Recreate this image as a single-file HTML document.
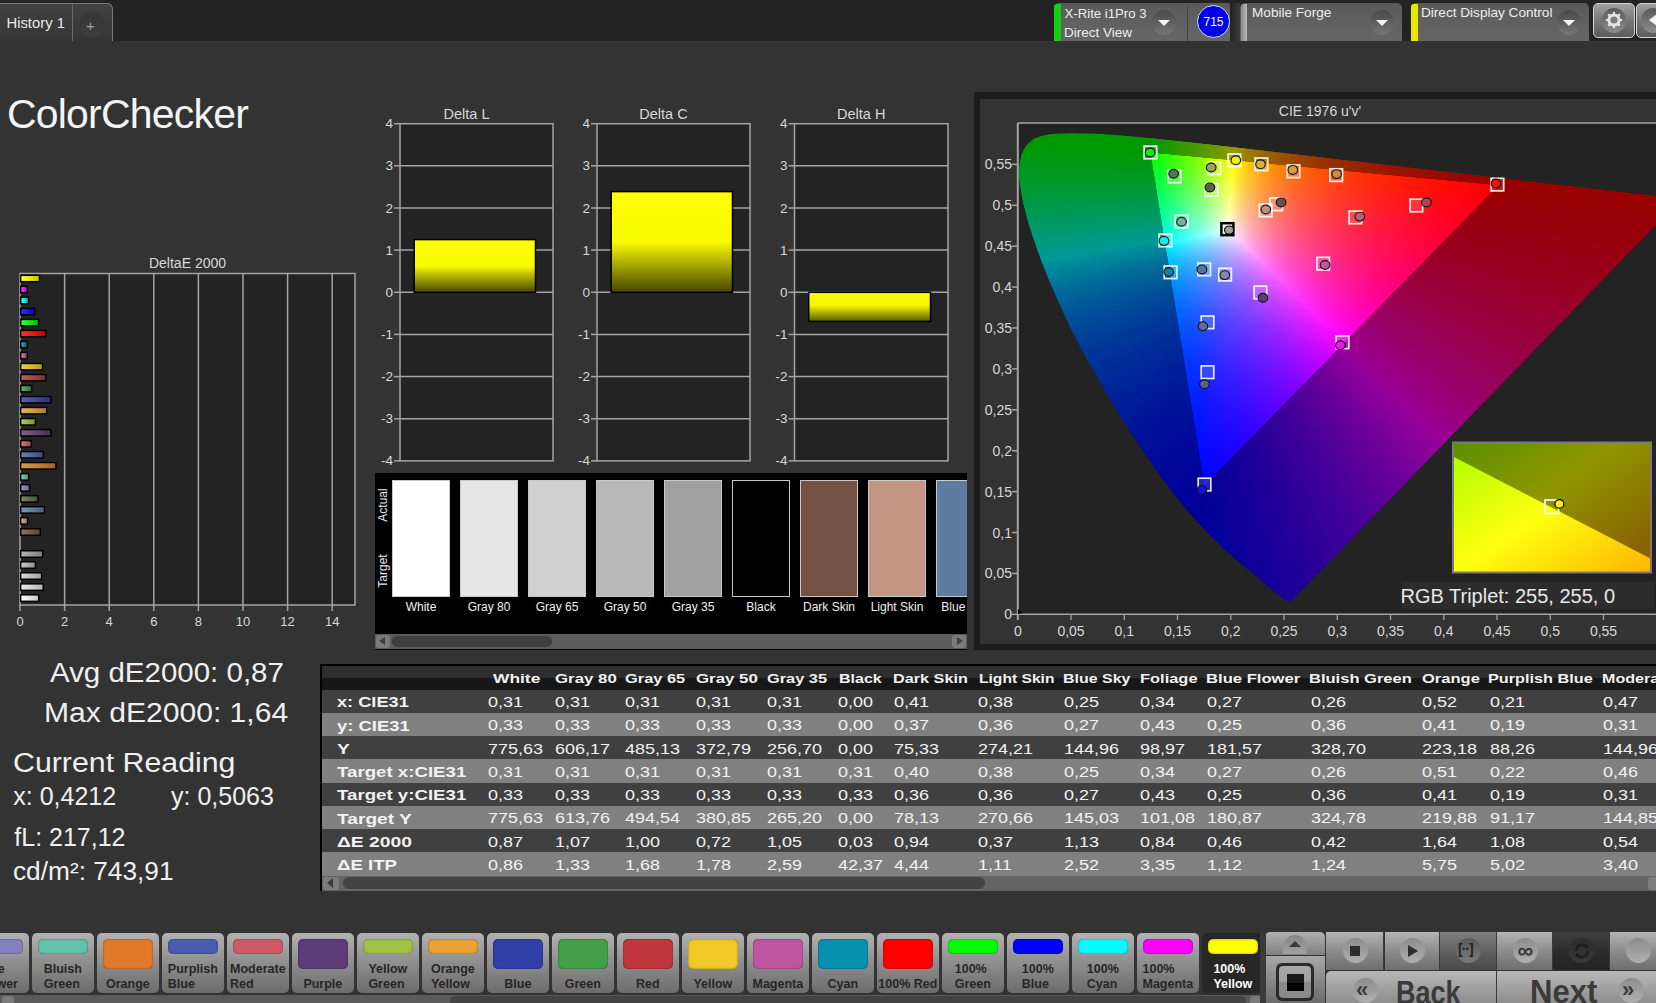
<!DOCTYPE html>
<html><head><meta charset="utf-8"><title>ColorChecker</title>
<style>
*{box-sizing:border-box;margin:0;padding:0}
html,body{width:1656px;height:1003px;overflow:hidden;background:#333333;font-family:"Liberation Sans",sans-serif;color:#e8e8e8}
.a{position:absolute}
.t{position:absolute;white-space:nowrap;line-height:1}
</style></head><body>

<div class="a" style="left:0;top:0;width:1656px;height:41px;background:#232323"></div>
<div class="a" style="left:-4px;top:3px;width:117px;height:38px;border:1px solid #7a7a7a;border-bottom:none;border-radius:0 6px 0 0;background:linear-gradient(#424242,#353535)"></div>
<div class="a" style="left:72px;top:4px;width:1px;height:37px;background:#6a6a6a"></div>
<div class="a" style="left:79.5px;top:12.5px;width:24px;height:25px;border-radius:50%;background:linear-gradient(#363636,#3e3e3e);box-shadow:0 0 1px #2a2a2a"></div>
<div class="t" style="left:86px;top:17.5px;font-size:15px;color:#a0a0a0">+</div>
<div class="t" style="left:6.5px;top:16px;font-size:14.8px;color:#e8e8e8">History 1</div>
<div class="a" style="left:1054px;top:3px;width:178px;height:38px;border-radius:5px 5px 0 0;background:linear-gradient(#5a5a5a,#666)"></div>
<div class="a" style="left:1054px;top:4px;width:7px;height:37px;background:#10d010;border-radius:3px 0 0 0"></div>
<div class="t" style="left:1064.5px;top:7px;font-size:13.2px;color:#eee">X-Rite i1Pro 3</div>
<div class="t" style="left:1064px;top:25.5px;font-size:13.5px;color:#eee">Direct View</div>
<div class="a" style="left:1152px;top:10px;width:24px;height:25px;border-radius:50%;background:linear-gradient(#484848,#767676)"></div><div class="a" style="left:1158px;top:20px;width:0;height:0;border-left:6px solid transparent;border-right:6px solid transparent;border-top:6px solid #f4f4f4"></div>
<div class="a" style="left:1187px;top:6px;width:1px;height:35px;background:#444"></div>
<div class="a" style="left:1197px;top:5px;width:33px;height:33px;border-radius:50%;background:#0000e8;border:1.5px solid #d8d8ff"></div>
<div class="t" style="left:1197px;top:16px;width:33px;text-align:center;font-size:12px;color:#fff">715</div>
<div class="a" style="left:1240px;top:3px;width:162px;height:38px;border-radius:5px 5px 0 0;background:linear-gradient(#5a5a5a,#666)"></div>
<div class="a" style="left:1241px;top:4px;width:6px;height:37px;background:linear-gradient(90deg,#888,#bbb);border-radius:3px 0 0 0"></div>
<div class="a" style="left:1230px;top:3px;width:10px;height:38px;background:linear-gradient(90deg,#232323,#3a3a3a)"></div>
<div class="t" style="left:1252px;top:6px;font-size:13.6px;color:#eee">Mobile Forge</div>
<div class="a" style="left:1370px;top:10px;width:24px;height:25px;border-radius:50%;background:linear-gradient(#484848,#767676)"></div><div class="a" style="left:1376px;top:20px;width:0;height:0;border-left:6px solid transparent;border-right:6px solid transparent;border-top:6px solid #f4f4f4"></div>
<div class="a" style="left:1411px;top:3px;width:178px;height:38px;border-radius:5px 5px 0 0;background:linear-gradient(#5a5a5a,#666)"></div>
<div class="a" style="left:1411px;top:4px;width:7px;height:37px;background:#e8e800;border-radius:3px 0 0 0"></div>
<div class="t" style="left:1421px;top:6px;font-size:13.6px;color:#eee">Direct Display Control</div>
<div class="a" style="left:1557px;top:10px;width:24px;height:25px;border-radius:50%;background:linear-gradient(#484848,#767676)"></div><div class="a" style="left:1563px;top:20px;width:0;height:0;border-left:6px solid transparent;border-right:6px solid transparent;border-top:6px solid #f4f4f4"></div>
<div class="a" style="left:1593px;top:3px;width:42px;height:35px;border-radius:5px;border:1.2px solid #d4d4d4;background:linear-gradient(#a0a0a0,#787878 50%,#5c5c5c)"></div>
<div class="a" style="left:1602px;top:8px;width:24px;height:25px;border-radius:50%;background:linear-gradient(#5a5a5a,#8c8c8c)"></div>
<svg class="a" style="left:1604px;top:10px" width="20" height="20" viewBox="0 0 20 20"><g fill="#e4e4e4"><circle cx="10" cy="10" r="6.6"/><rect x="8.9" y="1.8" width="2.2" height="4" rx="0.6" transform="rotate(0 10 10)"/><rect x="8.9" y="1.8" width="2.2" height="4" rx="0.6" transform="rotate(45 10 10)"/><rect x="8.9" y="1.8" width="2.2" height="4" rx="0.6" transform="rotate(90 10 10)"/><rect x="8.9" y="1.8" width="2.2" height="4" rx="0.6" transform="rotate(135 10 10)"/><rect x="8.9" y="1.8" width="2.2" height="4" rx="0.6" transform="rotate(180 10 10)"/><rect x="8.9" y="1.8" width="2.2" height="4" rx="0.6" transform="rotate(225 10 10)"/><rect x="8.9" y="1.8" width="2.2" height="4" rx="0.6" transform="rotate(270 10 10)"/><rect x="8.9" y="1.8" width="2.2" height="4" rx="0.6" transform="rotate(315 10 10)"/></g><circle cx="10" cy="10" r="3.6" fill="#7a7a7a"/></svg>
<div class="a" style="left:1636px;top:3px;width:30px;height:35px;border-radius:5px;border:1.2px solid #d4d4d4;background:linear-gradient(#a0a0a0,#787878 50%,#5c5c5c)"></div>
<div class="a" style="left:1641px;top:8px;width:24px;height:25px;border-radius:50%;background:linear-gradient(#5a5a5a,#8c8c8c)"></div>
<div class="a" style="left:1649px;top:13.5px;width:0;height:0;border-top:6px solid transparent;border-bottom:6px solid transparent;border-right:8px solid #f4f4f4"></div>
<div class="t" style="left:7px;top:93.5px;font-size:41px;letter-spacing:-0.8px;color:#f4f4f4">ColorChecker</div>
<div class="t" style="left:20px;top:256px;width:335px;text-align:center;font-size:14px;color:#d8d8d8">DeltaE 2000</div>
<svg class="a" style="left:0;top:260px" width="370" height="380" viewBox="0 260 370 380"><rect x="20" y="273.5" width="335" height="331.5" fill="#232323"/><line x1="64.6" y1="273.5" x2="64.6" y2="605" stroke="#a4a4a4" stroke-width="1.5"/><line x1="109.2" y1="273.5" x2="109.2" y2="605" stroke="#a4a4a4" stroke-width="1.5"/><line x1="153.8" y1="273.5" x2="153.8" y2="605" stroke="#a4a4a4" stroke-width="1.5"/><line x1="198.4" y1="273.5" x2="198.4" y2="605" stroke="#a4a4a4" stroke-width="1.5"/><line x1="243.0" y1="273.5" x2="243.0" y2="605" stroke="#a4a4a4" stroke-width="1.5"/><line x1="287.6" y1="273.5" x2="287.6" y2="605" stroke="#a4a4a4" stroke-width="1.5"/><line x1="332.2" y1="273.5" x2="332.2" y2="605" stroke="#a4a4a4" stroke-width="1.5"/><rect x="20" y="273.5" width="335" height="331.5" fill="none" stroke="#a4a4a4" stroke-width="1.5"/><line x1="20.0" y1="605" x2="20.0" y2="611" stroke="#a4a4a4" stroke-width="1.5"/><line x1="64.6" y1="605" x2="64.6" y2="611" stroke="#a4a4a4" stroke-width="1.5"/><line x1="109.2" y1="605" x2="109.2" y2="611" stroke="#a4a4a4" stroke-width="1.5"/><line x1="153.8" y1="605" x2="153.8" y2="611" stroke="#a4a4a4" stroke-width="1.5"/><line x1="198.4" y1="605" x2="198.4" y2="611" stroke="#a4a4a4" stroke-width="1.5"/><line x1="243.0" y1="605" x2="243.0" y2="611" stroke="#a4a4a4" stroke-width="1.5"/><line x1="287.6" y1="605" x2="287.6" y2="611" stroke="#a4a4a4" stroke-width="1.5"/><line x1="332.2" y1="605" x2="332.2" y2="611" stroke="#a4a4a4" stroke-width="1.5"/><defs><linearGradient id="bsh" x1="0" x2="1" y1="0" y2="0"><stop offset="0" stop-color="#fff" stop-opacity="0.18"/><stop offset="1" stop-color="#000" stop-opacity="0.22"/></linearGradient></defs><rect x="20.7" y="275.3" width="18.7" height="6.4" fill="#ffff00" stroke="#000" stroke-width="1.5"/><rect x="21.45" y="276.1" width="17.2" height="4.9" fill="url(#bsh)"/><rect x="20.7" y="286.3" width="6.6" height="6.4" fill="#ff00ff" stroke="#000" stroke-width="1.5"/><rect x="21.45" y="287.1" width="5.1" height="4.9" fill="url(#bsh)"/><rect x="20.7" y="297.3" width="7.7" height="6.4" fill="#00ffff" stroke="#000" stroke-width="1.5"/><rect x="21.45" y="298.1" width="6.2" height="4.9" fill="url(#bsh)"/><rect x="20.7" y="308.4" width="14.0" height="6.4" fill="#0000ff" stroke="#000" stroke-width="1.5"/><rect x="21.45" y="309.1" width="12.5" height="4.9" fill="url(#bsh)"/><rect x="20.7" y="319.4" width="17.8" height="6.4" fill="#00ff00" stroke="#000" stroke-width="1.5"/><rect x="21.45" y="320.1" width="16.3" height="4.9" fill="url(#bsh)"/><rect x="20.7" y="330.4" width="25.1" height="6.4" fill="#ff0000" stroke="#000" stroke-width="1.5"/><rect x="21.45" y="331.2" width="23.6" height="4.9" fill="url(#bsh)"/><rect x="20.7" y="341.4" width="6.6" height="6.4" fill="#0885a1" stroke="#000" stroke-width="1.5"/><rect x="21.45" y="342.2" width="5.1" height="4.9" fill="url(#bsh)"/><rect x="20.7" y="352.4" width="6.6" height="6.4" fill="#bb5695" stroke="#000" stroke-width="1.5"/><rect x="21.45" y="353.2" width="5.1" height="4.9" fill="url(#bsh)"/><rect x="20.7" y="363.5" width="21.8" height="6.4" fill="#e7c71f" stroke="#000" stroke-width="1.5"/><rect x="21.45" y="364.2" width="20.3" height="4.9" fill="url(#bsh)"/><rect x="20.7" y="374.5" width="25.1" height="6.4" fill="#af363c" stroke="#000" stroke-width="1.5"/><rect x="21.45" y="375.2" width="23.6" height="4.9" fill="url(#bsh)"/><rect x="20.7" y="385.5" width="10.9" height="6.4" fill="#469449" stroke="#000" stroke-width="1.5"/><rect x="21.45" y="386.2" width="9.4" height="4.9" fill="url(#bsh)"/><rect x="20.7" y="396.5" width="30.3" height="6.4" fill="#383d96" stroke="#000" stroke-width="1.5"/><rect x="21.45" y="397.3" width="28.8" height="4.9" fill="url(#bsh)"/><rect x="20.7" y="407.5" width="26.0" height="6.4" fill="#e0a32e" stroke="#000" stroke-width="1.5"/><rect x="21.45" y="408.3" width="24.5" height="4.9" fill="url(#bsh)"/><rect x="20.7" y="418.6" width="14.7" height="6.4" fill="#9dbc40" stroke="#000" stroke-width="1.5"/><rect x="21.45" y="419.3" width="13.2" height="4.9" fill="url(#bsh)"/><rect x="20.7" y="429.6" width="30.3" height="6.4" fill="#5e3c6c" stroke="#000" stroke-width="1.5"/><rect x="21.45" y="430.3" width="28.8" height="4.9" fill="url(#bsh)"/><rect x="20.7" y="440.6" width="10.6" height="6.4" fill="#c15a63" stroke="#000" stroke-width="1.5"/><rect x="21.45" y="441.3" width="9.1" height="4.9" fill="url(#bsh)"/><rect x="20.7" y="451.6" width="22.7" height="6.4" fill="#505ba6" stroke="#000" stroke-width="1.5"/><rect x="21.45" y="452.4" width="21.2" height="4.9" fill="url(#bsh)"/><rect x="20.7" y="462.6" width="35.2" height="6.4" fill="#d67e2c" stroke="#000" stroke-width="1.5"/><rect x="21.45" y="463.4" width="33.7" height="4.9" fill="url(#bsh)"/><rect x="20.7" y="473.7" width="8.0" height="6.4" fill="#67bdaa" stroke="#000" stroke-width="1.5"/><rect x="21.45" y="474.4" width="6.5" height="4.9" fill="url(#bsh)"/><rect x="20.7" y="484.7" width="8.9" height="6.4" fill="#8580b1" stroke="#000" stroke-width="1.5"/><rect x="21.45" y="485.4" width="7.4" height="4.9" fill="url(#bsh)"/><rect x="20.7" y="495.7" width="17.3" height="6.4" fill="#596b42" stroke="#000" stroke-width="1.5"/><rect x="21.45" y="496.4" width="15.8" height="4.9" fill="url(#bsh)"/><rect x="20.7" y="506.7" width="23.8" height="6.4" fill="#5e7ba0" stroke="#000" stroke-width="1.5"/><rect x="21.45" y="507.5" width="22.3" height="4.9" fill="url(#bsh)"/><rect x="20.7" y="517.7" width="6.9" height="6.4" fill="#c29682" stroke="#000" stroke-width="1.5"/><rect x="21.45" y="518.5" width="5.4" height="4.9" fill="url(#bsh)"/><rect x="20.7" y="528.8" width="19.6" height="6.4" fill="#735244" stroke="#000" stroke-width="1.5"/><rect x="21.45" y="529.5" width="18.1" height="4.9" fill="url(#bsh)"/><rect x="20.7" y="550.8" width="22.0" height="6.4" fill="#a0a0a0" stroke="#000" stroke-width="1.5"/><rect x="21.45" y="551.5" width="20.5" height="4.9" fill="url(#bsh)"/><rect x="20.7" y="561.8" width="14.7" height="6.4" fill="#b9b9b9" stroke="#000" stroke-width="1.5"/><rect x="21.45" y="562.6" width="13.2" height="4.9" fill="url(#bsh)"/><rect x="20.7" y="572.8" width="20.9" height="6.4" fill="#d0d0d0" stroke="#000" stroke-width="1.5"/><rect x="21.45" y="573.6" width="19.4" height="4.9" fill="url(#bsh)"/><rect x="20.7" y="583.9" width="22.5" height="6.4" fill="#e6e6e6" stroke="#000" stroke-width="1.5"/><rect x="21.45" y="584.6" width="21.0" height="4.9" fill="url(#bsh)"/><rect x="20.7" y="594.9" width="18.0" height="6.4" fill="#ffffff" stroke="#000" stroke-width="1.5"/><rect x="21.45" y="595.6" width="16.5" height="4.9" fill="url(#bsh)"/></svg>
<div class="t" style="left:5.0px;top:615px;width:30px;text-align:center;font-size:13px;color:#d8d8d8">0</div>
<div class="t" style="left:49.6px;top:615px;width:30px;text-align:center;font-size:13px;color:#d8d8d8">2</div>
<div class="t" style="left:94.2px;top:615px;width:30px;text-align:center;font-size:13px;color:#d8d8d8">4</div>
<div class="t" style="left:138.8px;top:615px;width:30px;text-align:center;font-size:13px;color:#d8d8d8">6</div>
<div class="t" style="left:183.4px;top:615px;width:30px;text-align:center;font-size:13px;color:#d8d8d8">8</div>
<div class="t" style="left:228.0px;top:615px;width:30px;text-align:center;font-size:13px;color:#d8d8d8">10</div>
<div class="t" style="left:272.6px;top:615px;width:30px;text-align:center;font-size:13px;color:#d8d8d8">12</div>
<div class="t" style="left:317.2px;top:615px;width:30px;text-align:center;font-size:13px;color:#d8d8d8">14</div>
<div class="t" style="left:390.0px;top:107px;width:153.0px;text-align:center;font-size:14.5px;color:#d8d8d8">Delta L</div>
<svg class="a" style="left:370px;top:110px" width="193" height="360" viewBox="370 110 193 360"><rect x="400.0" y="123.7" width="153.0" height="337.2" fill="#232323"/><line x1="400.0" y1="165.8" x2="553.0" y2="165.8" stroke="#a4a4a4" stroke-width="1.5"/><line x1="400.0" y1="208.0" x2="553.0" y2="208.0" stroke="#a4a4a4" stroke-width="1.5"/><line x1="400.0" y1="250.1" x2="553.0" y2="250.1" stroke="#a4a4a4" stroke-width="1.5"/><line x1="400.0" y1="292.3" x2="553.0" y2="292.3" stroke="#a4a4a4" stroke-width="1.5"/><line x1="400.0" y1="334.4" x2="553.0" y2="334.4" stroke="#a4a4a4" stroke-width="1.5"/><line x1="400.0" y1="376.6" x2="553.0" y2="376.6" stroke="#a4a4a4" stroke-width="1.5"/><line x1="400.0" y1="418.8" x2="553.0" y2="418.8" stroke="#a4a4a4" stroke-width="1.5"/><line x1="394.0" y1="123.7" x2="400.0" y2="123.7" stroke="#a4a4a4" stroke-width="1.5"/><line x1="394.0" y1="165.8" x2="400.0" y2="165.8" stroke="#a4a4a4" stroke-width="1.5"/><line x1="394.0" y1="208.0" x2="400.0" y2="208.0" stroke="#a4a4a4" stroke-width="1.5"/><line x1="394.0" y1="250.1" x2="400.0" y2="250.1" stroke="#a4a4a4" stroke-width="1.5"/><line x1="394.0" y1="292.3" x2="400.0" y2="292.3" stroke="#a4a4a4" stroke-width="1.5"/><line x1="394.0" y1="334.4" x2="400.0" y2="334.4" stroke="#a4a4a4" stroke-width="1.5"/><line x1="394.0" y1="376.6" x2="400.0" y2="376.6" stroke="#a4a4a4" stroke-width="1.5"/><line x1="394.0" y1="418.8" x2="400.0" y2="418.8" stroke="#a4a4a4" stroke-width="1.5"/><line x1="394.0" y1="460.9" x2="400.0" y2="460.9" stroke="#a4a4a4" stroke-width="1.5"/><defs><linearGradient id="g400" x1="0" x2="0" y1="0" y2="1"><stop offset="0" stop-color="#ffff00"/><stop offset="0.5" stop-color="#fafa00"/><stop offset="1" stop-color="#464600"/></linearGradient></defs><rect x="414.2" y="239.6" width="121.3" height="52.7" fill="url(#g400)" stroke="#000" stroke-width="1.5"/><rect x="400.0" y="123.7" width="153.0" height="337.2" fill="none" stroke="#a4a4a4" stroke-width="1.5"/></svg>
<div class="t" style="left:363.0px;top:117.2px;width:30px;text-align:right;font-size:13.5px;color:#d8d8d8">4</div>
<div class="t" style="left:363.0px;top:159.3px;width:30px;text-align:right;font-size:13.5px;color:#d8d8d8">3</div>
<div class="t" style="left:363.0px;top:201.5px;width:30px;text-align:right;font-size:13.5px;color:#d8d8d8">2</div>
<div class="t" style="left:363.0px;top:243.6px;width:30px;text-align:right;font-size:13.5px;color:#d8d8d8">1</div>
<div class="t" style="left:363.0px;top:285.8px;width:30px;text-align:right;font-size:13.5px;color:#d8d8d8">0</div>
<div class="t" style="left:363.0px;top:327.9px;width:30px;text-align:right;font-size:13.5px;color:#d8d8d8">-1</div>
<div class="t" style="left:363.0px;top:370.1px;width:30px;text-align:right;font-size:13.5px;color:#d8d8d8">-2</div>
<div class="t" style="left:363.0px;top:412.2px;width:30px;text-align:right;font-size:13.5px;color:#d8d8d8">-3</div>
<div class="t" style="left:363.0px;top:454.4px;width:30px;text-align:right;font-size:13.5px;color:#d8d8d8">-4</div>
<div class="t" style="left:587.0px;top:107px;width:153.0px;text-align:center;font-size:14.5px;color:#d8d8d8">Delta C</div>
<svg class="a" style="left:567px;top:110px" width="193" height="360" viewBox="567 110 193 360"><rect x="597.0" y="123.7" width="153.0" height="337.2" fill="#232323"/><line x1="597.0" y1="165.8" x2="750.0" y2="165.8" stroke="#a4a4a4" stroke-width="1.5"/><line x1="597.0" y1="208.0" x2="750.0" y2="208.0" stroke="#a4a4a4" stroke-width="1.5"/><line x1="597.0" y1="250.1" x2="750.0" y2="250.1" stroke="#a4a4a4" stroke-width="1.5"/><line x1="597.0" y1="292.3" x2="750.0" y2="292.3" stroke="#a4a4a4" stroke-width="1.5"/><line x1="597.0" y1="334.4" x2="750.0" y2="334.4" stroke="#a4a4a4" stroke-width="1.5"/><line x1="597.0" y1="376.6" x2="750.0" y2="376.6" stroke="#a4a4a4" stroke-width="1.5"/><line x1="597.0" y1="418.8" x2="750.0" y2="418.8" stroke="#a4a4a4" stroke-width="1.5"/><line x1="591.0" y1="123.7" x2="597.0" y2="123.7" stroke="#a4a4a4" stroke-width="1.5"/><line x1="591.0" y1="165.8" x2="597.0" y2="165.8" stroke="#a4a4a4" stroke-width="1.5"/><line x1="591.0" y1="208.0" x2="597.0" y2="208.0" stroke="#a4a4a4" stroke-width="1.5"/><line x1="591.0" y1="250.1" x2="597.0" y2="250.1" stroke="#a4a4a4" stroke-width="1.5"/><line x1="591.0" y1="292.3" x2="597.0" y2="292.3" stroke="#a4a4a4" stroke-width="1.5"/><line x1="591.0" y1="334.4" x2="597.0" y2="334.4" stroke="#a4a4a4" stroke-width="1.5"/><line x1="591.0" y1="376.6" x2="597.0" y2="376.6" stroke="#a4a4a4" stroke-width="1.5"/><line x1="591.0" y1="418.8" x2="597.0" y2="418.8" stroke="#a4a4a4" stroke-width="1.5"/><line x1="591.0" y1="460.9" x2="597.0" y2="460.9" stroke="#a4a4a4" stroke-width="1.5"/><defs><linearGradient id="g597" x1="0" x2="0" y1="0" y2="1"><stop offset="0" stop-color="#ffff00"/><stop offset="0.5" stop-color="#fafa00"/><stop offset="1" stop-color="#464600"/></linearGradient></defs><rect x="611.2" y="191.6" width="121.3" height="100.7" fill="url(#g597)" stroke="#000" stroke-width="1.5"/><rect x="597.0" y="123.7" width="153.0" height="337.2" fill="none" stroke="#a4a4a4" stroke-width="1.5"/></svg>
<div class="t" style="left:560.0px;top:117.2px;width:30px;text-align:right;font-size:13.5px;color:#d8d8d8">4</div>
<div class="t" style="left:560.0px;top:159.3px;width:30px;text-align:right;font-size:13.5px;color:#d8d8d8">3</div>
<div class="t" style="left:560.0px;top:201.5px;width:30px;text-align:right;font-size:13.5px;color:#d8d8d8">2</div>
<div class="t" style="left:560.0px;top:243.6px;width:30px;text-align:right;font-size:13.5px;color:#d8d8d8">1</div>
<div class="t" style="left:560.0px;top:285.8px;width:30px;text-align:right;font-size:13.5px;color:#d8d8d8">0</div>
<div class="t" style="left:560.0px;top:327.9px;width:30px;text-align:right;font-size:13.5px;color:#d8d8d8">-1</div>
<div class="t" style="left:560.0px;top:370.1px;width:30px;text-align:right;font-size:13.5px;color:#d8d8d8">-2</div>
<div class="t" style="left:560.0px;top:412.2px;width:30px;text-align:right;font-size:13.5px;color:#d8d8d8">-3</div>
<div class="t" style="left:560.0px;top:454.4px;width:30px;text-align:right;font-size:13.5px;color:#d8d8d8">-4</div>
<div class="t" style="left:784.5px;top:107px;width:153.5px;text-align:center;font-size:14.5px;color:#d8d8d8">Delta H</div>
<svg class="a" style="left:764px;top:110px" width="193" height="360" viewBox="764 110 193 360"><rect x="794.5" y="123.7" width="153.5" height="337.2" fill="#232323"/><line x1="794.5" y1="165.8" x2="948.0" y2="165.8" stroke="#a4a4a4" stroke-width="1.5"/><line x1="794.5" y1="208.0" x2="948.0" y2="208.0" stroke="#a4a4a4" stroke-width="1.5"/><line x1="794.5" y1="250.1" x2="948.0" y2="250.1" stroke="#a4a4a4" stroke-width="1.5"/><line x1="794.5" y1="292.3" x2="948.0" y2="292.3" stroke="#a4a4a4" stroke-width="1.5"/><line x1="794.5" y1="334.4" x2="948.0" y2="334.4" stroke="#a4a4a4" stroke-width="1.5"/><line x1="794.5" y1="376.6" x2="948.0" y2="376.6" stroke="#a4a4a4" stroke-width="1.5"/><line x1="794.5" y1="418.8" x2="948.0" y2="418.8" stroke="#a4a4a4" stroke-width="1.5"/><line x1="788.5" y1="123.7" x2="794.5" y2="123.7" stroke="#a4a4a4" stroke-width="1.5"/><line x1="788.5" y1="165.8" x2="794.5" y2="165.8" stroke="#a4a4a4" stroke-width="1.5"/><line x1="788.5" y1="208.0" x2="794.5" y2="208.0" stroke="#a4a4a4" stroke-width="1.5"/><line x1="788.5" y1="250.1" x2="794.5" y2="250.1" stroke="#a4a4a4" stroke-width="1.5"/><line x1="788.5" y1="292.3" x2="794.5" y2="292.3" stroke="#a4a4a4" stroke-width="1.5"/><line x1="788.5" y1="334.4" x2="794.5" y2="334.4" stroke="#a4a4a4" stroke-width="1.5"/><line x1="788.5" y1="376.6" x2="794.5" y2="376.6" stroke="#a4a4a4" stroke-width="1.5"/><line x1="788.5" y1="418.8" x2="794.5" y2="418.8" stroke="#a4a4a4" stroke-width="1.5"/><line x1="788.5" y1="460.9" x2="794.5" y2="460.9" stroke="#a4a4a4" stroke-width="1.5"/><defs><linearGradient id="g794" x1="0" x2="0" y1="0" y2="1"><stop offset="0" stop-color="#ffff00"/><stop offset="0.45" stop-color="#f6f600"/><stop offset="1" stop-color="#5a5a00"/></linearGradient></defs><rect x="808.7" y="292.3" width="121.8" height="29.1" fill="url(#g794)" stroke="#000" stroke-width="1.5"/><rect x="794.5" y="123.7" width="153.5" height="337.2" fill="none" stroke="#a4a4a4" stroke-width="1.5"/></svg>
<div class="t" style="left:757.5px;top:117.2px;width:30px;text-align:right;font-size:13.5px;color:#d8d8d8">4</div>
<div class="t" style="left:757.5px;top:159.3px;width:30px;text-align:right;font-size:13.5px;color:#d8d8d8">3</div>
<div class="t" style="left:757.5px;top:201.5px;width:30px;text-align:right;font-size:13.5px;color:#d8d8d8">2</div>
<div class="t" style="left:757.5px;top:243.6px;width:30px;text-align:right;font-size:13.5px;color:#d8d8d8">1</div>
<div class="t" style="left:757.5px;top:285.8px;width:30px;text-align:right;font-size:13.5px;color:#d8d8d8">0</div>
<div class="t" style="left:757.5px;top:327.9px;width:30px;text-align:right;font-size:13.5px;color:#d8d8d8">-1</div>
<div class="t" style="left:757.5px;top:370.1px;width:30px;text-align:right;font-size:13.5px;color:#d8d8d8">-2</div>
<div class="t" style="left:757.5px;top:412.2px;width:30px;text-align:right;font-size:13.5px;color:#d8d8d8">-3</div>
<div class="t" style="left:757.5px;top:454.4px;width:30px;text-align:right;font-size:13.5px;color:#d8d8d8">-4</div>
<div class="a" style="left:375px;top:473px;width:592px;height:177px;background:#000"></div>
<div class="a" style="left:375px;top:473px;width:592px;height:177px;overflow:hidden">
<div class="a" style="left:17px;top:7px;width:58px;height:117px;background:#ffffff;border:1px solid #c8c8c8"></div>
<div class="t" style="left:17px;top:128px;width:58px;text-align:center;font-size:12px;color:#f0f0f0">White</div>
<div class="a" style="left:85px;top:7px;width:58px;height:117px;background:#e6e6e6;border:1px solid #c8c8c8"></div>
<div class="t" style="left:85px;top:128px;width:58px;text-align:center;font-size:12px;color:#f0f0f0">Gray 80</div>
<div class="a" style="left:153px;top:7px;width:58px;height:117px;background:#d0d0d0;border:1px solid #c8c8c8"></div>
<div class="t" style="left:153px;top:128px;width:58px;text-align:center;font-size:12px;color:#f0f0f0">Gray 65</div>
<div class="a" style="left:221px;top:7px;width:58px;height:117px;background:#b9b9b9;border:1px solid #c8c8c8"></div>
<div class="t" style="left:221px;top:128px;width:58px;text-align:center;font-size:12px;color:#f0f0f0">Gray 50</div>
<div class="a" style="left:289px;top:7px;width:58px;height:117px;background:#a0a0a0;border:1px solid #c8c8c8"></div>
<div class="t" style="left:289px;top:128px;width:58px;text-align:center;font-size:12px;color:#f0f0f0">Gray 35</div>
<div class="a" style="left:357px;top:7px;width:58px;height:117px;background:#000000;border:1px solid #c8c8c8"></div>
<div class="t" style="left:357px;top:128px;width:58px;text-align:center;font-size:12px;color:#f0f0f0">Black</div>
<div class="a" style="left:425px;top:7px;width:58px;height:117px;background:#735244;border:1px solid #c8c8c8"></div>
<div class="t" style="left:425px;top:128px;width:58px;text-align:center;font-size:12px;color:#f0f0f0">Dark Skin</div>
<div class="a" style="left:493px;top:7px;width:58px;height:117px;background:#c29682;border:1px solid #c8c8c8"></div>
<div class="t" style="left:493px;top:128px;width:58px;text-align:center;font-size:12px;color:#f0f0f0">Light Skin</div>
<div class="a" style="left:561px;top:7px;width:58px;height:117px;background:#5e7ba0;border:1px solid #c8c8c8"></div>
<div class="t" style="left:561px;top:128px;width:58px;text-align:center;font-size:12px;color:#f0f0f0">Blue Sky</div>
</div>
<div class="t" style="left:366px;top:499px;font-size:12px;color:#e8e8e8;transform:rotate(-90deg);transform-origin:center;width:34px;text-align:center">Actual</div>
<div class="t" style="left:366px;top:565px;font-size:12px;color:#e8e8e8;transform:rotate(-90deg);transform-origin:center;width:34px;text-align:center">Target</div>
<div class="a" style="left:375px;top:634px;width:592px;height:15px;background:#5c5c5c"></div>
<div class="a" style="left:376px;top:635px;width:14px;height:13px;background:#7a7a7a;border-radius:3px"></div>
<div class="a" style="left:379px;top:637px;width:0;height:0;border-top:4.5px solid transparent;border-bottom:4.5px solid transparent;border-right:6px solid #404040"></div>
<div class="a" style="left:392px;top:636px;width:160px;height:11px;background:#3e3e3e;border-radius:6px"></div>
<div class="a" style="left:952px;top:635px;width:14px;height:13px;background:#7a7a7a;border-radius:3px"></div>
<div class="a" style="left:957px;top:637px;width:0;height:0;border-top:4.5px solid transparent;border-bottom:4.5px solid transparent;border-left:6px solid #404040"></div>
<div class="t" style="left:50.0px;top:660.0px;font-size:27.0px;color:#f0f0f0;transform:scaleX(1.092);transform-origin:0 0">Avg dE2000: 0,87</div>
<div class="t" style="left:44.1px;top:700.2px;font-size:27.0px;color:#f0f0f0;transform:scaleX(1.114);transform-origin:0 0">Max dE2000: 1,64</div>
<div class="t" style="left:13.2px;top:749.5px;font-size:27.0px;color:#f0f0f0;transform:scaleX(1.123);transform-origin:0 0">Current Reading</div>
<div class="t" style="left:13.3px;top:784.0px;font-size:25.0px;color:#f0f0f0;transform:scaleX(1.0);transform-origin:0 0">x: 0,4212</div>
<div class="t" style="left:171.0px;top:784.0px;font-size:25.0px;color:#f0f0f0;transform:scaleX(1.0);transform-origin:0 0">y: 0,5063</div>
<div class="t" style="left:14.3px;top:824.5px;font-size:25.0px;color:#f0f0f0;transform:scaleX(1.0);transform-origin:0 0">fL: 217,12</div>
<div class="t" style="left:13.3px;top:859.0px;font-size:25.0px;color:#f0f0f0;transform:scaleX(1.05);transform-origin:0 0">cd/m&#178;: 743,91</div>
<div class="a" style="left:973.5px;top:92px;width:700px;height:558px;background:#1c1c1c"></div>
<div class="a" style="left:980px;top:99px;width:700px;height:545px;background:#333333"></div>
<div class="t" style="left:1220px;top:104px;width:200px;text-align:center;font-size:14px;color:#d8d8d8">CIE 1976 u'v'</div>
<svg class="a" style="left:980px;top:99px" width="676" height="545" viewBox="980 99 676 545"><defs><clipPath id="hs"><path d="M1286.1,600.3 L1288.0,601.1 L1289.5,601.1 L1291.4,600.4 L1292.9,599.2 L1673.8,206.2 L1674.9,204.6 L1675.3,202.7 L1674.9,200.8 L1673.9,199.2 L1672.7,198.3 L1671.3,197.8 L1652.7,195.6 L1222.2,146.1 L1162.6,139.5 L1122.9,135.6 L1102.2,134.1 L1086.3,133.4 L1071.1,133.2 L1056.2,133.7 L1047.6,134.6 L1040.0,136.4 L1035.4,138.3 L1033.2,139.6 L1028.8,143.1 L1025.7,146.7 L1024.2,149.1 L1021.7,154.6 L1020.0,161.5 L1019.3,169.0 L1019.5,177.6 L1019.9,182.5 L1021.5,193.5 L1024.2,206.5 L1028.0,220.9 L1033.3,237.7 L1039.9,256.5 L1047.8,276.7 L1057.1,298.6 L1067.6,321.6 L1073.3,333.3 L1079.4,345.0 L1092.5,368.8 L1106.0,392.2 L1119.6,414.8 L1140.0,446.7 L1152.9,465.5 L1165.3,482.6 L1176.9,497.8 L1187.8,511.1 L1197.8,522.5 L1206.3,531.7 L1224.7,549.4 L1237.3,560.5 L1274.6,591.4 L1282.1,597.5 L1286.1,600.3 Z"/></clipPath><clipPath id="plot"><rect x="1018.5" y="123.5" width="640" height="490.5"/></clipPath><linearGradient id="eGB" gradientUnits="userSpaceOnUse" x1="1150.9" y1="153.0" x2="1204.6" y2="484.8"><stop offset="0.000" stop-color="#009900"/><stop offset="0.042" stop-color="#009913"/><stop offset="0.083" stop-color="#009927"/><stop offset="0.125" stop-color="#00993d"/><stop offset="0.167" stop-color="#009955"/><stop offset="0.208" stop-color="#009970"/><stop offset="0.250" stop-color="#00998e"/><stop offset="0.292" stop-color="#008699"/><stop offset="0.333" stop-color="#006e99"/><stop offset="0.375" stop-color="#005c99"/><stop offset="0.417" stop-color="#004d99"/><stop offset="0.458" stop-color="#004199"/><stop offset="0.500" stop-color="#003799"/><stop offset="0.542" stop-color="#002f99"/><stop offset="0.583" stop-color="#002799"/><stop offset="0.625" stop-color="#002199"/><stop offset="0.667" stop-color="#001c99"/><stop offset="0.708" stop-color="#001799"/><stop offset="0.750" stop-color="#001299"/><stop offset="0.792" stop-color="#000e99"/><stop offset="0.833" stop-color="#000b99"/><stop offset="0.875" stop-color="#000899"/><stop offset="0.917" stop-color="#000599"/><stop offset="0.958" stop-color="#000299"/><stop offset="1.000" stop-color="#000099"/></linearGradient><linearGradient id="eGR" gradientUnits="userSpaceOnUse" x1="1150.9" y1="153.0" x2="1497.8" y2="185.5"><stop offset="0.000" stop-color="#009900"/><stop offset="0.042" stop-color="#159900"/><stop offset="0.083" stop-color="#2b9900"/><stop offset="0.125" stop-color="#449900"/><stop offset="0.167" stop-color="#609900"/><stop offset="0.208" stop-color="#7e9900"/><stop offset="0.250" stop-color="#999300"/><stop offset="0.292" stop-color="#997700"/><stop offset="0.333" stop-color="#996200"/><stop offset="0.375" stop-color="#995200"/><stop offset="0.417" stop-color="#994500"/><stop offset="0.458" stop-color="#993a00"/><stop offset="0.500" stop-color="#993100"/><stop offset="0.542" stop-color="#992900"/><stop offset="0.583" stop-color="#992300"/><stop offset="0.625" stop-color="#991d00"/><stop offset="0.667" stop-color="#991800"/><stop offset="0.708" stop-color="#991400"/><stop offset="0.750" stop-color="#991000"/><stop offset="0.792" stop-color="#990d00"/><stop offset="0.833" stop-color="#990a00"/><stop offset="0.875" stop-color="#990700"/><stop offset="0.917" stop-color="#990400"/><stop offset="0.958" stop-color="#990200"/><stop offset="1.000" stop-color="#990000"/></linearGradient><linearGradient id="eBR" gradientUnits="userSpaceOnUse" x1="1204.6" y1="484.8" x2="1497.8" y2="185.5"><stop offset="0.000" stop-color="#000099"/><stop offset="0.042" stop-color="#070099"/><stop offset="0.083" stop-color="#100099"/><stop offset="0.125" stop-color="#190099"/><stop offset="0.167" stop-color="#220099"/><stop offset="0.208" stop-color="#2d0099"/><stop offset="0.250" stop-color="#390099"/><stop offset="0.292" stop-color="#470099"/><stop offset="0.333" stop-color="#560099"/><stop offset="0.375" stop-color="#670099"/><stop offset="0.417" stop-color="#7b0099"/><stop offset="0.458" stop-color="#920099"/><stop offset="0.500" stop-color="#990088"/><stop offset="0.542" stop-color="#990073"/><stop offset="0.583" stop-color="#990061"/><stop offset="0.625" stop-color="#990052"/><stop offset="0.667" stop-color="#990044"/><stop offset="0.708" stop-color="#990038"/><stop offset="0.750" stop-color="#99002d"/><stop offset="0.792" stop-color="#990024"/><stop offset="0.833" stop-color="#99001b"/><stop offset="0.875" stop-color="#990013"/><stop offset="0.917" stop-color="#99000c"/><stop offset="0.958" stop-color="#990006"/><stop offset="1.000" stop-color="#990000"/></linearGradient><linearGradient id="w0" gradientUnits="userSpaceOnUse" x1="1228.5" y1="230.3" x2="1152.3" y2="153.2"><stop offset="0.00" stop-color="#fefffe"/><stop offset="0.04" stop-color="#efffee"/><stop offset="0.10" stop-color="#d7ffd7"/><stop offset="0.18" stop-color="#bbffbb"/><stop offset="0.28" stop-color="#9cff9b"/><stop offset="0.40" stop-color="#7aff79"/><stop offset="0.55" stop-color="#56ff54"/><stop offset="0.70" stop-color="#37ff34"/><stop offset="0.85" stop-color="#1bff18"/><stop offset="1.00" stop-color="#03ff00"/></linearGradient><linearGradient id="w1" gradientUnits="userSpaceOnUse" x1="1228.5" y1="230.3" x2="1155.1" y2="153.4"><stop offset="0.00" stop-color="#fefffe"/><stop offset="0.04" stop-color="#efffef"/><stop offset="0.10" stop-color="#d9ffd7"/><stop offset="0.18" stop-color="#bdffbb"/><stop offset="0.28" stop-color="#9fff9b"/><stop offset="0.40" stop-color="#7eff79"/><stop offset="0.55" stop-color="#5bff54"/><stop offset="0.70" stop-color="#3cff34"/><stop offset="0.85" stop-color="#21ff19"/><stop offset="1.00" stop-color="#0aff00"/></linearGradient><linearGradient id="w2" gradientUnits="userSpaceOnUse" x1="1228.5" y1="230.3" x2="1157.9" y2="153.7"><stop offset="0.00" stop-color="#fefffe"/><stop offset="0.04" stop-color="#f0ffef"/><stop offset="0.10" stop-color="#daffd8"/><stop offset="0.18" stop-color="#c0ffbb"/><stop offset="0.28" stop-color="#a2ff9b"/><stop offset="0.40" stop-color="#82ff7a"/><stop offset="0.55" stop-color="#60ff55"/><stop offset="0.70" stop-color="#42ff35"/><stop offset="0.85" stop-color="#27ff19"/><stop offset="1.00" stop-color="#10ff00"/></linearGradient><linearGradient id="w3" gradientUnits="userSpaceOnUse" x1="1228.5" y1="230.3" x2="1160.6" y2="154.0"><stop offset="0.00" stop-color="#fefffe"/><stop offset="0.04" stop-color="#f0ffef"/><stop offset="0.10" stop-color="#dbffd8"/><stop offset="0.18" stop-color="#c2ffbc"/><stop offset="0.28" stop-color="#a5ff9c"/><stop offset="0.40" stop-color="#86ff7a"/><stop offset="0.55" stop-color="#64ff55"/><stop offset="0.70" stop-color="#47ff35"/><stop offset="0.85" stop-color="#2eff19"/><stop offset="1.00" stop-color="#17ff00"/></linearGradient><linearGradient id="w4" gradientUnits="userSpaceOnUse" x1="1228.5" y1="230.3" x2="1163.4" y2="154.2"><stop offset="0.00" stop-color="#fefffe"/><stop offset="0.04" stop-color="#f1ffef"/><stop offset="0.10" stop-color="#ddffd8"/><stop offset="0.18" stop-color="#c4ffbc"/><stop offset="0.28" stop-color="#a8ff9c"/><stop offset="0.40" stop-color="#8aff7b"/><stop offset="0.55" stop-color="#69ff56"/><stop offset="0.70" stop-color="#4dff35"/><stop offset="0.85" stop-color="#34ff19"/><stop offset="1.00" stop-color="#1eff00"/></linearGradient><linearGradient id="w5" gradientUnits="userSpaceOnUse" x1="1228.5" y1="230.3" x2="1166.2" y2="154.5"><stop offset="0.00" stop-color="#fefffe"/><stop offset="0.04" stop-color="#f1ffef"/><stop offset="0.10" stop-color="#deffd8"/><stop offset="0.18" stop-color="#c6ffbd"/><stop offset="0.28" stop-color="#abff9d"/><stop offset="0.40" stop-color="#8eff7b"/><stop offset="0.55" stop-color="#6eff56"/><stop offset="0.70" stop-color="#53ff36"/><stop offset="0.85" stop-color="#3aff19"/><stop offset="1.00" stop-color="#25ff00"/></linearGradient><linearGradient id="w6" gradientUnits="userSpaceOnUse" x1="1228.5" y1="230.3" x2="1169.0" y2="154.7"><stop offset="0.00" stop-color="#fefffe"/><stop offset="0.04" stop-color="#f2ffef"/><stop offset="0.10" stop-color="#dfffd9"/><stop offset="0.18" stop-color="#c8ffbd"/><stop offset="0.28" stop-color="#aeff9d"/><stop offset="0.40" stop-color="#92ff7c"/><stop offset="0.55" stop-color="#73ff57"/><stop offset="0.70" stop-color="#59ff36"/><stop offset="0.85" stop-color="#41ff19"/><stop offset="1.00" stop-color="#2cff00"/></linearGradient><linearGradient id="w7" gradientUnits="userSpaceOnUse" x1="1228.5" y1="230.3" x2="1171.7" y2="155.0"><stop offset="0.00" stop-color="#fefffe"/><stop offset="0.04" stop-color="#f2ffef"/><stop offset="0.10" stop-color="#e0ffd9"/><stop offset="0.18" stop-color="#caffbd"/><stop offset="0.28" stop-color="#b1ff9e"/><stop offset="0.40" stop-color="#96ff7c"/><stop offset="0.55" stop-color="#79ff57"/><stop offset="0.70" stop-color="#5eff36"/><stop offset="0.85" stop-color="#47ff1a"/><stop offset="1.00" stop-color="#33ff00"/></linearGradient><linearGradient id="w8" gradientUnits="userSpaceOnUse" x1="1228.5" y1="230.3" x2="1174.5" y2="155.3"><stop offset="0.00" stop-color="#fefffe"/><stop offset="0.04" stop-color="#f3ffef"/><stop offset="0.10" stop-color="#e2ffd9"/><stop offset="0.18" stop-color="#cdffbe"/><stop offset="0.28" stop-color="#b4ff9f"/><stop offset="0.40" stop-color="#9aff7d"/><stop offset="0.55" stop-color="#7eff58"/><stop offset="0.70" stop-color="#64ff37"/><stop offset="0.85" stop-color="#4eff1a"/><stop offset="1.00" stop-color="#3aff00"/></linearGradient><linearGradient id="w9" gradientUnits="userSpaceOnUse" x1="1228.5" y1="230.3" x2="1177.3" y2="155.5"><stop offset="0.00" stop-color="#fefffe"/><stop offset="0.04" stop-color="#f3fff0"/><stop offset="0.10" stop-color="#e3ffd9"/><stop offset="0.18" stop-color="#cfffbe"/><stop offset="0.28" stop-color="#b8ff9f"/><stop offset="0.40" stop-color="#9fff7d"/><stop offset="0.55" stop-color="#83ff58"/><stop offset="0.70" stop-color="#6bff37"/><stop offset="0.85" stop-color="#55ff1a"/><stop offset="1.00" stop-color="#42ff00"/></linearGradient><linearGradient id="w10" gradientUnits="userSpaceOnUse" x1="1228.5" y1="230.3" x2="1180.1" y2="155.8"><stop offset="0.00" stop-color="#fefffe"/><stop offset="0.04" stop-color="#f4fff0"/><stop offset="0.10" stop-color="#e4ffda"/><stop offset="0.18" stop-color="#d1ffbf"/><stop offset="0.28" stop-color="#bbffa0"/><stop offset="0.40" stop-color="#a3ff7e"/><stop offset="0.55" stop-color="#88ff59"/><stop offset="0.70" stop-color="#71ff38"/><stop offset="0.85" stop-color="#5cff1a"/><stop offset="1.00" stop-color="#49ff00"/></linearGradient><linearGradient id="w11" gradientUnits="userSpaceOnUse" x1="1228.5" y1="230.3" x2="1182.8" y2="156.0"><stop offset="0.00" stop-color="#fefffe"/><stop offset="0.04" stop-color="#f5fff0"/><stop offset="0.10" stop-color="#e6ffda"/><stop offset="0.18" stop-color="#d3ffbf"/><stop offset="0.28" stop-color="#beffa0"/><stop offset="0.40" stop-color="#a7ff7e"/><stop offset="0.55" stop-color="#8eff59"/><stop offset="0.70" stop-color="#77ff38"/><stop offset="0.85" stop-color="#63ff1a"/><stop offset="1.00" stop-color="#51ff00"/></linearGradient><linearGradient id="w12" gradientUnits="userSpaceOnUse" x1="1228.5" y1="230.3" x2="1185.6" y2="156.3"><stop offset="0.00" stop-color="#fefffe"/><stop offset="0.04" stop-color="#f5fff0"/><stop offset="0.10" stop-color="#e7ffda"/><stop offset="0.18" stop-color="#d5ffbf"/><stop offset="0.28" stop-color="#c1ffa1"/><stop offset="0.40" stop-color="#abff7f"/><stop offset="0.55" stop-color="#93ff5a"/><stop offset="0.70" stop-color="#7dff38"/><stop offset="0.85" stop-color="#6aff1b"/><stop offset="1.00" stop-color="#59ff00"/></linearGradient><linearGradient id="w13" gradientUnits="userSpaceOnUse" x1="1228.5" y1="230.3" x2="1187.7" y2="156.5"><stop offset="0.00" stop-color="#fefffe"/><stop offset="0.04" stop-color="#f5fff0"/><stop offset="0.10" stop-color="#e8ffdb"/><stop offset="0.18" stop-color="#d7ffc0"/><stop offset="0.28" stop-color="#c4ffa1"/><stop offset="0.40" stop-color="#afff7f"/><stop offset="0.55" stop-color="#97ff5a"/><stop offset="0.70" stop-color="#82ff39"/><stop offset="0.85" stop-color="#6fff1b"/><stop offset="1.00" stop-color="#5fff00"/></linearGradient><linearGradient id="w14" gradientUnits="userSpaceOnUse" x1="1228.5" y1="230.3" x2="1189.1" y2="156.6"><stop offset="0.00" stop-color="#fefffe"/><stop offset="0.04" stop-color="#f6fff0"/><stop offset="0.10" stop-color="#e9ffdb"/><stop offset="0.18" stop-color="#d8ffc0"/><stop offset="0.28" stop-color="#c5ffa1"/><stop offset="0.40" stop-color="#b1ff80"/><stop offset="0.55" stop-color="#9aff5a"/><stop offset="0.70" stop-color="#85ff39"/><stop offset="0.85" stop-color="#73ff1b"/><stop offset="1.00" stop-color="#63ff00"/></linearGradient><linearGradient id="w15" gradientUnits="userSpaceOnUse" x1="1228.5" y1="230.3" x2="1190.5" y2="156.8"><stop offset="0.00" stop-color="#fefffe"/><stop offset="0.04" stop-color="#f6fff0"/><stop offset="0.10" stop-color="#e9ffdb"/><stop offset="0.18" stop-color="#d9ffc0"/><stop offset="0.28" stop-color="#c7ffa2"/><stop offset="0.40" stop-color="#b3ff80"/><stop offset="0.55" stop-color="#9dff5a"/><stop offset="0.70" stop-color="#89ff39"/><stop offset="0.85" stop-color="#77ff1b"/><stop offset="1.00" stop-color="#67ff00"/></linearGradient><linearGradient id="w16" gradientUnits="userSpaceOnUse" x1="1228.5" y1="230.3" x2="1191.9" y2="156.9"><stop offset="0.00" stop-color="#fefffe"/><stop offset="0.04" stop-color="#f6fff0"/><stop offset="0.10" stop-color="#eaffdb"/><stop offset="0.18" stop-color="#dbffc0"/><stop offset="0.28" stop-color="#c9ffa2"/><stop offset="0.40" stop-color="#b5ff80"/><stop offset="0.55" stop-color="#9fff5b"/><stop offset="0.70" stop-color="#8cff39"/><stop offset="0.85" stop-color="#7aff1b"/><stop offset="1.00" stop-color="#6bff00"/></linearGradient><linearGradient id="w17" gradientUnits="userSpaceOnUse" x1="1228.5" y1="230.3" x2="1193.2" y2="157.0"><stop offset="0.00" stop-color="#fffffe"/><stop offset="0.04" stop-color="#f7fff0"/><stop offset="0.10" stop-color="#ebffdb"/><stop offset="0.18" stop-color="#dcffc1"/><stop offset="0.28" stop-color="#caffa2"/><stop offset="0.40" stop-color="#b7ff81"/><stop offset="0.55" stop-color="#a2ff5b"/><stop offset="0.70" stop-color="#8fff39"/><stop offset="0.85" stop-color="#7eff1b"/><stop offset="1.00" stop-color="#6fff00"/></linearGradient><linearGradient id="w18" gradientUnits="userSpaceOnUse" x1="1228.5" y1="230.3" x2="1194.6" y2="157.1"><stop offset="0.00" stop-color="#fffffe"/><stop offset="0.04" stop-color="#f7fff0"/><stop offset="0.10" stop-color="#ebffdb"/><stop offset="0.18" stop-color="#ddffc1"/><stop offset="0.28" stop-color="#ccffa2"/><stop offset="0.40" stop-color="#baff81"/><stop offset="0.55" stop-color="#a5ff5b"/><stop offset="0.70" stop-color="#93ff3a"/><stop offset="0.85" stop-color="#82ff1b"/><stop offset="1.00" stop-color="#73ff00"/></linearGradient><linearGradient id="w19" gradientUnits="userSpaceOnUse" x1="1228.5" y1="230.3" x2="1196.0" y2="157.3"><stop offset="0.00" stop-color="#fffffe"/><stop offset="0.04" stop-color="#f7fff0"/><stop offset="0.10" stop-color="#ecffdb"/><stop offset="0.18" stop-color="#deffc1"/><stop offset="0.28" stop-color="#ceffa3"/><stop offset="0.40" stop-color="#bcff81"/><stop offset="0.55" stop-color="#a8ff5c"/><stop offset="0.70" stop-color="#96ff3a"/><stop offset="0.85" stop-color="#86ff1b"/><stop offset="1.00" stop-color="#77ff00"/></linearGradient><linearGradient id="w20" gradientUnits="userSpaceOnUse" x1="1228.5" y1="230.3" x2="1197.4" y2="157.4"><stop offset="0.00" stop-color="#fffffe"/><stop offset="0.04" stop-color="#f7fff0"/><stop offset="0.10" stop-color="#edffdc"/><stop offset="0.18" stop-color="#dfffc1"/><stop offset="0.28" stop-color="#cfffa3"/><stop offset="0.40" stop-color="#beff81"/><stop offset="0.55" stop-color="#abff5c"/><stop offset="0.70" stop-color="#99ff3a"/><stop offset="0.85" stop-color="#8aff1c"/><stop offset="1.00" stop-color="#7bff00"/></linearGradient><linearGradient id="w21" gradientUnits="userSpaceOnUse" x1="1228.5" y1="230.3" x2="1198.8" y2="157.5"><stop offset="0.00" stop-color="#fffffe"/><stop offset="0.04" stop-color="#f8fff0"/><stop offset="0.10" stop-color="#edffdc"/><stop offset="0.18" stop-color="#e0ffc2"/><stop offset="0.28" stop-color="#d1ffa3"/><stop offset="0.40" stop-color="#c0ff82"/><stop offset="0.55" stop-color="#aeff5c"/><stop offset="0.70" stop-color="#9dff3a"/><stop offset="0.85" stop-color="#8dff1c"/><stop offset="1.00" stop-color="#80ff00"/></linearGradient><linearGradient id="w22" gradientUnits="userSpaceOnUse" x1="1228.5" y1="230.3" x2="1200.2" y2="157.7"><stop offset="0.00" stop-color="#fffffe"/><stop offset="0.04" stop-color="#f8fff1"/><stop offset="0.10" stop-color="#eeffdc"/><stop offset="0.18" stop-color="#e1ffc2"/><stop offset="0.28" stop-color="#d3ffa3"/><stop offset="0.40" stop-color="#c3ff82"/><stop offset="0.55" stop-color="#b0ff5c"/><stop offset="0.70" stop-color="#a0ff3a"/><stop offset="0.85" stop-color="#91ff1c"/><stop offset="1.00" stop-color="#84ff00"/></linearGradient><linearGradient id="w23" gradientUnits="userSpaceOnUse" x1="1228.5" y1="230.3" x2="1201.6" y2="157.8"><stop offset="0.00" stop-color="#fffffe"/><stop offset="0.04" stop-color="#f8fff1"/><stop offset="0.10" stop-color="#efffdc"/><stop offset="0.18" stop-color="#e3ffc2"/><stop offset="0.28" stop-color="#d4ffa4"/><stop offset="0.40" stop-color="#c5ff82"/><stop offset="0.55" stop-color="#b3ff5d"/><stop offset="0.70" stop-color="#a4ff3b"/><stop offset="0.85" stop-color="#95ff1c"/><stop offset="1.00" stop-color="#88ff00"/></linearGradient><linearGradient id="w24" gradientUnits="userSpaceOnUse" x1="1228.5" y1="230.3" x2="1203.0" y2="157.9"><stop offset="0.00" stop-color="#fffffe"/><stop offset="0.04" stop-color="#f9fff1"/><stop offset="0.10" stop-color="#efffdc"/><stop offset="0.18" stop-color="#e4ffc2"/><stop offset="0.28" stop-color="#d6ffa4"/><stop offset="0.40" stop-color="#c7ff83"/><stop offset="0.55" stop-color="#b6ff5d"/><stop offset="0.70" stop-color="#a7ff3b"/><stop offset="0.85" stop-color="#99ff1c"/><stop offset="1.00" stop-color="#8dff00"/></linearGradient><linearGradient id="w25" gradientUnits="userSpaceOnUse" x1="1228.5" y1="230.3" x2="1204.3" y2="158.1"><stop offset="0.00" stop-color="#fffffe"/><stop offset="0.04" stop-color="#f9fff1"/><stop offset="0.10" stop-color="#f0ffdc"/><stop offset="0.18" stop-color="#e5ffc2"/><stop offset="0.28" stop-color="#d8ffa4"/><stop offset="0.40" stop-color="#caff83"/><stop offset="0.55" stop-color="#b9ff5d"/><stop offset="0.70" stop-color="#abff3b"/><stop offset="0.85" stop-color="#9dff1c"/><stop offset="1.00" stop-color="#91ff00"/></linearGradient><linearGradient id="w26" gradientUnits="userSpaceOnUse" x1="1228.5" y1="230.3" x2="1205.7" y2="158.2"><stop offset="0.00" stop-color="#fffffe"/><stop offset="0.04" stop-color="#f9fff1"/><stop offset="0.10" stop-color="#f1ffdc"/><stop offset="0.18" stop-color="#e6ffc3"/><stop offset="0.28" stop-color="#daffa5"/><stop offset="0.40" stop-color="#ccff83"/><stop offset="0.55" stop-color="#bcff5d"/><stop offset="0.70" stop-color="#aeff3b"/><stop offset="0.85" stop-color="#a1ff1c"/><stop offset="1.00" stop-color="#96ff00"/></linearGradient><linearGradient id="w27" gradientUnits="userSpaceOnUse" x1="1228.5" y1="230.3" x2="1207.1" y2="158.3"><stop offset="0.00" stop-color="#fffffe"/><stop offset="0.04" stop-color="#f9fff1"/><stop offset="0.10" stop-color="#f1ffdd"/><stop offset="0.18" stop-color="#e7ffc3"/><stop offset="0.28" stop-color="#dbffa5"/><stop offset="0.40" stop-color="#ceff84"/><stop offset="0.55" stop-color="#bfff5e"/><stop offset="0.70" stop-color="#b2ff3c"/><stop offset="0.85" stop-color="#a5ff1c"/><stop offset="1.00" stop-color="#9aff00"/></linearGradient><linearGradient id="w28" gradientUnits="userSpaceOnUse" x1="1228.5" y1="230.3" x2="1208.5" y2="158.4"><stop offset="0.00" stop-color="#fffffe"/><stop offset="0.04" stop-color="#fafff1"/><stop offset="0.10" stop-color="#f2ffdd"/><stop offset="0.18" stop-color="#e8ffc3"/><stop offset="0.28" stop-color="#ddffa5"/><stop offset="0.40" stop-color="#d0ff84"/><stop offset="0.55" stop-color="#c2ff5e"/><stop offset="0.70" stop-color="#b5ff3c"/><stop offset="0.85" stop-color="#a9ff1d"/><stop offset="1.00" stop-color="#9fff00"/></linearGradient><linearGradient id="w29" gradientUnits="userSpaceOnUse" x1="1228.5" y1="230.3" x2="1209.9" y2="158.6"><stop offset="0.00" stop-color="#fffffe"/><stop offset="0.04" stop-color="#fafff1"/><stop offset="0.10" stop-color="#f3ffdd"/><stop offset="0.18" stop-color="#e9ffc3"/><stop offset="0.28" stop-color="#dfffa5"/><stop offset="0.40" stop-color="#d3ff84"/><stop offset="0.55" stop-color="#c5ff5e"/><stop offset="0.70" stop-color="#b9ff3c"/><stop offset="0.85" stop-color="#aeff1d"/><stop offset="1.00" stop-color="#a3ff00"/></linearGradient><linearGradient id="w30" gradientUnits="userSpaceOnUse" x1="1228.5" y1="230.3" x2="1211.3" y2="158.7"><stop offset="0.00" stop-color="#fffffe"/><stop offset="0.04" stop-color="#fafff1"/><stop offset="0.10" stop-color="#f3ffdd"/><stop offset="0.18" stop-color="#ebffc3"/><stop offset="0.28" stop-color="#e0ffa6"/><stop offset="0.40" stop-color="#d5ff84"/><stop offset="0.55" stop-color="#c8ff5f"/><stop offset="0.70" stop-color="#bcff3c"/><stop offset="0.85" stop-color="#b2ff1d"/><stop offset="1.00" stop-color="#a8ff00"/></linearGradient><linearGradient id="w31" gradientUnits="userSpaceOnUse" x1="1228.5" y1="230.3" x2="1212.7" y2="158.8"><stop offset="0.00" stop-color="#fffffe"/><stop offset="0.04" stop-color="#fafff1"/><stop offset="0.10" stop-color="#f4ffdd"/><stop offset="0.18" stop-color="#ecffc4"/><stop offset="0.28" stop-color="#e2ffa6"/><stop offset="0.40" stop-color="#d7ff85"/><stop offset="0.55" stop-color="#cbff5f"/><stop offset="0.70" stop-color="#c0ff3c"/><stop offset="0.85" stop-color="#b6ff1d"/><stop offset="1.00" stop-color="#adff00"/></linearGradient><linearGradient id="w32" gradientUnits="userSpaceOnUse" x1="1228.5" y1="230.3" x2="1214.1" y2="159.0"><stop offset="0.00" stop-color="#fffffe"/><stop offset="0.04" stop-color="#fbfff1"/><stop offset="0.10" stop-color="#f5ffdd"/><stop offset="0.18" stop-color="#edffc4"/><stop offset="0.28" stop-color="#e4ffa6"/><stop offset="0.40" stop-color="#daff85"/><stop offset="0.55" stop-color="#ceff5f"/><stop offset="0.70" stop-color="#c4ff3d"/><stop offset="0.85" stop-color="#baff1d"/><stop offset="1.00" stop-color="#b1ff00"/></linearGradient><linearGradient id="w33" gradientUnits="userSpaceOnUse" x1="1228.5" y1="230.3" x2="1215.4" y2="159.1"><stop offset="0.00" stop-color="#fffffe"/><stop offset="0.04" stop-color="#fbfff1"/><stop offset="0.10" stop-color="#f5ffdd"/><stop offset="0.18" stop-color="#eeffc4"/><stop offset="0.28" stop-color="#e6ffa6"/><stop offset="0.40" stop-color="#dcff85"/><stop offset="0.55" stop-color="#d1ff5f"/><stop offset="0.70" stop-color="#c8ff3d"/><stop offset="0.85" stop-color="#beff1d"/><stop offset="1.00" stop-color="#b6ff00"/></linearGradient><linearGradient id="w34" gradientUnits="userSpaceOnUse" x1="1228.5" y1="230.3" x2="1216.8" y2="159.2"><stop offset="0.00" stop-color="#fffffe"/><stop offset="0.04" stop-color="#fbfff1"/><stop offset="0.10" stop-color="#f6ffde"/><stop offset="0.18" stop-color="#efffc4"/><stop offset="0.28" stop-color="#e7ffa7"/><stop offset="0.40" stop-color="#dfff86"/><stop offset="0.55" stop-color="#d4ff60"/><stop offset="0.70" stop-color="#cbff3d"/><stop offset="0.85" stop-color="#c3ff1d"/><stop offset="1.00" stop-color="#bbff00"/></linearGradient><linearGradient id="w35" gradientUnits="userSpaceOnUse" x1="1228.5" y1="230.3" x2="1218.2" y2="159.4"><stop offset="0.00" stop-color="#fffffe"/><stop offset="0.04" stop-color="#fcfff1"/><stop offset="0.10" stop-color="#f7ffde"/><stop offset="0.18" stop-color="#f0ffc5"/><stop offset="0.28" stop-color="#e9ffa7"/><stop offset="0.40" stop-color="#e1ff86"/><stop offset="0.55" stop-color="#d8ff60"/><stop offset="0.70" stop-color="#cfff3d"/><stop offset="0.85" stop-color="#c7ff1d"/><stop offset="1.00" stop-color="#c0ff00"/></linearGradient><linearGradient id="w36" gradientUnits="userSpaceOnUse" x1="1228.5" y1="230.3" x2="1219.6" y2="159.5"><stop offset="0.00" stop-color="#fffffe"/><stop offset="0.04" stop-color="#fcfff1"/><stop offset="0.10" stop-color="#f7ffde"/><stop offset="0.18" stop-color="#f2ffc5"/><stop offset="0.28" stop-color="#ebffa7"/><stop offset="0.40" stop-color="#e3ff86"/><stop offset="0.55" stop-color="#dbff60"/><stop offset="0.70" stop-color="#d3ff3e"/><stop offset="0.85" stop-color="#ccff1e"/><stop offset="1.00" stop-color="#c5ff00"/></linearGradient><linearGradient id="w37" gradientUnits="userSpaceOnUse" x1="1228.5" y1="230.3" x2="1221.0" y2="159.6"><stop offset="0.00" stop-color="#fffffe"/><stop offset="0.04" stop-color="#fcfff2"/><stop offset="0.10" stop-color="#f8ffde"/><stop offset="0.18" stop-color="#f3ffc5"/><stop offset="0.28" stop-color="#edffa8"/><stop offset="0.40" stop-color="#e6ff87"/><stop offset="0.55" stop-color="#deff61"/><stop offset="0.70" stop-color="#d7ff3e"/><stop offset="0.85" stop-color="#d0ff1e"/><stop offset="1.00" stop-color="#caff00"/></linearGradient><linearGradient id="w38" gradientUnits="userSpaceOnUse" x1="1228.5" y1="230.3" x2="1222.4" y2="159.7"><stop offset="0.00" stop-color="#fffffe"/><stop offset="0.04" stop-color="#fcfff2"/><stop offset="0.10" stop-color="#f9ffde"/><stop offset="0.18" stop-color="#f4ffc5"/><stop offset="0.28" stop-color="#eeffa8"/><stop offset="0.40" stop-color="#e8ff87"/><stop offset="0.55" stop-color="#e1ff61"/><stop offset="0.70" stop-color="#dbff3e"/><stop offset="0.85" stop-color="#d4ff1e"/><stop offset="1.00" stop-color="#cfff00"/></linearGradient><linearGradient id="w39" gradientUnits="userSpaceOnUse" x1="1228.5" y1="230.3" x2="1223.8" y2="159.9"><stop offset="0.00" stop-color="#fffffe"/><stop offset="0.04" stop-color="#fdfff2"/><stop offset="0.10" stop-color="#f9ffde"/><stop offset="0.18" stop-color="#f5ffc5"/><stop offset="0.28" stop-color="#f0ffa8"/><stop offset="0.40" stop-color="#ebff87"/><stop offset="0.55" stop-color="#e4ff61"/><stop offset="0.70" stop-color="#deff3e"/><stop offset="0.85" stop-color="#d9ff1e"/><stop offset="1.00" stop-color="#d4ff00"/></linearGradient><linearGradient id="w40" gradientUnits="userSpaceOnUse" x1="1228.5" y1="230.3" x2="1225.2" y2="160.0"><stop offset="0.00" stop-color="#fffffe"/><stop offset="0.04" stop-color="#fdfff2"/><stop offset="0.10" stop-color="#faffde"/><stop offset="0.18" stop-color="#f6ffc6"/><stop offset="0.28" stop-color="#f2ffa8"/><stop offset="0.40" stop-color="#edff88"/><stop offset="0.55" stop-color="#e8ff62"/><stop offset="0.70" stop-color="#e2ff3f"/><stop offset="0.85" stop-color="#ddff1e"/><stop offset="1.00" stop-color="#d9ff00"/></linearGradient><linearGradient id="w41" gradientUnits="userSpaceOnUse" x1="1228.5" y1="230.3" x2="1226.5" y2="160.1"><stop offset="0.00" stop-color="#fffffe"/><stop offset="0.04" stop-color="#fdfff2"/><stop offset="0.10" stop-color="#fbffdf"/><stop offset="0.18" stop-color="#f8ffc6"/><stop offset="0.28" stop-color="#f4ffa9"/><stop offset="0.40" stop-color="#f0ff88"/><stop offset="0.55" stop-color="#ebff62"/><stop offset="0.70" stop-color="#e6ff3f"/><stop offset="0.85" stop-color="#e2ff1e"/><stop offset="1.00" stop-color="#deff00"/></linearGradient><linearGradient id="w42" gradientUnits="userSpaceOnUse" x1="1228.5" y1="230.3" x2="1227.9" y2="160.3"><stop offset="0.00" stop-color="#fffffe"/><stop offset="0.04" stop-color="#fefff2"/><stop offset="0.10" stop-color="#fbffdf"/><stop offset="0.18" stop-color="#f9ffc6"/><stop offset="0.28" stop-color="#f6ffa9"/><stop offset="0.40" stop-color="#f2ff88"/><stop offset="0.55" stop-color="#eeff62"/><stop offset="0.70" stop-color="#eaff3f"/><stop offset="0.85" stop-color="#e7ff1e"/><stop offset="1.00" stop-color="#e3ff00"/></linearGradient><linearGradient id="w43" gradientUnits="userSpaceOnUse" x1="1228.5" y1="230.3" x2="1229.3" y2="160.4"><stop offset="0.00" stop-color="#fffffe"/><stop offset="0.04" stop-color="#fefff2"/><stop offset="0.10" stop-color="#fcffdf"/><stop offset="0.18" stop-color="#faffc6"/><stop offset="0.28" stop-color="#f7ffa9"/><stop offset="0.40" stop-color="#f5ff89"/><stop offset="0.55" stop-color="#f1ff63"/><stop offset="0.70" stop-color="#eeff3f"/><stop offset="0.85" stop-color="#ebff1e"/><stop offset="1.00" stop-color="#e9ff00"/></linearGradient><linearGradient id="w44" gradientUnits="userSpaceOnUse" x1="1228.5" y1="230.3" x2="1230.7" y2="160.5"><stop offset="0.00" stop-color="#fffffe"/><stop offset="0.04" stop-color="#fefff2"/><stop offset="0.10" stop-color="#fdffdf"/><stop offset="0.18" stop-color="#fbffc7"/><stop offset="0.28" stop-color="#f9ffaa"/><stop offset="0.40" stop-color="#f7ff89"/><stop offset="0.55" stop-color="#f5ff63"/><stop offset="0.70" stop-color="#f2ff3f"/><stop offset="0.85" stop-color="#f0ff1f"/><stop offset="1.00" stop-color="#eeff00"/></linearGradient><linearGradient id="w45" gradientUnits="userSpaceOnUse" x1="1228.5" y1="230.3" x2="1232.1" y2="160.7"><stop offset="0.00" stop-color="#fffffe"/><stop offset="0.04" stop-color="#fefff2"/><stop offset="0.10" stop-color="#feffdf"/><stop offset="0.18" stop-color="#fcffc7"/><stop offset="0.28" stop-color="#fbffaa"/><stop offset="0.40" stop-color="#faff89"/><stop offset="0.55" stop-color="#f8ff63"/><stop offset="0.70" stop-color="#f6ff40"/><stop offset="0.85" stop-color="#f5ff1f"/><stop offset="1.00" stop-color="#f3ff00"/></linearGradient><linearGradient id="w46" gradientUnits="userSpaceOnUse" x1="1228.5" y1="230.3" x2="1233.5" y2="160.8"><stop offset="0.00" stop-color="#fffffe"/><stop offset="0.04" stop-color="#fffff2"/><stop offset="0.10" stop-color="#feffdf"/><stop offset="0.18" stop-color="#feffc7"/><stop offset="0.28" stop-color="#fdffaa"/><stop offset="0.40" stop-color="#fcff8a"/><stop offset="0.55" stop-color="#fbff63"/><stop offset="0.70" stop-color="#faff40"/><stop offset="0.85" stop-color="#faff1f"/><stop offset="1.00" stop-color="#f9ff00"/></linearGradient><linearGradient id="w47" gradientUnits="userSpaceOnUse" x1="1228.5" y1="230.3" x2="1234.9" y2="160.9"><stop offset="0.00" stop-color="#fffffe"/><stop offset="0.04" stop-color="#fffff2"/><stop offset="0.10" stop-color="#ffffdf"/><stop offset="0.18" stop-color="#ffffc7"/><stop offset="0.28" stop-color="#ffffab"/><stop offset="0.40" stop-color="#ffff8a"/><stop offset="0.55" stop-color="#ffff64"/><stop offset="0.70" stop-color="#ffff40"/><stop offset="0.85" stop-color="#ffff1f"/><stop offset="1.00" stop-color="#feff00"/></linearGradient><linearGradient id="w48" gradientUnits="userSpaceOnUse" x1="1228.5" y1="230.3" x2="1236.3" y2="161.0"><stop offset="0.00" stop-color="#fffffe"/><stop offset="0.04" stop-color="#fffff2"/><stop offset="0.10" stop-color="#fffedf"/><stop offset="0.18" stop-color="#fffec7"/><stop offset="0.28" stop-color="#fffdaa"/><stop offset="0.40" stop-color="#fffd89"/><stop offset="0.55" stop-color="#fffc63"/><stop offset="0.70" stop-color="#fffb40"/><stop offset="0.85" stop-color="#fffb1f"/><stop offset="1.00" stop-color="#fffa00"/></linearGradient><linearGradient id="w49" gradientUnits="userSpaceOnUse" x1="1228.5" y1="230.3" x2="1237.6" y2="161.2"><stop offset="0.00" stop-color="#fffffe"/><stop offset="0.04" stop-color="#fffff2"/><stop offset="0.10" stop-color="#fffedf"/><stop offset="0.18" stop-color="#fffdc6"/><stop offset="0.28" stop-color="#fffca9"/><stop offset="0.40" stop-color="#fffa88"/><stop offset="0.55" stop-color="#fff962"/><stop offset="0.70" stop-color="#fff73f"/><stop offset="0.85" stop-color="#fff61e"/><stop offset="1.00" stop-color="#fff500"/></linearGradient><linearGradient id="w50" gradientUnits="userSpaceOnUse" x1="1228.5" y1="230.3" x2="1239.0" y2="161.3"><stop offset="0.00" stop-color="#fffffe"/><stop offset="0.04" stop-color="#fffef2"/><stop offset="0.10" stop-color="#fffdde"/><stop offset="0.18" stop-color="#fffcc5"/><stop offset="0.28" stop-color="#fffaa8"/><stop offset="0.40" stop-color="#fff887"/><stop offset="0.55" stop-color="#fff561"/><stop offset="0.70" stop-color="#fff33e"/><stop offset="0.85" stop-color="#fff11e"/><stop offset="1.00" stop-color="#fff000"/></linearGradient><linearGradient id="w51" gradientUnits="userSpaceOnUse" x1="1228.5" y1="230.3" x2="1240.4" y2="161.4"><stop offset="0.00" stop-color="#fffffe"/><stop offset="0.04" stop-color="#fffef1"/><stop offset="0.10" stop-color="#fffcde"/><stop offset="0.18" stop-color="#fffac5"/><stop offset="0.28" stop-color="#fff8a7"/><stop offset="0.40" stop-color="#fff586"/><stop offset="0.55" stop-color="#fff260"/><stop offset="0.70" stop-color="#fff03d"/><stop offset="0.85" stop-color="#ffed1d"/><stop offset="1.00" stop-color="#ffeb00"/></linearGradient><linearGradient id="w52" gradientUnits="userSpaceOnUse" x1="1228.5" y1="230.3" x2="1241.8" y2="161.6"><stop offset="0.00" stop-color="#fffffe"/><stop offset="0.04" stop-color="#fffef1"/><stop offset="0.10" stop-color="#fffcdd"/><stop offset="0.18" stop-color="#fff9c4"/><stop offset="0.28" stop-color="#fff6a6"/><stop offset="0.40" stop-color="#fff385"/><stop offset="0.55" stop-color="#ffef5f"/><stop offset="0.70" stop-color="#ffec3d"/><stop offset="0.85" stop-color="#ffe91d"/><stop offset="1.00" stop-color="#ffe600"/></linearGradient><linearGradient id="w53" gradientUnits="userSpaceOnUse" x1="1228.5" y1="230.3" x2="1243.2" y2="161.7"><stop offset="0.00" stop-color="#fffffe"/><stop offset="0.04" stop-color="#fffdf1"/><stop offset="0.10" stop-color="#fffbdd"/><stop offset="0.18" stop-color="#fff8c3"/><stop offset="0.28" stop-color="#fff5a5"/><stop offset="0.40" stop-color="#fff184"/><stop offset="0.55" stop-color="#ffec5e"/><stop offset="0.70" stop-color="#ffe83c"/><stop offset="0.85" stop-color="#ffe41d"/><stop offset="1.00" stop-color="#ffe100"/></linearGradient><linearGradient id="w54" gradientUnits="userSpaceOnUse" x1="1228.5" y1="230.3" x2="1244.6" y2="161.8"><stop offset="0.00" stop-color="#fffffe"/><stop offset="0.04" stop-color="#fffdf1"/><stop offset="0.10" stop-color="#fffadc"/><stop offset="0.18" stop-color="#fff7c3"/><stop offset="0.28" stop-color="#fff3a4"/><stop offset="0.40" stop-color="#ffee83"/><stop offset="0.55" stop-color="#ffe95d"/><stop offset="0.70" stop-color="#ffe53b"/><stop offset="0.85" stop-color="#ffe01c"/><stop offset="1.00" stop-color="#ffdd00"/></linearGradient><linearGradient id="w55" gradientUnits="userSpaceOnUse" x1="1228.5" y1="230.3" x2="1246.0" y2="162.0"><stop offset="0.00" stop-color="#fffffe"/><stop offset="0.04" stop-color="#fffdf1"/><stop offset="0.10" stop-color="#fffadc"/><stop offset="0.18" stop-color="#fff6c2"/><stop offset="0.28" stop-color="#fff1a4"/><stop offset="0.40" stop-color="#ffec82"/><stop offset="0.55" stop-color="#ffe65c"/><stop offset="0.70" stop-color="#ffe13b"/><stop offset="0.85" stop-color="#ffdc1c"/><stop offset="1.00" stop-color="#ffd800"/></linearGradient><linearGradient id="w56" gradientUnits="userSpaceOnUse" x1="1228.5" y1="230.3" x2="1247.4" y2="162.1"><stop offset="0.00" stop-color="#fffffe"/><stop offset="0.04" stop-color="#fffdf0"/><stop offset="0.10" stop-color="#fff9db"/><stop offset="0.18" stop-color="#fff5c1"/><stop offset="0.28" stop-color="#ffefa3"/><stop offset="0.40" stop-color="#ffea81"/><stop offset="0.55" stop-color="#ffe35c"/><stop offset="0.70" stop-color="#ffde3a"/><stop offset="0.85" stop-color="#ffd91c"/><stop offset="1.00" stop-color="#ffd400"/></linearGradient><linearGradient id="w57" gradientUnits="userSpaceOnUse" x1="1228.5" y1="230.3" x2="1248.7" y2="162.2"><stop offset="0.00" stop-color="#fffffe"/><stop offset="0.04" stop-color="#fffcf0"/><stop offset="0.10" stop-color="#fff8db"/><stop offset="0.18" stop-color="#fff3c0"/><stop offset="0.28" stop-color="#ffeea2"/><stop offset="0.40" stop-color="#ffe880"/><stop offset="0.55" stop-color="#ffe15b"/><stop offset="0.70" stop-color="#ffda39"/><stop offset="0.85" stop-color="#ffd51b"/><stop offset="1.00" stop-color="#ffd000"/></linearGradient><linearGradient id="w58" gradientUnits="userSpaceOnUse" x1="1228.5" y1="230.3" x2="1250.8" y2="162.4"><stop offset="0.00" stop-color="#fffffe"/><stop offset="0.04" stop-color="#fffcf0"/><stop offset="0.10" stop-color="#fff7da"/><stop offset="0.18" stop-color="#fff2bf"/><stop offset="0.28" stop-color="#ffeba1"/><stop offset="0.40" stop-color="#ffe47f"/><stop offset="0.55" stop-color="#ffdc5a"/><stop offset="0.70" stop-color="#ffd538"/><stop offset="0.85" stop-color="#ffcf1b"/><stop offset="1.00" stop-color="#ffca00"/></linearGradient><linearGradient id="w59" gradientUnits="userSpaceOnUse" x1="1228.5" y1="230.3" x2="1253.6" y2="162.7"><stop offset="0.00" stop-color="#fffffe"/><stop offset="0.04" stop-color="#fffbf0"/><stop offset="0.10" stop-color="#fff6d9"/><stop offset="0.18" stop-color="#fff0be"/><stop offset="0.28" stop-color="#ffe89f"/><stop offset="0.40" stop-color="#ffe07d"/><stop offset="0.55" stop-color="#ffd758"/><stop offset="0.70" stop-color="#ffcf37"/><stop offset="0.85" stop-color="#ffc81a"/><stop offset="1.00" stop-color="#ffc200"/></linearGradient><linearGradient id="w60" gradientUnits="userSpaceOnUse" x1="1228.5" y1="230.3" x2="1256.4" y2="162.9"><stop offset="0.00" stop-color="#fffffe"/><stop offset="0.04" stop-color="#fffbef"/><stop offset="0.10" stop-color="#fff5d9"/><stop offset="0.18" stop-color="#ffedbd"/><stop offset="0.28" stop-color="#ffe59d"/><stop offset="0.40" stop-color="#ffdc7c"/><stop offset="0.55" stop-color="#ffd256"/><stop offset="0.70" stop-color="#ffc936"/><stop offset="0.85" stop-color="#ffc219"/><stop offset="1.00" stop-color="#ffbb00"/></linearGradient><linearGradient id="w61" gradientUnits="userSpaceOnUse" x1="1228.5" y1="230.3" x2="1259.2" y2="163.2"><stop offset="0.00" stop-color="#fffffe"/><stop offset="0.04" stop-color="#fffaef"/><stop offset="0.10" stop-color="#fff3d8"/><stop offset="0.18" stop-color="#ffebbc"/><stop offset="0.28" stop-color="#ffe29c"/><stop offset="0.40" stop-color="#ffd87a"/><stop offset="0.55" stop-color="#ffcd55"/><stop offset="0.70" stop-color="#ffc335"/><stop offset="0.85" stop-color="#ffbb19"/><stop offset="1.00" stop-color="#ffb400"/></linearGradient><linearGradient id="w62" gradientUnits="userSpaceOnUse" x1="1228.5" y1="230.3" x2="1261.9" y2="163.4"><stop offset="0.00" stop-color="#fffffe"/><stop offset="0.04" stop-color="#fffaee"/><stop offset="0.10" stop-color="#fff2d7"/><stop offset="0.18" stop-color="#ffe9ba"/><stop offset="0.28" stop-color="#ffdf9a"/><stop offset="0.40" stop-color="#ffd478"/><stop offset="0.55" stop-color="#ffc854"/><stop offset="0.70" stop-color="#ffbe34"/><stop offset="0.85" stop-color="#ffb518"/><stop offset="1.00" stop-color="#ffad00"/></linearGradient><linearGradient id="w63" gradientUnits="userSpaceOnUse" x1="1228.5" y1="230.3" x2="1264.7" y2="163.7"><stop offset="0.00" stop-color="#fffffe"/><stop offset="0.04" stop-color="#fff9ee"/><stop offset="0.10" stop-color="#fff1d6"/><stop offset="0.18" stop-color="#ffe7b9"/><stop offset="0.28" stop-color="#ffdc99"/><stop offset="0.40" stop-color="#ffd077"/><stop offset="0.55" stop-color="#ffc352"/><stop offset="0.70" stop-color="#ffb933"/><stop offset="0.85" stop-color="#ffaf18"/><stop offset="1.00" stop-color="#ffa700"/></linearGradient><linearGradient id="w64" gradientUnits="userSpaceOnUse" x1="1228.5" y1="230.3" x2="1267.5" y2="164.0"><stop offset="0.00" stop-color="#fffffe"/><stop offset="0.04" stop-color="#fff9ee"/><stop offset="0.10" stop-color="#fff0d5"/><stop offset="0.18" stop-color="#ffe5b8"/><stop offset="0.28" stop-color="#ffd997"/><stop offset="0.40" stop-color="#ffcc75"/><stop offset="0.55" stop-color="#ffbf51"/><stop offset="0.70" stop-color="#ffb432"/><stop offset="0.85" stop-color="#ffaa17"/><stop offset="1.00" stop-color="#ffa100"/></linearGradient><linearGradient id="w65" gradientUnits="userSpaceOnUse" x1="1228.5" y1="230.3" x2="1270.2" y2="164.2"><stop offset="0.00" stop-color="#fffffe"/><stop offset="0.04" stop-color="#fff8ed"/><stop offset="0.10" stop-color="#ffeed4"/><stop offset="0.18" stop-color="#ffe3b7"/><stop offset="0.28" stop-color="#ffd696"/><stop offset="0.40" stop-color="#ffc974"/><stop offset="0.55" stop-color="#ffbb50"/><stop offset="0.70" stop-color="#ffaf31"/><stop offset="0.85" stop-color="#ffa417"/><stop offset="1.00" stop-color="#ff9c00"/></linearGradient><linearGradient id="w66" gradientUnits="userSpaceOnUse" x1="1228.5" y1="230.3" x2="1273.7" y2="164.5"><stop offset="0.00" stop-color="#fffffe"/><stop offset="0.04" stop-color="#fff7ed"/><stop offset="0.10" stop-color="#ffedd3"/><stop offset="0.18" stop-color="#ffe0b5"/><stop offset="0.28" stop-color="#ffd394"/><stop offset="0.40" stop-color="#ffc472"/><stop offset="0.55" stop-color="#ffb54e"/><stop offset="0.70" stop-color="#ffa930"/><stop offset="0.85" stop-color="#ff9e16"/><stop offset="1.00" stop-color="#ff9500"/></linearGradient><linearGradient id="w67" gradientUnits="userSpaceOnUse" x1="1228.5" y1="230.3" x2="1277.9" y2="164.9"><stop offset="0.00" stop-color="#fffffe"/><stop offset="0.04" stop-color="#fff7ec"/><stop offset="0.10" stop-color="#ffebd2"/><stop offset="0.18" stop-color="#ffddb3"/><stop offset="0.28" stop-color="#ffce92"/><stop offset="0.40" stop-color="#ffbf70"/><stop offset="0.55" stop-color="#ffaf4c"/><stop offset="0.70" stop-color="#ffa22f"/><stop offset="0.85" stop-color="#ff9715"/><stop offset="1.00" stop-color="#ff8d00"/></linearGradient><linearGradient id="w68" gradientUnits="userSpaceOnUse" x1="1228.5" y1="230.3" x2="1282.0" y2="165.3"><stop offset="0.00" stop-color="#fffffe"/><stop offset="0.04" stop-color="#fff6ec"/><stop offset="0.10" stop-color="#ffe9d1"/><stop offset="0.18" stop-color="#ffdab2"/><stop offset="0.28" stop-color="#ffca90"/><stop offset="0.40" stop-color="#ffba6e"/><stop offset="0.55" stop-color="#ffaa4a"/><stop offset="0.70" stop-color="#ff9c2d"/><stop offset="0.85" stop-color="#ff9015"/><stop offset="1.00" stop-color="#ff8600"/></linearGradient><linearGradient id="w69" gradientUnits="userSpaceOnUse" x1="1228.5" y1="230.3" x2="1286.2" y2="165.7"><stop offset="0.00" stop-color="#fffffe"/><stop offset="0.04" stop-color="#fff5eb"/><stop offset="0.10" stop-color="#ffe7d0"/><stop offset="0.18" stop-color="#ffd8b0"/><stop offset="0.28" stop-color="#ffc78e"/><stop offset="0.40" stop-color="#ffb56c"/><stop offset="0.55" stop-color="#ffa449"/><stop offset="0.70" stop-color="#ff962c"/><stop offset="0.85" stop-color="#ff8a14"/><stop offset="1.00" stop-color="#ff8000"/></linearGradient><linearGradient id="w70" gradientUnits="userSpaceOnUse" x1="1228.5" y1="230.3" x2="1290.7" y2="166.1"><stop offset="0.00" stop-color="#fffefe"/><stop offset="0.04" stop-color="#fff4ea"/><stop offset="0.10" stop-color="#ffe6cf"/><stop offset="0.18" stop-color="#ffd4ae"/><stop offset="0.28" stop-color="#ffc28c"/><stop offset="0.40" stop-color="#ffb16a"/><stop offset="0.55" stop-color="#ff9e47"/><stop offset="0.70" stop-color="#ff8f2b"/><stop offset="0.85" stop-color="#ff8314"/><stop offset="1.00" stop-color="#ff7900"/></linearGradient><linearGradient id="w71" gradientUnits="userSpaceOnUse" x1="1228.5" y1="230.3" x2="1295.9" y2="166.6"><stop offset="0.00" stop-color="#fffefe"/><stop offset="0.04" stop-color="#fff3ea"/><stop offset="0.10" stop-color="#ffe3cd"/><stop offset="0.18" stop-color="#ffd1ac"/><stop offset="0.28" stop-color="#ffbe8a"/><stop offset="0.40" stop-color="#ffab68"/><stop offset="0.55" stop-color="#ff9845"/><stop offset="0.70" stop-color="#ff892a"/><stop offset="0.85" stop-color="#ff7c13"/><stop offset="1.00" stop-color="#ff7200"/></linearGradient><linearGradient id="w72" gradientUnits="userSpaceOnUse" x1="1228.5" y1="230.3" x2="1301.5" y2="167.1"><stop offset="0.00" stop-color="#fffefe"/><stop offset="0.04" stop-color="#fff2e9"/><stop offset="0.10" stop-color="#ffe1cc"/><stop offset="0.18" stop-color="#ffcdaa"/><stop offset="0.28" stop-color="#ffb987"/><stop offset="0.40" stop-color="#ffa565"/><stop offset="0.55" stop-color="#ff9243"/><stop offset="0.70" stop-color="#ff8228"/><stop offset="0.85" stop-color="#ff7512"/><stop offset="1.00" stop-color="#ff6a00"/></linearGradient><linearGradient id="w73" gradientUnits="userSpaceOnUse" x1="1228.5" y1="230.3" x2="1307.4" y2="167.7"><stop offset="0.00" stop-color="#fffefe"/><stop offset="0.04" stop-color="#fff1e8"/><stop offset="0.10" stop-color="#ffdfca"/><stop offset="0.18" stop-color="#ffcaa8"/><stop offset="0.28" stop-color="#ffb485"/><stop offset="0.40" stop-color="#ffa063"/><stop offset="0.55" stop-color="#ff8b41"/><stop offset="0.70" stop-color="#ff7b27"/><stop offset="0.85" stop-color="#ff6e12"/><stop offset="1.00" stop-color="#ff6300"/></linearGradient><linearGradient id="w74" gradientUnits="userSpaceOnUse" x1="1228.5" y1="230.3" x2="1314.0" y2="168.3"><stop offset="0.00" stop-color="#fffefe"/><stop offset="0.04" stop-color="#fff0e7"/><stop offset="0.10" stop-color="#ffdcc8"/><stop offset="0.18" stop-color="#ffc6a5"/><stop offset="0.28" stop-color="#ffaf82"/><stop offset="0.40" stop-color="#ff9a60"/><stop offset="0.55" stop-color="#ff8540"/><stop offset="0.70" stop-color="#ff7426"/><stop offset="0.85" stop-color="#ff6711"/><stop offset="1.00" stop-color="#ff5c00"/></linearGradient><linearGradient id="w75" gradientUnits="userSpaceOnUse" x1="1228.5" y1="230.3" x2="1321.2" y2="169.0"><stop offset="0.00" stop-color="#fffefe"/><stop offset="0.04" stop-color="#ffefe6"/><stop offset="0.10" stop-color="#ffd9c6"/><stop offset="0.18" stop-color="#ffc1a3"/><stop offset="0.28" stop-color="#ffaa7f"/><stop offset="0.40" stop-color="#ff935e"/><stop offset="0.55" stop-color="#ff7e3d"/><stop offset="0.70" stop-color="#ff6d24"/><stop offset="0.85" stop-color="#ff6010"/><stop offset="1.00" stop-color="#ff5500"/></linearGradient><linearGradient id="w76" gradientUnits="userSpaceOnUse" x1="1228.5" y1="230.3" x2="1329.2" y2="169.7"><stop offset="0.00" stop-color="#fffefe"/><stop offset="0.04" stop-color="#ffede5"/><stop offset="0.10" stop-color="#ffd6c4"/><stop offset="0.18" stop-color="#ffbda0"/><stop offset="0.28" stop-color="#ffa47c"/><stop offset="0.40" stop-color="#ff8d5b"/><stop offset="0.55" stop-color="#ff773b"/><stop offset="0.70" stop-color="#ff6623"/><stop offset="0.85" stop-color="#ff5810"/><stop offset="1.00" stop-color="#ff4d00"/></linearGradient><linearGradient id="w77" gradientUnits="userSpaceOnUse" x1="1228.5" y1="230.3" x2="1337.9" y2="170.6"><stop offset="0.00" stop-color="#fffefe"/><stop offset="0.04" stop-color="#ffece4"/><stop offset="0.10" stop-color="#ffd3c2"/><stop offset="0.18" stop-color="#ffb89d"/><stop offset="0.28" stop-color="#ff9e79"/><stop offset="0.40" stop-color="#ff8658"/><stop offset="0.55" stop-color="#ff6f39"/><stop offset="0.70" stop-color="#ff5e22"/><stop offset="0.85" stop-color="#ff510f"/><stop offset="1.00" stop-color="#ff4600"/></linearGradient><linearGradient id="w78" gradientUnits="userSpaceOnUse" x1="1228.5" y1="230.3" x2="1347.3" y2="171.4"><stop offset="0.00" stop-color="#fffefe"/><stop offset="0.04" stop-color="#ffeae3"/><stop offset="0.10" stop-color="#ffcfc0"/><stop offset="0.18" stop-color="#ffb39a"/><stop offset="0.28" stop-color="#ff9876"/><stop offset="0.40" stop-color="#ff7f56"/><stop offset="0.55" stop-color="#ff6837"/><stop offset="0.70" stop-color="#ff5720"/><stop offset="0.85" stop-color="#ff490e"/><stop offset="1.00" stop-color="#ff3f00"/></linearGradient><linearGradient id="w79" gradientUnits="userSpaceOnUse" x1="1228.5" y1="230.3" x2="1357.7" y2="172.4"><stop offset="0.00" stop-color="#fffefd"/><stop offset="0.04" stop-color="#ffe8e2"/><stop offset="0.10" stop-color="#ffccbd"/><stop offset="0.18" stop-color="#ffae97"/><stop offset="0.28" stop-color="#ff9173"/><stop offset="0.40" stop-color="#ff7853"/><stop offset="0.55" stop-color="#ff6135"/><stop offset="0.70" stop-color="#ff4f1f"/><stop offset="0.85" stop-color="#ff420e"/><stop offset="1.00" stop-color="#ff3700"/></linearGradient><linearGradient id="w80" gradientUnits="userSpaceOnUse" x1="1228.5" y1="230.3" x2="1369.1" y2="173.5"><stop offset="0.00" stop-color="#fffefd"/><stop offset="0.04" stop-color="#ffe6e0"/><stop offset="0.10" stop-color="#ffc8bb"/><stop offset="0.18" stop-color="#ffa894"/><stop offset="0.28" stop-color="#ff8b70"/><stop offset="0.40" stop-color="#ff7150"/><stop offset="0.55" stop-color="#ff5933"/><stop offset="0.70" stop-color="#ff481d"/><stop offset="0.85" stop-color="#ff3b0d"/><stop offset="1.00" stop-color="#ff3000"/></linearGradient><linearGradient id="w81" gradientUnits="userSpaceOnUse" x1="1228.5" y1="230.3" x2="1381.6" y2="174.7"><stop offset="0.00" stop-color="#fffefd"/><stop offset="0.04" stop-color="#ffe4df"/><stop offset="0.10" stop-color="#ffc3b8"/><stop offset="0.18" stop-color="#ffa290"/><stop offset="0.28" stop-color="#ff846c"/><stop offset="0.40" stop-color="#ff694d"/><stop offset="0.55" stop-color="#ff5230"/><stop offset="0.70" stop-color="#ff411c"/><stop offset="0.85" stop-color="#ff330c"/><stop offset="1.00" stop-color="#ff2900"/></linearGradient><linearGradient id="w82" gradientUnits="userSpaceOnUse" x1="1228.5" y1="230.3" x2="1395.5" y2="176.0"><stop offset="0.00" stop-color="#fffdfd"/><stop offset="0.04" stop-color="#ffe2dd"/><stop offset="0.10" stop-color="#ffbfb5"/><stop offset="0.18" stop-color="#ff9c8d"/><stop offset="0.28" stop-color="#ff7d69"/><stop offset="0.40" stop-color="#ff624a"/><stop offset="0.55" stop-color="#ff4a2e"/><stop offset="0.70" stop-color="#ff391a"/><stop offset="0.85" stop-color="#ff2c0c"/><stop offset="1.00" stop-color="#ff2200"/></linearGradient><linearGradient id="w83" gradientUnits="userSpaceOnUse" x1="1228.5" y1="230.3" x2="1411.1" y2="177.4"><stop offset="0.00" stop-color="#fffdfd"/><stop offset="0.04" stop-color="#ffdfdb"/><stop offset="0.10" stop-color="#ffbab1"/><stop offset="0.18" stop-color="#ff9589"/><stop offset="0.28" stop-color="#ff7565"/><stop offset="0.40" stop-color="#ff5a46"/><stop offset="0.55" stop-color="#ff422c"/><stop offset="0.70" stop-color="#ff3219"/><stop offset="0.85" stop-color="#ff250b"/><stop offset="1.00" stop-color="#ff1b00"/></linearGradient><linearGradient id="w84" gradientUnits="userSpaceOnUse" x1="1228.5" y1="230.3" x2="1428.4" y2="179.0"><stop offset="0.00" stop-color="#fffdfd"/><stop offset="0.04" stop-color="#ffdcd9"/><stop offset="0.10" stop-color="#ffb4ae"/><stop offset="0.18" stop-color="#ff8e85"/><stop offset="0.28" stop-color="#ff6e61"/><stop offset="0.40" stop-color="#ff5243"/><stop offset="0.55" stop-color="#ff3b2a"/><stop offset="0.70" stop-color="#ff2a18"/><stop offset="0.85" stop-color="#ff1e0a"/><stop offset="1.00" stop-color="#ff1400"/></linearGradient><linearGradient id="w85" gradientUnits="userSpaceOnUse" x1="1228.5" y1="230.3" x2="1447.2" y2="180.8"><stop offset="0.00" stop-color="#fffdfd"/><stop offset="0.04" stop-color="#ffd9d7"/><stop offset="0.10" stop-color="#ffafaa"/><stop offset="0.18" stop-color="#ff8781"/><stop offset="0.28" stop-color="#ff665d"/><stop offset="0.40" stop-color="#ff4a40"/><stop offset="0.55" stop-color="#ff3327"/><stop offset="0.70" stop-color="#ff2316"/><stop offset="0.85" stop-color="#ff170a"/><stop offset="1.00" stop-color="#ff0e00"/></linearGradient><linearGradient id="w86" gradientUnits="userSpaceOnUse" x1="1228.5" y1="230.3" x2="1467.6" y2="182.7"><stop offset="0.00" stop-color="#fffdfd"/><stop offset="0.04" stop-color="#ffd6d5"/><stop offset="0.10" stop-color="#ffa9a6"/><stop offset="0.18" stop-color="#ff807c"/><stop offset="0.28" stop-color="#ff5e59"/><stop offset="0.40" stop-color="#ff433d"/><stop offset="0.55" stop-color="#ff2c25"/><stop offset="0.70" stop-color="#ff1c15"/><stop offset="0.85" stop-color="#ff1109"/><stop offset="1.00" stop-color="#ff0800"/></linearGradient><linearGradient id="w87" gradientUnits="userSpaceOnUse" x1="1228.5" y1="230.3" x2="1488.1" y2="184.6"><stop offset="0.00" stop-color="#fffdfc"/><stop offset="0.04" stop-color="#ffd3d2"/><stop offset="0.10" stop-color="#ffa4a3"/><stop offset="0.18" stop-color="#ff7a78"/><stop offset="0.28" stop-color="#ff5755"/><stop offset="0.40" stop-color="#ff3c3a"/><stop offset="0.55" stop-color="#ff2523"/><stop offset="0.70" stop-color="#ff1614"/><stop offset="0.85" stop-color="#ff0b09"/><stop offset="1.00" stop-color="#ff0200"/></linearGradient><linearGradient id="w88" gradientUnits="userSpaceOnUse" x1="1228.5" y1="230.3" x2="1493.1" y2="190.3"><stop offset="0.00" stop-color="#fffcfc"/><stop offset="0.04" stop-color="#ffd2d3"/><stop offset="0.10" stop-color="#ffa2a3"/><stop offset="0.18" stop-color="#ff7879"/><stop offset="0.28" stop-color="#ff5557"/><stop offset="0.40" stop-color="#ff393c"/><stop offset="0.55" stop-color="#ff2326"/><stop offset="0.70" stop-color="#ff1417"/><stop offset="0.85" stop-color="#ff080c"/><stop offset="1.00" stop-color="#ff0004"/></linearGradient><linearGradient id="w89" gradientUnits="userSpaceOnUse" x1="1228.5" y1="230.3" x2="1484.3" y2="199.3"><stop offset="0.00" stop-color="#fffdfd"/><stop offset="0.04" stop-color="#ffd3d5"/><stop offset="0.10" stop-color="#ffa4a8"/><stop offset="0.18" stop-color="#ff797f"/><stop offset="0.28" stop-color="#ff575e"/><stop offset="0.40" stop-color="#ff3b43"/><stop offset="0.55" stop-color="#ff242d"/><stop offset="0.70" stop-color="#ff141e"/><stop offset="0.85" stop-color="#ff0913"/><stop offset="1.00" stop-color="#ff000b"/></linearGradient><linearGradient id="w90" gradientUnits="userSpaceOnUse" x1="1228.5" y1="230.3" x2="1476.1" y2="207.7"><stop offset="0.00" stop-color="#fffdfd"/><stop offset="0.04" stop-color="#ffd4d7"/><stop offset="0.10" stop-color="#ffa6ac"/><stop offset="0.18" stop-color="#ff7b85"/><stop offset="0.28" stop-color="#ff5864"/><stop offset="0.40" stop-color="#ff3c4a"/><stop offset="0.55" stop-color="#ff2534"/><stop offset="0.70" stop-color="#ff1525"/><stop offset="0.85" stop-color="#ff091a"/><stop offset="1.00" stop-color="#ff0012"/></linearGradient><linearGradient id="w91" gradientUnits="userSpaceOnUse" x1="1228.5" y1="230.3" x2="1468.2" y2="215.8"><stop offset="0.00" stop-color="#fffdfd"/><stop offset="0.04" stop-color="#ffd5d9"/><stop offset="0.10" stop-color="#ffa7b0"/><stop offset="0.18" stop-color="#ff7d8a"/><stop offset="0.28" stop-color="#ff5a6a"/><stop offset="0.40" stop-color="#ff3e51"/><stop offset="0.55" stop-color="#ff263b"/><stop offset="0.70" stop-color="#ff152d"/><stop offset="0.85" stop-color="#ff0922"/><stop offset="1.00" stop-color="#ff0019"/></linearGradient><linearGradient id="w92" gradientUnits="userSpaceOnUse" x1="1228.5" y1="230.3" x2="1460.9" y2="223.2"><stop offset="0.00" stop-color="#fffdfd"/><stop offset="0.04" stop-color="#ffd6db"/><stop offset="0.10" stop-color="#ffa9b4"/><stop offset="0.18" stop-color="#ff7f8f"/><stop offset="0.28" stop-color="#ff5c71"/><stop offset="0.40" stop-color="#ff3f57"/><stop offset="0.55" stop-color="#ff2742"/><stop offset="0.70" stop-color="#ff1634"/><stop offset="0.85" stop-color="#ff0929"/><stop offset="1.00" stop-color="#ff0021"/></linearGradient><linearGradient id="w93" gradientUnits="userSpaceOnUse" x1="1228.5" y1="230.3" x2="1453.8" y2="230.4"><stop offset="0.00" stop-color="#fffdfd"/><stop offset="0.04" stop-color="#ffd7dd"/><stop offset="0.10" stop-color="#ffabb8"/><stop offset="0.18" stop-color="#ff8195"/><stop offset="0.28" stop-color="#ff5d77"/><stop offset="0.40" stop-color="#ff405e"/><stop offset="0.55" stop-color="#ff2849"/><stop offset="0.70" stop-color="#ff163b"/><stop offset="0.85" stop-color="#ff0a30"/><stop offset="1.00" stop-color="#ff0028"/></linearGradient><linearGradient id="w94" gradientUnits="userSpaceOnUse" x1="1228.5" y1="230.3" x2="1447.4" y2="237.0"><stop offset="0.00" stop-color="#fffdfd"/><stop offset="0.04" stop-color="#ffd8df"/><stop offset="0.10" stop-color="#ffacbb"/><stop offset="0.18" stop-color="#ff839a"/><stop offset="0.28" stop-color="#ff5f7c"/><stop offset="0.40" stop-color="#ff4164"/><stop offset="0.55" stop-color="#ff2850"/><stop offset="0.70" stop-color="#ff1742"/><stop offset="0.85" stop-color="#ff0a37"/><stop offset="1.00" stop-color="#ff002f"/></linearGradient><linearGradient id="w95" gradientUnits="userSpaceOnUse" x1="1228.5" y1="230.3" x2="1441.5" y2="243.0"><stop offset="0.00" stop-color="#fffdfd"/><stop offset="0.04" stop-color="#ffd9e1"/><stop offset="0.10" stop-color="#ffadbf"/><stop offset="0.18" stop-color="#ff849e"/><stop offset="0.28" stop-color="#ff6082"/><stop offset="0.40" stop-color="#ff436a"/><stop offset="0.55" stop-color="#ff2956"/><stop offset="0.70" stop-color="#ff1748"/><stop offset="0.85" stop-color="#ff0a3e"/><stop offset="1.00" stop-color="#ff0036"/></linearGradient><linearGradient id="w96" gradientUnits="userSpaceOnUse" x1="1228.5" y1="230.3" x2="1435.7" y2="249.0"><stop offset="0.00" stop-color="#fffdfd"/><stop offset="0.04" stop-color="#ffdae3"/><stop offset="0.10" stop-color="#ffafc2"/><stop offset="0.18" stop-color="#ff86a3"/><stop offset="0.28" stop-color="#ff6287"/><stop offset="0.40" stop-color="#ff4471"/><stop offset="0.55" stop-color="#ff2a5d"/><stop offset="0.70" stop-color="#ff184f"/><stop offset="0.85" stop-color="#ff0a45"/><stop offset="1.00" stop-color="#ff003d"/></linearGradient><linearGradient id="w97" gradientUnits="userSpaceOnUse" x1="1228.5" y1="230.3" x2="1429.8" y2="255.0"><stop offset="0.00" stop-color="#fffdfe"/><stop offset="0.04" stop-color="#ffdae4"/><stop offset="0.10" stop-color="#ffb0c5"/><stop offset="0.18" stop-color="#ff87a7"/><stop offset="0.28" stop-color="#ff638d"/><stop offset="0.40" stop-color="#ff4577"/><stop offset="0.55" stop-color="#ff2b64"/><stop offset="0.70" stop-color="#ff1956"/><stop offset="0.85" stop-color="#ff0b4c"/><stop offset="1.00" stop-color="#ff0045"/></linearGradient><linearGradient id="w98" gradientUnits="userSpaceOnUse" x1="1228.5" y1="230.3" x2="1424.5" y2="260.4"><stop offset="0.00" stop-color="#fffdfe"/><stop offset="0.04" stop-color="#ffdbe6"/><stop offset="0.10" stop-color="#ffb1c8"/><stop offset="0.18" stop-color="#ff89ac"/><stop offset="0.28" stop-color="#ff6593"/><stop offset="0.40" stop-color="#ff467d"/><stop offset="0.55" stop-color="#ff2c6a"/><stop offset="0.70" stop-color="#ff195d"/><stop offset="0.85" stop-color="#ff0b53"/><stop offset="1.00" stop-color="#ff004c"/></linearGradient><linearGradient id="w99" gradientUnits="userSpaceOnUse" x1="1228.5" y1="230.3" x2="1419.8" y2="265.1"><stop offset="0.00" stop-color="#fffdfe"/><stop offset="0.04" stop-color="#ffdce7"/><stop offset="0.10" stop-color="#ffb3cb"/><stop offset="0.18" stop-color="#ff8ab0"/><stop offset="0.28" stop-color="#ff6697"/><stop offset="0.40" stop-color="#ff4783"/><stop offset="0.55" stop-color="#ff2d70"/><stop offset="0.70" stop-color="#ff1a64"/><stop offset="0.85" stop-color="#ff0b5a"/><stop offset="1.00" stop-color="#ff0052"/></linearGradient><linearGradient id="w100" gradientUnits="userSpaceOnUse" x1="1228.5" y1="230.3" x2="1415.1" y2="269.9"><stop offset="0.00" stop-color="#fffdfe"/><stop offset="0.04" stop-color="#ffdce9"/><stop offset="0.10" stop-color="#ffb4ce"/><stop offset="0.18" stop-color="#ff8cb4"/><stop offset="0.28" stop-color="#ff679c"/><stop offset="0.40" stop-color="#ff4988"/><stop offset="0.55" stop-color="#ff2e77"/><stop offset="0.70" stop-color="#ff1a6a"/><stop offset="0.85" stop-color="#ff0b61"/><stop offset="1.00" stop-color="#ff0059"/></linearGradient><linearGradient id="w101" gradientUnits="userSpaceOnUse" x1="1228.5" y1="230.3" x2="1410.4" y2="274.7"><stop offset="0.00" stop-color="#fffdfe"/><stop offset="0.04" stop-color="#ffddea"/><stop offset="0.10" stop-color="#ffb5d1"/><stop offset="0.18" stop-color="#ff8db8"/><stop offset="0.28" stop-color="#ff69a2"/><stop offset="0.40" stop-color="#ff4a8e"/><stop offset="0.55" stop-color="#ff2e7d"/><stop offset="0.70" stop-color="#ff1b71"/><stop offset="0.85" stop-color="#ff0c68"/><stop offset="1.00" stop-color="#ff0060"/></linearGradient><linearGradient id="w102" gradientUnits="userSpaceOnUse" x1="1228.5" y1="230.3" x2="1405.7" y2="279.5"><stop offset="0.00" stop-color="#fffdfe"/><stop offset="0.04" stop-color="#ffdeeb"/><stop offset="0.10" stop-color="#ffb6d4"/><stop offset="0.18" stop-color="#ff8ebc"/><stop offset="0.28" stop-color="#ff6aa7"/><stop offset="0.40" stop-color="#ff4b94"/><stop offset="0.55" stop-color="#ff2f84"/><stop offset="0.70" stop-color="#ff1b78"/><stop offset="0.85" stop-color="#ff0c6f"/><stop offset="1.00" stop-color="#ff0068"/></linearGradient><linearGradient id="w103" gradientUnits="userSpaceOnUse" x1="1228.5" y1="230.3" x2="1401.6" y2="283.7"><stop offset="0.00" stop-color="#fffdfe"/><stop offset="0.04" stop-color="#ffdeed"/><stop offset="0.10" stop-color="#ffb7d6"/><stop offset="0.18" stop-color="#ff90c0"/><stop offset="0.28" stop-color="#ff6cac"/><stop offset="0.40" stop-color="#ff4c9a"/><stop offset="0.55" stop-color="#ff308a"/><stop offset="0.70" stop-color="#ff1c7e"/><stop offset="0.85" stop-color="#ff0c76"/><stop offset="1.00" stop-color="#ff006f"/></linearGradient><linearGradient id="w104" gradientUnits="userSpaceOnUse" x1="1228.5" y1="230.3" x2="1398.1" y2="287.3"><stop offset="0.00" stop-color="#fffdfe"/><stop offset="0.04" stop-color="#ffdfee"/><stop offset="0.10" stop-color="#ffb8d9"/><stop offset="0.18" stop-color="#ff91c3"/><stop offset="0.28" stop-color="#ff6db0"/><stop offset="0.40" stop-color="#ff4d9f"/><stop offset="0.55" stop-color="#ff318f"/><stop offset="0.70" stop-color="#ff1c84"/><stop offset="0.85" stop-color="#ff0c7c"/><stop offset="1.00" stop-color="#ff0075"/></linearGradient><linearGradient id="w105" gradientUnits="userSpaceOnUse" x1="1228.5" y1="230.3" x2="1394.6" y2="290.9"><stop offset="0.00" stop-color="#fffdfe"/><stop offset="0.04" stop-color="#ffdfef"/><stop offset="0.10" stop-color="#ffb9db"/><stop offset="0.18" stop-color="#ff92c7"/><stop offset="0.28" stop-color="#ff6eb4"/><stop offset="0.40" stop-color="#ff4ea4"/><stop offset="0.55" stop-color="#ff3195"/><stop offset="0.70" stop-color="#ff1d8a"/><stop offset="0.85" stop-color="#ff0d82"/><stop offset="1.00" stop-color="#ff007b"/></linearGradient><linearGradient id="w106" gradientUnits="userSpaceOnUse" x1="1228.5" y1="230.3" x2="1391.1" y2="294.5"><stop offset="0.00" stop-color="#fffdfe"/><stop offset="0.04" stop-color="#ffe0f0"/><stop offset="0.10" stop-color="#ffbadd"/><stop offset="0.18" stop-color="#ff93ca"/><stop offset="0.28" stop-color="#ff6fb8"/><stop offset="0.40" stop-color="#ff4fa9"/><stop offset="0.55" stop-color="#ff329a"/><stop offset="0.70" stop-color="#ff1d90"/><stop offset="0.85" stop-color="#ff0d88"/><stop offset="1.00" stop-color="#ff0082"/></linearGradient><linearGradient id="w107" gradientUnits="userSpaceOnUse" x1="1228.5" y1="230.3" x2="1387.6" y2="298.1"><stop offset="0.00" stop-color="#fffdfe"/><stop offset="0.04" stop-color="#ffe0f1"/><stop offset="0.10" stop-color="#ffbbdf"/><stop offset="0.18" stop-color="#ff94ce"/><stop offset="0.28" stop-color="#ff70bd"/><stop offset="0.40" stop-color="#ff50ae"/><stop offset="0.55" stop-color="#ff33a0"/><stop offset="0.70" stop-color="#ff1e96"/><stop offset="0.85" stop-color="#ff0d8f"/><stop offset="1.00" stop-color="#ff0089"/></linearGradient><linearGradient id="w108" gradientUnits="userSpaceOnUse" x1="1228.5" y1="230.3" x2="1384.1" y2="301.7"><stop offset="0.00" stop-color="#fffdfe"/><stop offset="0.04" stop-color="#ffe1f2"/><stop offset="0.10" stop-color="#ffbce2"/><stop offset="0.18" stop-color="#ff96d1"/><stop offset="0.28" stop-color="#ff71c1"/><stop offset="0.40" stop-color="#ff51b3"/><stop offset="0.55" stop-color="#ff34a6"/><stop offset="0.70" stop-color="#ff1e9d"/><stop offset="0.85" stop-color="#ff0d96"/><stop offset="1.00" stop-color="#ff0090"/></linearGradient><linearGradient id="w109" gradientUnits="userSpaceOnUse" x1="1228.5" y1="230.3" x2="1380.5" y2="305.2"><stop offset="0.00" stop-color="#fffdfe"/><stop offset="0.04" stop-color="#ffe1f3"/><stop offset="0.10" stop-color="#ffbde4"/><stop offset="0.18" stop-color="#ff97d5"/><stop offset="0.28" stop-color="#ff73c6"/><stop offset="0.40" stop-color="#ff52b9"/><stop offset="0.55" stop-color="#ff35ad"/><stop offset="0.70" stop-color="#ff1fa4"/><stop offset="0.85" stop-color="#ff0e9d"/><stop offset="1.00" stop-color="#ff0097"/></linearGradient><linearGradient id="w110" gradientUnits="userSpaceOnUse" x1="1228.5" y1="230.3" x2="1377.0" y2="308.8"><stop offset="0.00" stop-color="#fffdfe"/><stop offset="0.04" stop-color="#ffe2f4"/><stop offset="0.10" stop-color="#ffbee7"/><stop offset="0.18" stop-color="#ff98d8"/><stop offset="0.28" stop-color="#ff74cb"/><stop offset="0.40" stop-color="#ff53be"/><stop offset="0.55" stop-color="#ff35b3"/><stop offset="0.70" stop-color="#ff1fab"/><stop offset="0.85" stop-color="#ff0ea4"/><stop offset="1.00" stop-color="#ff009f"/></linearGradient><linearGradient id="w111" gradientUnits="userSpaceOnUse" x1="1228.5" y1="230.3" x2="1374.1" y2="311.8"><stop offset="0.00" stop-color="#fffeff"/><stop offset="0.04" stop-color="#ffe2f5"/><stop offset="0.10" stop-color="#ffbfe9"/><stop offset="0.18" stop-color="#ff99db"/><stop offset="0.28" stop-color="#ff75cf"/><stop offset="0.40" stop-color="#ff54c3"/><stop offset="0.55" stop-color="#ff36b9"/><stop offset="0.70" stop-color="#ff20b1"/><stop offset="0.85" stop-color="#ff0eab"/><stop offset="1.00" stop-color="#ff00a6"/></linearGradient><linearGradient id="w112" gradientUnits="userSpaceOnUse" x1="1228.5" y1="230.3" x2="1371.7" y2="314.2"><stop offset="0.00" stop-color="#fffeff"/><stop offset="0.04" stop-color="#ffe3f6"/><stop offset="0.10" stop-color="#ffbfea"/><stop offset="0.18" stop-color="#ff9ade"/><stop offset="0.28" stop-color="#ff76d2"/><stop offset="0.40" stop-color="#ff55c7"/><stop offset="0.55" stop-color="#ff37bd"/><stop offset="0.70" stop-color="#ff20b6"/><stop offset="0.85" stop-color="#ff0eb0"/><stop offset="1.00" stop-color="#ff00ab"/></linearGradient><linearGradient id="w113" gradientUnits="userSpaceOnUse" x1="1228.5" y1="230.3" x2="1369.4" y2="316.6"><stop offset="0.00" stop-color="#fffeff"/><stop offset="0.04" stop-color="#ffe3f6"/><stop offset="0.10" stop-color="#ffc0ec"/><stop offset="0.18" stop-color="#ff9be0"/><stop offset="0.28" stop-color="#ff77d5"/><stop offset="0.40" stop-color="#ff56cb"/><stop offset="0.55" stop-color="#ff37c2"/><stop offset="0.70" stop-color="#ff20bb"/><stop offset="0.85" stop-color="#ff0eb5"/><stop offset="1.00" stop-color="#ff00b1"/></linearGradient><linearGradient id="w114" gradientUnits="userSpaceOnUse" x1="1228.5" y1="230.3" x2="1367.1" y2="319.0"><stop offset="0.00" stop-color="#fffeff"/><stop offset="0.04" stop-color="#ffe3f7"/><stop offset="0.10" stop-color="#ffc1ed"/><stop offset="0.18" stop-color="#ff9ce3"/><stop offset="0.28" stop-color="#ff78d9"/><stop offset="0.40" stop-color="#ff57cf"/><stop offset="0.55" stop-color="#ff38c7"/><stop offset="0.70" stop-color="#ff21c0"/><stop offset="0.85" stop-color="#ff0fbb"/><stop offset="1.00" stop-color="#ff00b7"/></linearGradient><linearGradient id="w115" gradientUnits="userSpaceOnUse" x1="1228.5" y1="230.3" x2="1364.7" y2="321.4"><stop offset="0.00" stop-color="#fffeff"/><stop offset="0.04" stop-color="#ffe4f8"/><stop offset="0.10" stop-color="#ffc1ef"/><stop offset="0.18" stop-color="#ff9de5"/><stop offset="0.28" stop-color="#ff79dc"/><stop offset="0.40" stop-color="#ff58d3"/><stop offset="0.55" stop-color="#ff39cb"/><stop offset="0.70" stop-color="#ff21c5"/><stop offset="0.85" stop-color="#ff0fc0"/><stop offset="1.00" stop-color="#ff00bd"/></linearGradient><linearGradient id="w116" gradientUnits="userSpaceOnUse" x1="1228.5" y1="230.3" x2="1362.4" y2="323.8"><stop offset="0.00" stop-color="#fffeff"/><stop offset="0.04" stop-color="#ffe4f9"/><stop offset="0.10" stop-color="#ffc2f1"/><stop offset="0.18" stop-color="#ff9de8"/><stop offset="0.28" stop-color="#ff7ae0"/><stop offset="0.40" stop-color="#ff58d8"/><stop offset="0.55" stop-color="#ff39d0"/><stop offset="0.70" stop-color="#ff22cb"/><stop offset="0.85" stop-color="#ff0fc6"/><stop offset="1.00" stop-color="#ff00c3"/></linearGradient><linearGradient id="w117" gradientUnits="userSpaceOnUse" x1="1228.5" y1="230.3" x2="1360.0" y2="326.2"><stop offset="0.00" stop-color="#fffeff"/><stop offset="0.04" stop-color="#ffe5f9"/><stop offset="0.10" stop-color="#ffc3f2"/><stop offset="0.18" stop-color="#ff9eeb"/><stop offset="0.28" stop-color="#ff7be3"/><stop offset="0.40" stop-color="#ff59dc"/><stop offset="0.55" stop-color="#ff3ad5"/><stop offset="0.70" stop-color="#ff22d0"/><stop offset="0.85" stop-color="#ff0fcc"/><stop offset="1.00" stop-color="#ff00c9"/></linearGradient><linearGradient id="w118" gradientUnits="userSpaceOnUse" x1="1228.5" y1="230.3" x2="1357.7" y2="328.6"><stop offset="0.00" stop-color="#fffeff"/><stop offset="0.04" stop-color="#ffe5fa"/><stop offset="0.10" stop-color="#ffc4f4"/><stop offset="0.18" stop-color="#ff9fed"/><stop offset="0.28" stop-color="#ff7be7"/><stop offset="0.40" stop-color="#ff5ae0"/><stop offset="0.55" stop-color="#ff3bdb"/><stop offset="0.70" stop-color="#ff23d6"/><stop offset="0.85" stop-color="#ff0fd3"/><stop offset="1.00" stop-color="#ff00d0"/></linearGradient><linearGradient id="w119" gradientUnits="userSpaceOnUse" x1="1228.5" y1="230.3" x2="1355.3" y2="331.0"><stop offset="0.00" stop-color="#fffeff"/><stop offset="0.04" stop-color="#ffe5fb"/><stop offset="0.10" stop-color="#ffc4f6"/><stop offset="0.18" stop-color="#ffa0f0"/><stop offset="0.28" stop-color="#ff7cea"/><stop offset="0.40" stop-color="#ff5be5"/><stop offset="0.55" stop-color="#ff3be0"/><stop offset="0.70" stop-color="#ff23dc"/><stop offset="0.85" stop-color="#ff10d9"/><stop offset="1.00" stop-color="#ff00d6"/></linearGradient><linearGradient id="w120" gradientUnits="userSpaceOnUse" x1="1228.5" y1="230.3" x2="1353.0" y2="333.4"><stop offset="0.00" stop-color="#fffeff"/><stop offset="0.04" stop-color="#ffe6fc"/><stop offset="0.10" stop-color="#ffc5f7"/><stop offset="0.18" stop-color="#ffa1f3"/><stop offset="0.28" stop-color="#ff7dee"/><stop offset="0.40" stop-color="#ff5cea"/><stop offset="0.55" stop-color="#ff3ce5"/><stop offset="0.70" stop-color="#ff23e2"/><stop offset="0.85" stop-color="#ff10e0"/><stop offset="1.00" stop-color="#ff00dd"/></linearGradient><linearGradient id="w121" gradientUnits="userSpaceOnUse" x1="1228.5" y1="230.3" x2="1350.6" y2="335.8"><stop offset="0.00" stop-color="#fffeff"/><stop offset="0.04" stop-color="#ffe6fc"/><stop offset="0.10" stop-color="#ffc6f9"/><stop offset="0.18" stop-color="#ffa2f5"/><stop offset="0.28" stop-color="#ff7ef2"/><stop offset="0.40" stop-color="#ff5dee"/><stop offset="0.55" stop-color="#ff3deb"/><stop offset="0.70" stop-color="#ff24e8"/><stop offset="0.85" stop-color="#ff10e6"/><stop offset="1.00" stop-color="#ff00e5"/></linearGradient><linearGradient id="w122" gradientUnits="userSpaceOnUse" x1="1228.5" y1="230.3" x2="1348.3" y2="338.2"><stop offset="0.00" stop-color="#fffeff"/><stop offset="0.04" stop-color="#ffe6fd"/><stop offset="0.10" stop-color="#ffc6fb"/><stop offset="0.18" stop-color="#ffa3f8"/><stop offset="0.28" stop-color="#ff80f6"/><stop offset="0.40" stop-color="#ff5ef3"/><stop offset="0.55" stop-color="#ff3ef1"/><stop offset="0.70" stop-color="#ff24ef"/><stop offset="0.85" stop-color="#ff10ed"/><stop offset="1.00" stop-color="#ff00ec"/></linearGradient><linearGradient id="w123" gradientUnits="userSpaceOnUse" x1="1228.5" y1="230.3" x2="1345.9" y2="340.6"><stop offset="0.00" stop-color="#fffeff"/><stop offset="0.04" stop-color="#ffe7fe"/><stop offset="0.10" stop-color="#ffc7fd"/><stop offset="0.18" stop-color="#ffa4fb"/><stop offset="0.28" stop-color="#ff81f9"/><stop offset="0.40" stop-color="#ff5ff8"/><stop offset="0.55" stop-color="#ff3ef7"/><stop offset="0.70" stop-color="#ff25f5"/><stop offset="0.85" stop-color="#ff11f5"/><stop offset="1.00" stop-color="#ff00f4"/></linearGradient><linearGradient id="w124" gradientUnits="userSpaceOnUse" x1="1228.5" y1="230.3" x2="1344.2" y2="342.4"><stop offset="0.00" stop-color="#fffeff"/><stop offset="0.04" stop-color="#ffe7ff"/><stop offset="0.10" stop-color="#ffc8fe"/><stop offset="0.18" stop-color="#ffa5fd"/><stop offset="0.28" stop-color="#ff81fc"/><stop offset="0.40" stop-color="#ff60fc"/><stop offset="0.55" stop-color="#ff3ffb"/><stop offset="0.70" stop-color="#ff25fb"/><stop offset="0.85" stop-color="#ff11fa"/><stop offset="1.00" stop-color="#ff00fa"/></linearGradient><linearGradient id="w125" gradientUnits="userSpaceOnUse" x1="1228.5" y1="230.3" x2="1342.7" y2="343.9"><stop offset="0.00" stop-color="#fffeff"/><stop offset="0.04" stop-color="#ffe7ff"/><stop offset="0.10" stop-color="#ffc8ff"/><stop offset="0.18" stop-color="#ffa5ff"/><stop offset="0.28" stop-color="#ff82ff"/><stop offset="0.40" stop-color="#ff60ff"/><stop offset="0.55" stop-color="#ff3fff"/><stop offset="0.70" stop-color="#ff26ff"/><stop offset="0.85" stop-color="#ff11ff"/><stop offset="1.00" stop-color="#ff00ff"/></linearGradient><linearGradient id="w126" gradientUnits="userSpaceOnUse" x1="1228.5" y1="230.3" x2="1341.0" y2="345.7"><stop offset="0.00" stop-color="#fffeff"/><stop offset="0.04" stop-color="#fee7ff"/><stop offset="0.10" stop-color="#fec8ff"/><stop offset="0.18" stop-color="#fda5ff"/><stop offset="0.28" stop-color="#fc81ff"/><stop offset="0.40" stop-color="#fb60ff"/><stop offset="0.55" stop-color="#fb3fff"/><stop offset="0.70" stop-color="#fa25ff"/><stop offset="0.85" stop-color="#fa11ff"/><stop offset="1.00" stop-color="#f900ff"/></linearGradient><linearGradient id="w127" gradientUnits="userSpaceOnUse" x1="1228.5" y1="230.3" x2="1338.9" y2="347.7"><stop offset="0.00" stop-color="#fffeff"/><stop offset="0.04" stop-color="#fee7ff"/><stop offset="0.10" stop-color="#fcc7ff"/><stop offset="0.18" stop-color="#faa4ff"/><stop offset="0.28" stop-color="#f981ff"/><stop offset="0.40" stop-color="#f75fff"/><stop offset="0.55" stop-color="#f53eff"/><stop offset="0.70" stop-color="#f425ff"/><stop offset="0.85" stop-color="#f311ff"/><stop offset="1.00" stop-color="#f200ff"/></linearGradient><linearGradient id="w128" gradientUnits="userSpaceOnUse" x1="1228.5" y1="230.3" x2="1336.6" y2="350.1"><stop offset="0.00" stop-color="#fffeff"/><stop offset="0.04" stop-color="#fde6ff"/><stop offset="0.10" stop-color="#fac6ff"/><stop offset="0.18" stop-color="#f8a3ff"/><stop offset="0.28" stop-color="#f580ff"/><stop offset="0.40" stop-color="#f25eff"/><stop offset="0.55" stop-color="#ef3eff"/><stop offset="0.70" stop-color="#ed24ff"/><stop offset="0.85" stop-color="#ec10ff"/><stop offset="1.00" stop-color="#eb00ff"/></linearGradient><linearGradient id="w129" gradientUnits="userSpaceOnUse" x1="1228.5" y1="230.3" x2="1334.2" y2="352.5"><stop offset="0.00" stop-color="#fffeff"/><stop offset="0.04" stop-color="#fce6ff"/><stop offset="0.10" stop-color="#f9c6ff"/><stop offset="0.18" stop-color="#f5a2ff"/><stop offset="0.28" stop-color="#f17fff"/><stop offset="0.40" stop-color="#ed5dff"/><stop offset="0.55" stop-color="#ea3dff"/><stop offset="0.70" stop-color="#e724ff"/><stop offset="0.85" stop-color="#e510ff"/><stop offset="1.00" stop-color="#e300ff"/></linearGradient><linearGradient id="w130" gradientUnits="userSpaceOnUse" x1="1228.5" y1="230.3" x2="1331.9" y2="354.9"><stop offset="0.00" stop-color="#fffeff"/><stop offset="0.04" stop-color="#fbe6ff"/><stop offset="0.10" stop-color="#f7c5ff"/><stop offset="0.18" stop-color="#f2a1ff"/><stop offset="0.28" stop-color="#ed7eff"/><stop offset="0.40" stop-color="#e95cff"/><stop offset="0.55" stop-color="#e43cff"/><stop offset="0.70" stop-color="#e124ff"/><stop offset="0.85" stop-color="#de10ff"/><stop offset="1.00" stop-color="#dc00ff"/></linearGradient><linearGradient id="w131" gradientUnits="userSpaceOnUse" x1="1228.5" y1="230.3" x2="1329.5" y2="357.3"><stop offset="0.00" stop-color="#fffeff"/><stop offset="0.04" stop-color="#fbe5ff"/><stop offset="0.10" stop-color="#f5c4ff"/><stop offset="0.18" stop-color="#efa1ff"/><stop offset="0.28" stop-color="#e97dff"/><stop offset="0.40" stop-color="#e45cff"/><stop offset="0.55" stop-color="#df3cff"/><stop offset="0.70" stop-color="#db23ff"/><stop offset="0.85" stop-color="#d710ff"/><stop offset="1.00" stop-color="#d500ff"/></linearGradient><linearGradient id="w132" gradientUnits="userSpaceOnUse" x1="1228.5" y1="230.3" x2="1327.2" y2="359.7"><stop offset="0.00" stop-color="#fffeff"/><stop offset="0.04" stop-color="#fae5ff"/><stop offset="0.10" stop-color="#f4c4ff"/><stop offset="0.18" stop-color="#eda0ff"/><stop offset="0.28" stop-color="#e67cff"/><stop offset="0.40" stop-color="#df5bff"/><stop offset="0.55" stop-color="#d93bff"/><stop offset="0.70" stop-color="#d523ff"/><stop offset="0.85" stop-color="#d110ff"/><stop offset="1.00" stop-color="#ce00ff"/></linearGradient><linearGradient id="w133" gradientUnits="userSpaceOnUse" x1="1228.5" y1="230.3" x2="1324.8" y2="362.1"><stop offset="0.00" stop-color="#fffeff"/><stop offset="0.04" stop-color="#f9e5ff"/><stop offset="0.10" stop-color="#f2c3ff"/><stop offset="0.18" stop-color="#ea9fff"/><stop offset="0.28" stop-color="#e27bff"/><stop offset="0.40" stop-color="#db5aff"/><stop offset="0.55" stop-color="#d43aff"/><stop offset="0.70" stop-color="#cf22ff"/><stop offset="0.85" stop-color="#cb0fff"/><stop offset="1.00" stop-color="#c700ff"/></linearGradient><linearGradient id="w134" gradientUnits="userSpaceOnUse" x1="1228.5" y1="230.3" x2="1322.5" y2="364.5"><stop offset="0.00" stop-color="#fffeff"/><stop offset="0.04" stop-color="#f8e4ff"/><stop offset="0.10" stop-color="#f0c3ff"/><stop offset="0.18" stop-color="#e79eff"/><stop offset="0.28" stop-color="#df7aff"/><stop offset="0.40" stop-color="#d659ff"/><stop offset="0.55" stop-color="#cf3aff"/><stop offset="0.70" stop-color="#c922ff"/><stop offset="0.85" stop-color="#c40fff"/><stop offset="1.00" stop-color="#c100ff"/></linearGradient><linearGradient id="w135" gradientUnits="userSpaceOnUse" x1="1228.5" y1="230.3" x2="1320.1" y2="366.9"><stop offset="0.00" stop-color="#fffeff"/><stop offset="0.04" stop-color="#f8e4ff"/><stop offset="0.10" stop-color="#efc2ff"/><stop offset="0.18" stop-color="#e59dff"/><stop offset="0.28" stop-color="#db79ff"/><stop offset="0.40" stop-color="#d258ff"/><stop offset="0.55" stop-color="#ca39ff"/><stop offset="0.70" stop-color="#c322ff"/><stop offset="0.85" stop-color="#be0fff"/><stop offset="1.00" stop-color="#ba00ff"/></linearGradient><linearGradient id="w136" gradientUnits="userSpaceOnUse" x1="1228.5" y1="230.3" x2="1317.8" y2="369.3"><stop offset="0.00" stop-color="#fffeff"/><stop offset="0.04" stop-color="#f7e4ff"/><stop offset="0.10" stop-color="#edc1ff"/><stop offset="0.18" stop-color="#e29dff"/><stop offset="0.28" stop-color="#d879ff"/><stop offset="0.40" stop-color="#ce58ff"/><stop offset="0.55" stop-color="#c539ff"/><stop offset="0.70" stop-color="#be21ff"/><stop offset="0.85" stop-color="#b90fff"/><stop offset="1.00" stop-color="#b400ff"/></linearGradient><linearGradient id="w137" gradientUnits="userSpaceOnUse" x1="1228.5" y1="230.3" x2="1315.5" y2="371.7"><stop offset="0.00" stop-color="#fefeff"/><stop offset="0.04" stop-color="#f6e3ff"/><stop offset="0.10" stop-color="#ebc1ff"/><stop offset="0.18" stop-color="#e09cff"/><stop offset="0.28" stop-color="#d478ff"/><stop offset="0.40" stop-color="#ca57ff"/><stop offset="0.55" stop-color="#c038ff"/><stop offset="0.70" stop-color="#b921ff"/><stop offset="0.85" stop-color="#b30fff"/><stop offset="1.00" stop-color="#ae00ff"/></linearGradient><linearGradient id="w138" gradientUnits="userSpaceOnUse" x1="1228.5" y1="230.3" x2="1313.1" y2="374.1"><stop offset="0.00" stop-color="#fefeff"/><stop offset="0.04" stop-color="#f5e3ff"/><stop offset="0.10" stop-color="#eac0ff"/><stop offset="0.18" stop-color="#dd9bff"/><stop offset="0.28" stop-color="#d177ff"/><stop offset="0.40" stop-color="#c656ff"/><stop offset="0.55" stop-color="#bb37ff"/><stop offset="0.70" stop-color="#b320ff"/><stop offset="0.85" stop-color="#ad0eff"/><stop offset="1.00" stop-color="#a800ff"/></linearGradient><linearGradient id="w139" gradientUnits="userSpaceOnUse" x1="1228.5" y1="230.3" x2="1310.8" y2="376.5"><stop offset="0.00" stop-color="#fefdff"/><stop offset="0.04" stop-color="#f5e3ff"/><stop offset="0.10" stop-color="#e8c0ff"/><stop offset="0.18" stop-color="#da9aff"/><stop offset="0.28" stop-color="#cd76ff"/><stop offset="0.40" stop-color="#c255ff"/><stop offset="0.55" stop-color="#b737ff"/><stop offset="0.70" stop-color="#ae20ff"/><stop offset="0.85" stop-color="#a80eff"/><stop offset="1.00" stop-color="#a300ff"/></linearGradient><linearGradient id="w140" gradientUnits="userSpaceOnUse" x1="1228.5" y1="230.3" x2="1308.4" y2="378.9"><stop offset="0.00" stop-color="#fefdff"/><stop offset="0.04" stop-color="#f4e3ff"/><stop offset="0.10" stop-color="#e6bfff"/><stop offset="0.18" stop-color="#d899ff"/><stop offset="0.28" stop-color="#ca75ff"/><stop offset="0.40" stop-color="#be55ff"/><stop offset="0.55" stop-color="#b236ff"/><stop offset="0.70" stop-color="#a920ff"/><stop offset="0.85" stop-color="#a20eff"/><stop offset="1.00" stop-color="#9d00ff"/></linearGradient><linearGradient id="w141" gradientUnits="userSpaceOnUse" x1="1228.5" y1="230.3" x2="1305.8" y2="381.6"><stop offset="0.00" stop-color="#fefdff"/><stop offset="0.04" stop-color="#f3e2ff"/><stop offset="0.10" stop-color="#e5beff"/><stop offset="0.18" stop-color="#d599ff"/><stop offset="0.28" stop-color="#c674ff"/><stop offset="0.40" stop-color="#b954ff"/><stop offset="0.55" stop-color="#ad36ff"/><stop offset="0.70" stop-color="#a41fff"/><stop offset="0.85" stop-color="#9d0eff"/><stop offset="1.00" stop-color="#9700ff"/></linearGradient><linearGradient id="w142" gradientUnits="userSpaceOnUse" x1="1228.5" y1="230.3" x2="1302.6" y2="384.9"><stop offset="0.00" stop-color="#fefdff"/><stop offset="0.04" stop-color="#f2e2ff"/><stop offset="0.10" stop-color="#e2beff"/><stop offset="0.18" stop-color="#d298ff"/><stop offset="0.28" stop-color="#c273ff"/><stop offset="0.40" stop-color="#b453ff"/><stop offset="0.55" stop-color="#a735ff"/><stop offset="0.70" stop-color="#9d1fff"/><stop offset="0.85" stop-color="#960eff"/><stop offset="1.00" stop-color="#9000ff"/></linearGradient><linearGradient id="w143" gradientUnits="userSpaceOnUse" x1="1228.5" y1="230.3" x2="1299.0" y2="388.5"><stop offset="0.00" stop-color="#fefdff"/><stop offset="0.04" stop-color="#f1e1ff"/><stop offset="0.10" stop-color="#e0bdff"/><stop offset="0.18" stop-color="#ce96ff"/><stop offset="0.28" stop-color="#bd72ff"/><stop offset="0.40" stop-color="#ae52ff"/><stop offset="0.55" stop-color="#a134ff"/><stop offset="0.70" stop-color="#961eff"/><stop offset="0.85" stop-color="#8e0dff"/><stop offset="1.00" stop-color="#8800ff"/></linearGradient><linearGradient id="w144" gradientUnits="userSpaceOnUse" x1="1228.5" y1="230.3" x2="1295.5" y2="392.0"><stop offset="0.00" stop-color="#fefdff"/><stop offset="0.04" stop-color="#f0e1ff"/><stop offset="0.10" stop-color="#debcff"/><stop offset="0.18" stop-color="#cb95ff"/><stop offset="0.28" stop-color="#b971ff"/><stop offset="0.40" stop-color="#a951ff"/><stop offset="0.55" stop-color="#9a34ff"/><stop offset="0.70" stop-color="#901eff"/><stop offset="0.85" stop-color="#870dff"/><stop offset="1.00" stop-color="#8100ff"/></linearGradient><linearGradient id="w145" gradientUnits="userSpaceOnUse" x1="1228.5" y1="230.3" x2="1292.0" y2="395.6"><stop offset="0.00" stop-color="#fefdff"/><stop offset="0.04" stop-color="#efe0ff"/><stop offset="0.10" stop-color="#dbbbff"/><stop offset="0.18" stop-color="#c794ff"/><stop offset="0.28" stop-color="#b470ff"/><stop offset="0.40" stop-color="#a450ff"/><stop offset="0.55" stop-color="#9433ff"/><stop offset="0.70" stop-color="#891dff"/><stop offset="0.85" stop-color="#800dff"/><stop offset="1.00" stop-color="#7a00ff"/></linearGradient><linearGradient id="w146" gradientUnits="userSpaceOnUse" x1="1228.5" y1="230.3" x2="1288.5" y2="399.2"><stop offset="0.00" stop-color="#fefdff"/><stop offset="0.04" stop-color="#eee0ff"/><stop offset="0.10" stop-color="#d9baff"/><stop offset="0.18" stop-color="#c493ff"/><stop offset="0.28" stop-color="#b06fff"/><stop offset="0.40" stop-color="#9e4fff"/><stop offset="0.55" stop-color="#8e32ff"/><stop offset="0.70" stop-color="#831dff"/><stop offset="0.85" stop-color="#7a0dff"/><stop offset="1.00" stop-color="#7300ff"/></linearGradient><linearGradient id="w147" gradientUnits="userSpaceOnUse" x1="1228.5" y1="230.3" x2="1285.0" y2="402.8"><stop offset="0.00" stop-color="#fefdff"/><stop offset="0.04" stop-color="#eddfff"/><stop offset="0.10" stop-color="#d7b9ff"/><stop offset="0.18" stop-color="#c092ff"/><stop offset="0.28" stop-color="#ab6eff"/><stop offset="0.40" stop-color="#994eff"/><stop offset="0.55" stop-color="#8932ff"/><stop offset="0.70" stop-color="#7d1dff"/><stop offset="0.85" stop-color="#730dff"/><stop offset="1.00" stop-color="#6c00ff"/></linearGradient><linearGradient id="w148" gradientUnits="userSpaceOnUse" x1="1228.5" y1="230.3" x2="1281.4" y2="406.4"><stop offset="0.00" stop-color="#fefdff"/><stop offset="0.04" stop-color="#ecdfff"/><stop offset="0.10" stop-color="#d5b8ff"/><stop offset="0.18" stop-color="#bd91ff"/><stop offset="0.28" stop-color="#a76dff"/><stop offset="0.40" stop-color="#944dff"/><stop offset="0.55" stop-color="#8331ff"/><stop offset="0.70" stop-color="#771cff"/><stop offset="0.85" stop-color="#6d0cff"/><stop offset="1.00" stop-color="#6600ff"/></linearGradient><linearGradient id="w149" gradientUnits="userSpaceOnUse" x1="1228.5" y1="230.3" x2="1277.9" y2="410.0"><stop offset="0.00" stop-color="#fefdff"/><stop offset="0.04" stop-color="#ebdfff"/><stop offset="0.10" stop-color="#d2b8ff"/><stop offset="0.18" stop-color="#ba90ff"/><stop offset="0.28" stop-color="#a36cff"/><stop offset="0.40" stop-color="#8f4cff"/><stop offset="0.55" stop-color="#7e30ff"/><stop offset="0.70" stop-color="#711cff"/><stop offset="0.85" stop-color="#670cff"/><stop offset="1.00" stop-color="#6000ff"/></linearGradient><linearGradient id="w150" gradientUnits="userSpaceOnUse" x1="1228.5" y1="230.3" x2="1273.8" y2="414.2"><stop offset="0.00" stop-color="#fefdff"/><stop offset="0.04" stop-color="#e9deff"/><stop offset="0.10" stop-color="#d0b7ff"/><stop offset="0.18" stop-color="#b68fff"/><stop offset="0.28" stop-color="#9e6bff"/><stop offset="0.40" stop-color="#8a4bff"/><stop offset="0.55" stop-color="#7830ff"/><stop offset="0.70" stop-color="#6a1bff"/><stop offset="0.85" stop-color="#600cff"/><stop offset="1.00" stop-color="#5900ff"/></linearGradient><linearGradient id="w151" gradientUnits="userSpaceOnUse" x1="1228.5" y1="230.3" x2="1269.1" y2="419.0"><stop offset="0.00" stop-color="#fefdff"/><stop offset="0.04" stop-color="#e8ddff"/><stop offset="0.10" stop-color="#cdb6ff"/><stop offset="0.18" stop-color="#b28eff"/><stop offset="0.28" stop-color="#996aff"/><stop offset="0.40" stop-color="#844aff"/><stop offset="0.55" stop-color="#712fff"/><stop offset="0.70" stop-color="#631bff"/><stop offset="0.85" stop-color="#590cff"/><stop offset="1.00" stop-color="#5100ff"/></linearGradient><linearGradient id="w152" gradientUnits="userSpaceOnUse" x1="1228.5" y1="230.3" x2="1264.4" y2="423.8"><stop offset="0.00" stop-color="#fefdff"/><stop offset="0.04" stop-color="#e7ddff"/><stop offset="0.10" stop-color="#cab4ff"/><stop offset="0.18" stop-color="#ad8cff"/><stop offset="0.28" stop-color="#9468ff"/><stop offset="0.40" stop-color="#7e49ff"/><stop offset="0.55" stop-color="#6a2eff"/><stop offset="0.70" stop-color="#5c1aff"/><stop offset="0.85" stop-color="#520cff"/><stop offset="1.00" stop-color="#4900ff"/></linearGradient><linearGradient id="w153" gradientUnits="userSpaceOnUse" x1="1228.5" y1="230.3" x2="1259.8" y2="428.6"><stop offset="0.00" stop-color="#fefdff"/><stop offset="0.04" stop-color="#e5dcff"/><stop offset="0.10" stop-color="#c7b3ff"/><stop offset="0.18" stop-color="#a98bff"/><stop offset="0.28" stop-color="#8f67ff"/><stop offset="0.40" stop-color="#7848ff"/><stop offset="0.55" stop-color="#642dff"/><stop offset="0.70" stop-color="#561aff"/><stop offset="0.85" stop-color="#4b0bff"/><stop offset="1.00" stop-color="#4200ff"/></linearGradient><linearGradient id="w154" gradientUnits="userSpaceOnUse" x1="1228.5" y1="230.3" x2="1255.1" y2="433.3"><stop offset="0.00" stop-color="#fdfdff"/><stop offset="0.04" stop-color="#e4dcff"/><stop offset="0.10" stop-color="#c4b2ff"/><stop offset="0.18" stop-color="#a58aff"/><stop offset="0.28" stop-color="#8a66ff"/><stop offset="0.40" stop-color="#7247ff"/><stop offset="0.55" stop-color="#5e2dff"/><stop offset="0.70" stop-color="#4f19ff"/><stop offset="0.85" stop-color="#440bff"/><stop offset="1.00" stop-color="#3c00ff"/></linearGradient><linearGradient id="w155" gradientUnits="userSpaceOnUse" x1="1228.5" y1="230.3" x2="1250.1" y2="438.4"><stop offset="0.00" stop-color="#fdfdff"/><stop offset="0.04" stop-color="#e2dbff"/><stop offset="0.10" stop-color="#c1b1ff"/><stop offset="0.18" stop-color="#a189ff"/><stop offset="0.28" stop-color="#8465ff"/><stop offset="0.40" stop-color="#6c46ff"/><stop offset="0.55" stop-color="#572cff"/><stop offset="0.70" stop-color="#4819ff"/><stop offset="0.85" stop-color="#3d0bff"/><stop offset="1.00" stop-color="#3500ff"/></linearGradient><linearGradient id="w156" gradientUnits="userSpaceOnUse" x1="1228.5" y1="230.3" x2="1244.5" y2="444.1"><stop offset="0.00" stop-color="#fdfdff"/><stop offset="0.04" stop-color="#e1daff"/><stop offset="0.10" stop-color="#beb0ff"/><stop offset="0.18" stop-color="#9c87ff"/><stop offset="0.28" stop-color="#7f63ff"/><stop offset="0.40" stop-color="#6645ff"/><stop offset="0.55" stop-color="#502bff"/><stop offset="0.70" stop-color="#4118ff"/><stop offset="0.85" stop-color="#360bff"/><stop offset="1.00" stop-color="#2d00ff"/></linearGradient><linearGradient id="w157" gradientUnits="userSpaceOnUse" x1="1228.5" y1="230.3" x2="1238.6" y2="450.1"><stop offset="0.00" stop-color="#fdfdff"/><stop offset="0.04" stop-color="#dfdaff"/><stop offset="0.10" stop-color="#bbafff"/><stop offset="0.18" stop-color="#9886ff"/><stop offset="0.28" stop-color="#7962ff"/><stop offset="0.40" stop-color="#6044ff"/><stop offset="0.55" stop-color="#4a2aff"/><stop offset="0.70" stop-color="#3a18ff"/><stop offset="0.85" stop-color="#2f0aff"/><stop offset="1.00" stop-color="#2600ff"/></linearGradient><linearGradient id="w158" gradientUnits="userSpaceOnUse" x1="1228.5" y1="230.3" x2="1232.8" y2="456.1"><stop offset="0.00" stop-color="#fdfdff"/><stop offset="0.04" stop-color="#ddd9ff"/><stop offset="0.10" stop-color="#b7aeff"/><stop offset="0.18" stop-color="#9384ff"/><stop offset="0.28" stop-color="#7361ff"/><stop offset="0.40" stop-color="#5943ff"/><stop offset="0.55" stop-color="#4329ff"/><stop offset="0.70" stop-color="#3318ff"/><stop offset="0.85" stop-color="#270aff"/><stop offset="1.00" stop-color="#1e00ff"/></linearGradient><linearGradient id="w159" gradientUnits="userSpaceOnUse" x1="1228.5" y1="230.3" x2="1226.6" y2="462.4"><stop offset="0.00" stop-color="#fdfdff"/><stop offset="0.04" stop-color="#dcd8ff"/><stop offset="0.10" stop-color="#b4acff"/><stop offset="0.18" stop-color="#8e83ff"/><stop offset="0.28" stop-color="#6e5fff"/><stop offset="0.40" stop-color="#5342ff"/><stop offset="0.55" stop-color="#3c29ff"/><stop offset="0.70" stop-color="#2c17ff"/><stop offset="0.85" stop-color="#200aff"/><stop offset="1.00" stop-color="#1700ff"/></linearGradient><linearGradient id="w160" gradientUnits="userSpaceOnUse" x1="1228.5" y1="230.3" x2="1219.9" y2="469.3"><stop offset="0.00" stop-color="#fdfdff"/><stop offset="0.04" stop-color="#dad7ff"/><stop offset="0.10" stop-color="#b0abff"/><stop offset="0.18" stop-color="#8981ff"/><stop offset="0.28" stop-color="#685eff"/><stop offset="0.40" stop-color="#4c41ff"/><stop offset="0.55" stop-color="#3528ff"/><stop offset="0.70" stop-color="#2517ff"/><stop offset="0.85" stop-color="#190aff"/><stop offset="1.00" stop-color="#1000ff"/></linearGradient><linearGradient id="w161" gradientUnits="userSpaceOnUse" x1="1228.5" y1="230.3" x2="1212.9" y2="476.4"><stop offset="0.00" stop-color="#fdfdff"/><stop offset="0.04" stop-color="#d8d6ff"/><stop offset="0.10" stop-color="#acaaff"/><stop offset="0.18" stop-color="#8480ff"/><stop offset="0.28" stop-color="#615cff"/><stop offset="0.40" stop-color="#463fff"/><stop offset="0.55" stop-color="#2e27ff"/><stop offset="0.70" stop-color="#1e16ff"/><stop offset="0.85" stop-color="#110aff"/><stop offset="1.00" stop-color="#0800ff"/></linearGradient><linearGradient id="w162" gradientUnits="userSpaceOnUse" x1="1228.5" y1="230.3" x2="1207.0" y2="482.4"><stop offset="0.00" stop-color="#fdfdff"/><stop offset="0.04" stop-color="#d6d6ff"/><stop offset="0.10" stop-color="#a9a8ff"/><stop offset="0.18" stop-color="#807eff"/><stop offset="0.28" stop-color="#5c5bff"/><stop offset="0.40" stop-color="#403eff"/><stop offset="0.55" stop-color="#2826ff"/><stop offset="0.70" stop-color="#1816ff"/><stop offset="0.85" stop-color="#0c09ff"/><stop offset="1.00" stop-color="#0200ff"/></linearGradient><linearGradient id="w163" gradientUnits="userSpaceOnUse" x1="1228.5" y1="230.3" x2="1203.0" y2="474.9"><stop offset="0.00" stop-color="#fdfdff"/><stop offset="0.04" stop-color="#d6d7ff"/><stop offset="0.10" stop-color="#aaabff"/><stop offset="0.18" stop-color="#8081ff"/><stop offset="0.28" stop-color="#5c5eff"/><stop offset="0.40" stop-color="#3f42ff"/><stop offset="0.55" stop-color="#2729ff"/><stop offset="0.70" stop-color="#1619ff"/><stop offset="0.85" stop-color="#0a0cff"/><stop offset="1.00" stop-color="#0003ff"/></linearGradient><linearGradient id="w164" gradientUnits="userSpaceOnUse" x1="1228.5" y1="230.3" x2="1199.9" y2="455.6"><stop offset="0.00" stop-color="#fdfdff"/><stop offset="0.04" stop-color="#d9daff"/><stop offset="0.10" stop-color="#adb0ff"/><stop offset="0.18" stop-color="#8488ff"/><stop offset="0.28" stop-color="#6066ff"/><stop offset="0.40" stop-color="#4249ff"/><stop offset="0.55" stop-color="#2931ff"/><stop offset="0.70" stop-color="#171fff"/><stop offset="0.85" stop-color="#0a13ff"/><stop offset="1.00" stop-color="#0009ff"/></linearGradient><linearGradient id="w165" gradientUnits="userSpaceOnUse" x1="1228.5" y1="230.3" x2="1197.0" y2="437.7"><stop offset="0.00" stop-color="#fdfdff"/><stop offset="0.04" stop-color="#daddff"/><stop offset="0.10" stop-color="#b0b5ff"/><stop offset="0.18" stop-color="#888fff"/><stop offset="0.28" stop-color="#646dff"/><stop offset="0.40" stop-color="#4551ff"/><stop offset="0.55" stop-color="#2b38ff"/><stop offset="0.70" stop-color="#1926ff"/><stop offset="0.85" stop-color="#0b19ff"/><stop offset="1.00" stop-color="#000fff"/></linearGradient><linearGradient id="w166" gradientUnits="userSpaceOnUse" x1="1228.5" y1="230.3" x2="1194.3" y2="421.1"><stop offset="0.00" stop-color="#fdfdff"/><stop offset="0.04" stop-color="#dcdfff"/><stop offset="0.10" stop-color="#b4baff"/><stop offset="0.18" stop-color="#8b95ff"/><stop offset="0.28" stop-color="#6774ff"/><stop offset="0.40" stop-color="#4958ff"/><stop offset="0.55" stop-color="#2d3fff"/><stop offset="0.70" stop-color="#1a2eff"/><stop offset="0.85" stop-color="#0b20ff"/><stop offset="1.00" stop-color="#0016ff"/></linearGradient><linearGradient id="w167" gradientUnits="userSpaceOnUse" x1="1228.5" y1="230.3" x2="1191.9" y2="405.9"><stop offset="0.00" stop-color="#fdfdff"/><stop offset="0.04" stop-color="#dee2ff"/><stop offset="0.10" stop-color="#b7bfff"/><stop offset="0.18" stop-color="#8f9cff"/><stop offset="0.28" stop-color="#6b7cff"/><stop offset="0.40" stop-color="#4c60ff"/><stop offset="0.55" stop-color="#3047ff"/><stop offset="0.70" stop-color="#1b35ff"/><stop offset="0.85" stop-color="#0c27ff"/><stop offset="1.00" stop-color="#001dff"/></linearGradient><linearGradient id="w168" gradientUnits="userSpaceOnUse" x1="1228.5" y1="230.3" x2="1189.6" y2="391.9"><stop offset="0.00" stop-color="#fdfeff"/><stop offset="0.04" stop-color="#e0e4ff"/><stop offset="0.10" stop-color="#bac3ff"/><stop offset="0.18" stop-color="#93a2ff"/><stop offset="0.28" stop-color="#6e83ff"/><stop offset="0.40" stop-color="#4f67ff"/><stop offset="0.55" stop-color="#324fff"/><stop offset="0.70" stop-color="#1d3cff"/><stop offset="0.85" stop-color="#0d2fff"/><stop offset="1.00" stop-color="#0024ff"/></linearGradient><linearGradient id="w169" gradientUnits="userSpaceOnUse" x1="1228.5" y1="230.3" x2="1187.6" y2="379.3"><stop offset="0.00" stop-color="#fdfeff"/><stop offset="0.04" stop-color="#e1e6ff"/><stop offset="0.10" stop-color="#bcc8ff"/><stop offset="0.18" stop-color="#96a8ff"/><stop offset="0.28" stop-color="#728aff"/><stop offset="0.40" stop-color="#526fff"/><stop offset="0.55" stop-color="#3456ff"/><stop offset="0.70" stop-color="#1e44ff"/><stop offset="0.85" stop-color="#0d36ff"/><stop offset="1.00" stop-color="#002bff"/></linearGradient><linearGradient id="w170" gradientUnits="userSpaceOnUse" x1="1228.5" y1="230.3" x2="1185.7" y2="368.0"><stop offset="0.00" stop-color="#fdfeff"/><stop offset="0.04" stop-color="#e2e8ff"/><stop offset="0.10" stop-color="#bfcbff"/><stop offset="0.18" stop-color="#99adff"/><stop offset="0.28" stop-color="#7590ff"/><stop offset="0.40" stop-color="#5476ff"/><stop offset="0.55" stop-color="#365dff"/><stop offset="0.70" stop-color="#204bff"/><stop offset="0.85" stop-color="#0e3dff"/><stop offset="1.00" stop-color="#0032ff"/></linearGradient><linearGradient id="w171" gradientUnits="userSpaceOnUse" x1="1228.5" y1="230.3" x2="1184.1" y2="357.8"><stop offset="0.00" stop-color="#fdfeff"/><stop offset="0.04" stop-color="#e4eaff"/><stop offset="0.10" stop-color="#c1cfff"/><stop offset="0.18" stop-color="#9cb2ff"/><stop offset="0.28" stop-color="#7896ff"/><stop offset="0.40" stop-color="#577dff"/><stop offset="0.55" stop-color="#3865ff"/><stop offset="0.70" stop-color="#2153ff"/><stop offset="0.85" stop-color="#0f44ff"/><stop offset="1.00" stop-color="#0039ff"/></linearGradient><linearGradient id="w172" gradientUnits="userSpaceOnUse" x1="1228.5" y1="230.3" x2="1182.5" y2="348.1"><stop offset="0.00" stop-color="#fefeff"/><stop offset="0.04" stop-color="#e5ebff"/><stop offset="0.10" stop-color="#c3d2ff"/><stop offset="0.18" stop-color="#9fb7ff"/><stop offset="0.28" stop-color="#7b9cff"/><stop offset="0.40" stop-color="#5a84ff"/><stop offset="0.55" stop-color="#3b6cff"/><stop offset="0.70" stop-color="#225aff"/><stop offset="0.85" stop-color="#0f4cff"/><stop offset="1.00" stop-color="#0040ff"/></linearGradient><linearGradient id="w173" gradientUnits="userSpaceOnUse" x1="1228.5" y1="230.3" x2="1181.1" y2="339.5"><stop offset="0.00" stop-color="#fefeff"/><stop offset="0.04" stop-color="#e6edff"/><stop offset="0.10" stop-color="#c5d6ff"/><stop offset="0.18" stop-color="#a2bcff"/><stop offset="0.28" stop-color="#7ea2ff"/><stop offset="0.40" stop-color="#5d8aff"/><stop offset="0.55" stop-color="#3d73ff"/><stop offset="0.70" stop-color="#2461ff"/><stop offset="0.85" stop-color="#1053ff"/><stop offset="1.00" stop-color="#0047ff"/></linearGradient><linearGradient id="w174" gradientUnits="userSpaceOnUse" x1="1228.5" y1="230.3" x2="1179.8" y2="331.5"><stop offset="0.00" stop-color="#fefeff"/><stop offset="0.04" stop-color="#e7eeff"/><stop offset="0.10" stop-color="#c7d9ff"/><stop offset="0.18" stop-color="#a4c0ff"/><stop offset="0.28" stop-color="#81a8ff"/><stop offset="0.40" stop-color="#5f91ff"/><stop offset="0.55" stop-color="#3f7aff"/><stop offset="0.70" stop-color="#2568ff"/><stop offset="0.85" stop-color="#115aff"/><stop offset="1.00" stop-color="#004fff"/></linearGradient><linearGradient id="w175" gradientUnits="userSpaceOnUse" x1="1228.5" y1="230.3" x2="1178.6" y2="324.2"><stop offset="0.00" stop-color="#fefeff"/><stop offset="0.04" stop-color="#e8f0ff"/><stop offset="0.10" stop-color="#c9dbff"/><stop offset="0.18" stop-color="#a7c5ff"/><stop offset="0.28" stop-color="#84adff"/><stop offset="0.40" stop-color="#6297ff"/><stop offset="0.55" stop-color="#4181ff"/><stop offset="0.70" stop-color="#2670ff"/><stop offset="0.85" stop-color="#1162ff"/><stop offset="1.00" stop-color="#0056ff"/></linearGradient><linearGradient id="w176" gradientUnits="userSpaceOnUse" x1="1228.5" y1="230.3" x2="1177.6" y2="317.6"><stop offset="0.00" stop-color="#fefeff"/><stop offset="0.04" stop-color="#e9f1ff"/><stop offset="0.10" stop-color="#cbdeff"/><stop offset="0.18" stop-color="#a9c8ff"/><stop offset="0.28" stop-color="#86b2ff"/><stop offset="0.40" stop-color="#649dff"/><stop offset="0.55" stop-color="#4387ff"/><stop offset="0.70" stop-color="#2876ff"/><stop offset="0.85" stop-color="#1269ff"/><stop offset="1.00" stop-color="#005dff"/></linearGradient><linearGradient id="w177" gradientUnits="userSpaceOnUse" x1="1228.5" y1="230.3" x2="1176.6" y2="311.6"><stop offset="0.00" stop-color="#fefeff"/><stop offset="0.04" stop-color="#e9f2ff"/><stop offset="0.10" stop-color="#cce0ff"/><stop offset="0.18" stop-color="#abccff"/><stop offset="0.28" stop-color="#88b7ff"/><stop offset="0.40" stop-color="#66a2ff"/><stop offset="0.55" stop-color="#448eff"/><stop offset="0.70" stop-color="#297dff"/><stop offset="0.85" stop-color="#136fff"/><stop offset="1.00" stop-color="#0064ff"/></linearGradient><linearGradient id="w178" gradientUnits="userSpaceOnUse" x1="1228.5" y1="230.3" x2="1175.7" y2="306.3"><stop offset="0.00" stop-color="#fefeff"/><stop offset="0.04" stop-color="#eaf3ff"/><stop offset="0.10" stop-color="#cee2ff"/><stop offset="0.18" stop-color="#adcfff"/><stop offset="0.28" stop-color="#8bbbff"/><stop offset="0.40" stop-color="#69a8ff"/><stop offset="0.55" stop-color="#4694ff"/><stop offset="0.70" stop-color="#2a83ff"/><stop offset="0.85" stop-color="#1376ff"/><stop offset="1.00" stop-color="#006bff"/></linearGradient><linearGradient id="w179" gradientUnits="userSpaceOnUse" x1="1228.5" y1="230.3" x2="1174.9" y2="301.0"><stop offset="0.00" stop-color="#fefeff"/><stop offset="0.04" stop-color="#ebf4ff"/><stop offset="0.10" stop-color="#cfe4ff"/><stop offset="0.18" stop-color="#afd3ff"/><stop offset="0.28" stop-color="#8dc0ff"/><stop offset="0.40" stop-color="#6badff"/><stop offset="0.55" stop-color="#489aff"/><stop offset="0.70" stop-color="#2b8aff"/><stop offset="0.85" stop-color="#147dff"/><stop offset="1.00" stop-color="#0072ff"/></linearGradient><linearGradient id="w180" gradientUnits="userSpaceOnUse" x1="1228.5" y1="230.3" x2="1174.1" y2="296.4"><stop offset="0.00" stop-color="#fefeff"/><stop offset="0.04" stop-color="#ebf5ff"/><stop offset="0.10" stop-color="#d0e6ff"/><stop offset="0.18" stop-color="#b1d6ff"/><stop offset="0.28" stop-color="#8fc4ff"/><stop offset="0.40" stop-color="#6db2ff"/><stop offset="0.55" stop-color="#4a9fff"/><stop offset="0.70" stop-color="#2d90ff"/><stop offset="0.85" stop-color="#1483ff"/><stop offset="1.00" stop-color="#0079ff"/></linearGradient><linearGradient id="w181" gradientUnits="userSpaceOnUse" x1="1228.5" y1="230.3" x2="1173.5" y2="292.4"><stop offset="0.00" stop-color="#feffff"/><stop offset="0.04" stop-color="#ecf5ff"/><stop offset="0.10" stop-color="#d1e8ff"/><stop offset="0.18" stop-color="#b2d8ff"/><stop offset="0.28" stop-color="#91c7ff"/><stop offset="0.40" stop-color="#6eb6ff"/><stop offset="0.55" stop-color="#4ba4ff"/><stop offset="0.70" stop-color="#2e96ff"/><stop offset="0.85" stop-color="#1589ff"/><stop offset="1.00" stop-color="#007fff"/></linearGradient><linearGradient id="w182" gradientUnits="userSpaceOnUse" x1="1228.5" y1="230.3" x2="1172.8" y2="288.4"><stop offset="0.00" stop-color="#feffff"/><stop offset="0.04" stop-color="#ecf6ff"/><stop offset="0.10" stop-color="#d2eaff"/><stop offset="0.18" stop-color="#b4dbff"/><stop offset="0.28" stop-color="#92cbff"/><stop offset="0.40" stop-color="#70bbff"/><stop offset="0.55" stop-color="#4daaff"/><stop offset="0.70" stop-color="#2f9bff"/><stop offset="0.85" stop-color="#168fff"/><stop offset="1.00" stop-color="#0085ff"/></linearGradient><linearGradient id="w183" gradientUnits="userSpaceOnUse" x1="1228.5" y1="230.3" x2="1172.2" y2="284.4"><stop offset="0.00" stop-color="#feffff"/><stop offset="0.04" stop-color="#edf7ff"/><stop offset="0.10" stop-color="#d3ebff"/><stop offset="0.18" stop-color="#b5deff"/><stop offset="0.28" stop-color="#94cfff"/><stop offset="0.40" stop-color="#72bfff"/><stop offset="0.55" stop-color="#4eafff"/><stop offset="0.70" stop-color="#30a2ff"/><stop offset="0.85" stop-color="#1696ff"/><stop offset="1.00" stop-color="#008cff"/></linearGradient><linearGradient id="w184" gradientUnits="userSpaceOnUse" x1="1228.5" y1="230.3" x2="1171.6" y2="280.5"><stop offset="0.00" stop-color="#feffff"/><stop offset="0.04" stop-color="#edf8ff"/><stop offset="0.10" stop-color="#d5edff"/><stop offset="0.18" stop-color="#b7e1ff"/><stop offset="0.28" stop-color="#96d3ff"/><stop offset="0.40" stop-color="#74c4ff"/><stop offset="0.55" stop-color="#50b5ff"/><stop offset="0.70" stop-color="#31a8ff"/><stop offset="0.85" stop-color="#179dff"/><stop offset="1.00" stop-color="#0093ff"/></linearGradient><linearGradient id="w185" gradientUnits="userSpaceOnUse" x1="1228.5" y1="230.3" x2="1171.0" y2="276.8"><stop offset="0.00" stop-color="#feffff"/><stop offset="0.04" stop-color="#eef8ff"/><stop offset="0.10" stop-color="#d6efff"/><stop offset="0.18" stop-color="#b8e3ff"/><stop offset="0.28" stop-color="#98d6ff"/><stop offset="0.40" stop-color="#76c9ff"/><stop offset="0.55" stop-color="#51baff"/><stop offset="0.70" stop-color="#32aeff"/><stop offset="0.85" stop-color="#17a3ff"/><stop offset="1.00" stop-color="#009aff"/></linearGradient><linearGradient id="w186" gradientUnits="userSpaceOnUse" x1="1228.5" y1="230.3" x2="1170.5" y2="273.8"><stop offset="0.00" stop-color="#feffff"/><stop offset="0.04" stop-color="#eef9ff"/><stop offset="0.10" stop-color="#d6f0ff"/><stop offset="0.18" stop-color="#bae5ff"/><stop offset="0.28" stop-color="#99d9ff"/><stop offset="0.40" stop-color="#78cdff"/><stop offset="0.55" stop-color="#53bfff"/><stop offset="0.70" stop-color="#33b3ff"/><stop offset="0.85" stop-color="#18a9ff"/><stop offset="1.00" stop-color="#00a0ff"/></linearGradient><linearGradient id="w187" gradientUnits="userSpaceOnUse" x1="1228.5" y1="230.3" x2="1170.0" y2="271.2"><stop offset="0.00" stop-color="#feffff"/><stop offset="0.04" stop-color="#eef9ff"/><stop offset="0.10" stop-color="#d7f1ff"/><stop offset="0.18" stop-color="#bbe7ff"/><stop offset="0.28" stop-color="#9bdcff"/><stop offset="0.40" stop-color="#79d0ff"/><stop offset="0.55" stop-color="#54c3ff"/><stop offset="0.70" stop-color="#34b8ff"/><stop offset="0.85" stop-color="#18aeff"/><stop offset="1.00" stop-color="#00a6ff"/></linearGradient><linearGradient id="w188" gradientUnits="userSpaceOnUse" x1="1228.5" y1="230.3" x2="1169.6" y2="268.5"><stop offset="0.00" stop-color="#feffff"/><stop offset="0.04" stop-color="#effaff"/><stop offset="0.10" stop-color="#d8f2ff"/><stop offset="0.18" stop-color="#bce9ff"/><stop offset="0.28" stop-color="#9cdfff"/><stop offset="0.40" stop-color="#7ad4ff"/><stop offset="0.55" stop-color="#55c8ff"/><stop offset="0.70" stop-color="#35bdff"/><stop offset="0.85" stop-color="#19b4ff"/><stop offset="1.00" stop-color="#00acff"/></linearGradient><linearGradient id="w189" gradientUnits="userSpaceOnUse" x1="1228.5" y1="230.3" x2="1169.2" y2="265.9"><stop offset="0.00" stop-color="#feffff"/><stop offset="0.04" stop-color="#effaff"/><stop offset="0.10" stop-color="#d9f3ff"/><stop offset="0.18" stop-color="#bdebff"/><stop offset="0.28" stop-color="#9ee2ff"/><stop offset="0.40" stop-color="#7cd7ff"/><stop offset="0.55" stop-color="#57ccff"/><stop offset="0.70" stop-color="#36c2ff"/><stop offset="0.85" stop-color="#19baff"/><stop offset="1.00" stop-color="#00b2ff"/></linearGradient><linearGradient id="w190" gradientUnits="userSpaceOnUse" x1="1228.5" y1="230.3" x2="1168.8" y2="263.2"><stop offset="0.00" stop-color="#feffff"/><stop offset="0.04" stop-color="#effbff"/><stop offset="0.10" stop-color="#d9f5ff"/><stop offset="0.18" stop-color="#beedff"/><stop offset="0.28" stop-color="#9fe4ff"/><stop offset="0.40" stop-color="#7ddbff"/><stop offset="0.55" stop-color="#58d1ff"/><stop offset="0.70" stop-color="#37c8ff"/><stop offset="0.85" stop-color="#1ac0ff"/><stop offset="1.00" stop-color="#00b8ff"/></linearGradient><linearGradient id="w191" gradientUnits="userSpaceOnUse" x1="1228.5" y1="230.3" x2="1168.3" y2="260.5"><stop offset="0.00" stop-color="#feffff"/><stop offset="0.04" stop-color="#f0fbff"/><stop offset="0.10" stop-color="#daf6ff"/><stop offset="0.18" stop-color="#bfefff"/><stop offset="0.28" stop-color="#a0e7ff"/><stop offset="0.40" stop-color="#7fdfff"/><stop offset="0.55" stop-color="#59d6ff"/><stop offset="0.70" stop-color="#38cdff"/><stop offset="0.85" stop-color="#1bc6ff"/><stop offset="1.00" stop-color="#00bfff"/></linearGradient><linearGradient id="w192" gradientUnits="userSpaceOnUse" x1="1228.5" y1="230.3" x2="1167.9" y2="257.9"><stop offset="0.00" stop-color="#feffff"/><stop offset="0.04" stop-color="#f0fcff"/><stop offset="0.10" stop-color="#dbf7ff"/><stop offset="0.18" stop-color="#c1f1ff"/><stop offset="0.28" stop-color="#a2eaff"/><stop offset="0.40" stop-color="#81e3ff"/><stop offset="0.55" stop-color="#5bdbff"/><stop offset="0.70" stop-color="#39d3ff"/><stop offset="0.85" stop-color="#1bcdff"/><stop offset="1.00" stop-color="#00c6ff"/></linearGradient><linearGradient id="w193" gradientUnits="userSpaceOnUse" x1="1228.5" y1="230.3" x2="1167.5" y2="255.2"><stop offset="0.00" stop-color="#feffff"/><stop offset="0.04" stop-color="#f1fcff"/><stop offset="0.10" stop-color="#dcf8ff"/><stop offset="0.18" stop-color="#c2f3ff"/><stop offset="0.28" stop-color="#a3edff"/><stop offset="0.40" stop-color="#82e7ff"/><stop offset="0.55" stop-color="#5ce0ff"/><stop offset="0.70" stop-color="#3bd9ff"/><stop offset="0.85" stop-color="#1cd3ff"/><stop offset="1.00" stop-color="#00ceff"/></linearGradient><linearGradient id="w194" gradientUnits="userSpaceOnUse" x1="1228.5" y1="230.3" x2="1167.1" y2="253.2"><stop offset="0.00" stop-color="#feffff"/><stop offset="0.04" stop-color="#f1fdff"/><stop offset="0.10" stop-color="#dcf9ff"/><stop offset="0.18" stop-color="#c3f5ff"/><stop offset="0.28" stop-color="#a5f0ff"/><stop offset="0.40" stop-color="#83eaff"/><stop offset="0.55" stop-color="#5ee4ff"/><stop offset="0.70" stop-color="#3bdeff"/><stop offset="0.85" stop-color="#1cd9ff"/><stop offset="1.00" stop-color="#00d4ff"/></linearGradient><linearGradient id="w195" gradientUnits="userSpaceOnUse" x1="1228.5" y1="230.3" x2="1166.9" y2="251.9"><stop offset="0.00" stop-color="#feffff"/><stop offset="0.04" stop-color="#f1fdff"/><stop offset="0.10" stop-color="#ddfaff"/><stop offset="0.18" stop-color="#c3f6ff"/><stop offset="0.28" stop-color="#a5f1ff"/><stop offset="0.40" stop-color="#84ecff"/><stop offset="0.55" stop-color="#5ee6ff"/><stop offset="0.70" stop-color="#3ce1ff"/><stop offset="0.85" stop-color="#1ddcff"/><stop offset="1.00" stop-color="#00d8ff"/></linearGradient><linearGradient id="w196" gradientUnits="userSpaceOnUse" x1="1228.5" y1="230.3" x2="1166.7" y2="250.6"><stop offset="0.00" stop-color="#feffff"/><stop offset="0.04" stop-color="#f1fdff"/><stop offset="0.10" stop-color="#ddfaff"/><stop offset="0.18" stop-color="#c4f7ff"/><stop offset="0.28" stop-color="#a6f3ff"/><stop offset="0.40" stop-color="#85eeff"/><stop offset="0.55" stop-color="#5fe9ff"/><stop offset="0.70" stop-color="#3de4ff"/><stop offset="0.85" stop-color="#1de0ff"/><stop offset="1.00" stop-color="#00dcff"/></linearGradient><linearGradient id="w197" gradientUnits="userSpaceOnUse" x1="1228.5" y1="230.3" x2="1166.5" y2="249.3"><stop offset="0.00" stop-color="#feffff"/><stop offset="0.04" stop-color="#f1fdff"/><stop offset="0.10" stop-color="#defbff"/><stop offset="0.18" stop-color="#c5f8ff"/><stop offset="0.28" stop-color="#a7f4ff"/><stop offset="0.40" stop-color="#86f1ff"/><stop offset="0.55" stop-color="#60ecff"/><stop offset="0.70" stop-color="#3de8ff"/><stop offset="0.85" stop-color="#1de4ff"/><stop offset="1.00" stop-color="#00e0ff"/></linearGradient><linearGradient id="w198" gradientUnits="userSpaceOnUse" x1="1228.5" y1="230.3" x2="1166.3" y2="247.9"><stop offset="0.00" stop-color="#feffff"/><stop offset="0.04" stop-color="#f2feff"/><stop offset="0.10" stop-color="#defcff"/><stop offset="0.18" stop-color="#c5f9ff"/><stop offset="0.28" stop-color="#a8f6ff"/><stop offset="0.40" stop-color="#87f3ff"/><stop offset="0.55" stop-color="#61efff"/><stop offset="0.70" stop-color="#3eebff"/><stop offset="0.85" stop-color="#1ee8ff"/><stop offset="1.00" stop-color="#00e5ff"/></linearGradient><linearGradient id="w199" gradientUnits="userSpaceOnUse" x1="1228.5" y1="230.3" x2="1166.1" y2="246.6"><stop offset="0.00" stop-color="#feffff"/><stop offset="0.04" stop-color="#f2feff"/><stop offset="0.10" stop-color="#defcff"/><stop offset="0.18" stop-color="#c6faff"/><stop offset="0.28" stop-color="#a9f8ff"/><stop offset="0.40" stop-color="#88f5ff"/><stop offset="0.55" stop-color="#62f2ff"/><stop offset="0.70" stop-color="#3fefff"/><stop offset="0.85" stop-color="#1eecff"/><stop offset="1.00" stop-color="#00e9ff"/></linearGradient><linearGradient id="w200" gradientUnits="userSpaceOnUse" x1="1228.5" y1="230.3" x2="1165.9" y2="245.3"><stop offset="0.00" stop-color="#feffff"/><stop offset="0.04" stop-color="#f2feff"/><stop offset="0.10" stop-color="#dffdff"/><stop offset="0.18" stop-color="#c6fbff"/><stop offset="0.28" stop-color="#a9f9ff"/><stop offset="0.40" stop-color="#89f7ff"/><stop offset="0.55" stop-color="#63f5ff"/><stop offset="0.70" stop-color="#3ff2ff"/><stop offset="0.85" stop-color="#1ef0ff"/><stop offset="1.00" stop-color="#00eeff"/></linearGradient><linearGradient id="w201" gradientUnits="userSpaceOnUse" x1="1228.5" y1="230.3" x2="1165.6" y2="244.0"><stop offset="0.00" stop-color="#feffff"/><stop offset="0.04" stop-color="#f2feff"/><stop offset="0.10" stop-color="#dffeff"/><stop offset="0.18" stop-color="#c7fcff"/><stop offset="0.28" stop-color="#aafbff"/><stop offset="0.40" stop-color="#8af9ff"/><stop offset="0.55" stop-color="#63f8ff"/><stop offset="0.70" stop-color="#40f6ff"/><stop offset="0.85" stop-color="#1ff4ff"/><stop offset="1.00" stop-color="#00f3ff"/></linearGradient><linearGradient id="w202" gradientUnits="userSpaceOnUse" x1="1228.5" y1="230.3" x2="1165.4" y2="242.6"><stop offset="0.00" stop-color="#feffff"/><stop offset="0.04" stop-color="#f2ffff"/><stop offset="0.10" stop-color="#e0feff"/><stop offset="0.18" stop-color="#c8fdff"/><stop offset="0.28" stop-color="#abfdff"/><stop offset="0.40" stop-color="#8bfcff"/><stop offset="0.55" stop-color="#64fbff"/><stop offset="0.70" stop-color="#41faff"/><stop offset="0.85" stop-color="#1ff9ff"/><stop offset="1.00" stop-color="#00f8ff"/></linearGradient><linearGradient id="w203" gradientUnits="userSpaceOnUse" x1="1228.5" y1="230.3" x2="1165.2" y2="241.0"><stop offset="0.00" stop-color="#feffff"/><stop offset="0.04" stop-color="#f2ffff"/><stop offset="0.10" stop-color="#e0ffff"/><stop offset="0.18" stop-color="#c8ffff"/><stop offset="0.28" stop-color="#acffff"/><stop offset="0.40" stop-color="#8cffff"/><stop offset="0.55" stop-color="#65ffff"/><stop offset="0.70" stop-color="#42ffff"/><stop offset="0.85" stop-color="#20feff"/><stop offset="1.00" stop-color="#00feff"/></linearGradient><linearGradient id="w204" gradientUnits="userSpaceOnUse" x1="1228.5" y1="230.3" x2="1164.9" y2="239.3"><stop offset="0.00" stop-color="#feffff"/><stop offset="0.04" stop-color="#f2ffff"/><stop offset="0.10" stop-color="#e0fffe"/><stop offset="0.18" stop-color="#c8fffe"/><stop offset="0.28" stop-color="#acfffd"/><stop offset="0.40" stop-color="#8bfffc"/><stop offset="0.55" stop-color="#65fffb"/><stop offset="0.70" stop-color="#41fffb"/><stop offset="0.85" stop-color="#20fffa"/><stop offset="1.00" stop-color="#00fff9"/></linearGradient><linearGradient id="w205" gradientUnits="userSpaceOnUse" x1="1228.5" y1="230.3" x2="1164.7" y2="238.0"><stop offset="0.00" stop-color="#feffff"/><stop offset="0.04" stop-color="#f2fffe"/><stop offset="0.10" stop-color="#e0fffe"/><stop offset="0.18" stop-color="#c8fffd"/><stop offset="0.28" stop-color="#acfffb"/><stop offset="0.40" stop-color="#8bfffa"/><stop offset="0.55" stop-color="#65fff8"/><stop offset="0.70" stop-color="#41fff7"/><stop offset="0.85" stop-color="#20fff5"/><stop offset="1.00" stop-color="#00fff4"/></linearGradient><linearGradient id="w206" gradientUnits="userSpaceOnUse" x1="1228.5" y1="230.3" x2="1164.5" y2="236.7"><stop offset="0.00" stop-color="#feffff"/><stop offset="0.04" stop-color="#f2fffe"/><stop offset="0.10" stop-color="#e0fffd"/><stop offset="0.18" stop-color="#c8fffc"/><stop offset="0.28" stop-color="#abfffa"/><stop offset="0.40" stop-color="#8bfff8"/><stop offset="0.55" stop-color="#65fff5"/><stop offset="0.70" stop-color="#41fff3"/><stop offset="0.85" stop-color="#1ffff1"/><stop offset="1.00" stop-color="#00ffef"/></linearGradient><linearGradient id="w207" gradientUnits="userSpaceOnUse" x1="1228.5" y1="230.3" x2="1164.2" y2="235.3"><stop offset="0.00" stop-color="#feffff"/><stop offset="0.04" stop-color="#f2fffe"/><stop offset="0.10" stop-color="#e0fffc"/><stop offset="0.18" stop-color="#c8fffa"/><stop offset="0.28" stop-color="#abfff8"/><stop offset="0.40" stop-color="#8afff5"/><stop offset="0.55" stop-color="#64fff2"/><stop offset="0.70" stop-color="#41ffef"/><stop offset="0.85" stop-color="#1fffec"/><stop offset="1.00" stop-color="#00ffea"/></linearGradient><linearGradient id="w208" gradientUnits="userSpaceOnUse" x1="1228.5" y1="230.3" x2="1164.0" y2="234.0"><stop offset="0.00" stop-color="#feffff"/><stop offset="0.04" stop-color="#f2fffe"/><stop offset="0.10" stop-color="#dffffc"/><stop offset="0.18" stop-color="#c7fff9"/><stop offset="0.28" stop-color="#abfff6"/><stop offset="0.40" stop-color="#8afff3"/><stop offset="0.55" stop-color="#64ffef"/><stop offset="0.70" stop-color="#40ffeb"/><stop offset="0.85" stop-color="#1fffe8"/><stop offset="1.00" stop-color="#00ffe5"/></linearGradient><linearGradient id="w209" gradientUnits="userSpaceOnUse" x1="1228.5" y1="230.3" x2="1163.8" y2="232.7"><stop offset="0.00" stop-color="#feffff"/><stop offset="0.04" stop-color="#f2fffd"/><stop offset="0.10" stop-color="#dffffb"/><stop offset="0.18" stop-color="#c7fff8"/><stop offset="0.28" stop-color="#aafff5"/><stop offset="0.40" stop-color="#8afff1"/><stop offset="0.55" stop-color="#64ffec"/><stop offset="0.70" stop-color="#40ffe8"/><stop offset="0.85" stop-color="#1fffe4"/><stop offset="1.00" stop-color="#00ffe0"/></linearGradient><linearGradient id="w210" gradientUnits="userSpaceOnUse" x1="1228.5" y1="230.3" x2="1163.6" y2="231.3"><stop offset="0.00" stop-color="#feffff"/><stop offset="0.04" stop-color="#f2fffd"/><stop offset="0.10" stop-color="#dffffb"/><stop offset="0.18" stop-color="#c7fff7"/><stop offset="0.28" stop-color="#aafff3"/><stop offset="0.40" stop-color="#89ffee"/><stop offset="0.55" stop-color="#63ffe9"/><stop offset="0.70" stop-color="#40ffe4"/><stop offset="0.85" stop-color="#1fffdf"/><stop offset="1.00" stop-color="#00ffdb"/></linearGradient><linearGradient id="w211" gradientUnits="userSpaceOnUse" x1="1228.5" y1="230.3" x2="1163.4" y2="230.0"><stop offset="0.00" stop-color="#feffff"/><stop offset="0.04" stop-color="#f2fffd"/><stop offset="0.10" stop-color="#dffffa"/><stop offset="0.18" stop-color="#c7fff6"/><stop offset="0.28" stop-color="#aafff1"/><stop offset="0.40" stop-color="#89ffec"/><stop offset="0.55" stop-color="#63ffe6"/><stop offset="0.70" stop-color="#40ffe0"/><stop offset="0.85" stop-color="#1fffdb"/><stop offset="1.00" stop-color="#00ffd6"/></linearGradient><linearGradient id="w212" gradientUnits="userSpaceOnUse" x1="1228.5" y1="230.3" x2="1163.2" y2="228.7"><stop offset="0.00" stop-color="#feffff"/><stop offset="0.04" stop-color="#f2fffd"/><stop offset="0.10" stop-color="#dffff9"/><stop offset="0.18" stop-color="#c6fff5"/><stop offset="0.28" stop-color="#a9fff0"/><stop offset="0.40" stop-color="#89ffea"/><stop offset="0.55" stop-color="#63ffe3"/><stop offset="0.70" stop-color="#3fffdd"/><stop offset="0.85" stop-color="#1fffd7"/><stop offset="1.00" stop-color="#00ffd1"/></linearGradient><linearGradient id="w213" gradientUnits="userSpaceOnUse" x1="1228.5" y1="230.3" x2="1163.0" y2="227.4"><stop offset="0.00" stop-color="#feffff"/><stop offset="0.04" stop-color="#f2fffc"/><stop offset="0.10" stop-color="#dffff9"/><stop offset="0.18" stop-color="#c6fff4"/><stop offset="0.28" stop-color="#a9ffee"/><stop offset="0.40" stop-color="#88ffe8"/><stop offset="0.55" stop-color="#62ffe0"/><stop offset="0.70" stop-color="#3fffd9"/><stop offset="0.85" stop-color="#1effd3"/><stop offset="1.00" stop-color="#00ffcd"/></linearGradient><linearGradient id="w214" gradientUnits="userSpaceOnUse" x1="1228.5" y1="230.3" x2="1162.7" y2="226.0"><stop offset="0.00" stop-color="#feffff"/><stop offset="0.04" stop-color="#f2fffc"/><stop offset="0.10" stop-color="#dffff8"/><stop offset="0.18" stop-color="#c6fff3"/><stop offset="0.28" stop-color="#a9ffec"/><stop offset="0.40" stop-color="#88ffe5"/><stop offset="0.55" stop-color="#62ffdd"/><stop offset="0.70" stop-color="#3fffd6"/><stop offset="0.85" stop-color="#1effcf"/><stop offset="1.00" stop-color="#00ffc8"/></linearGradient><linearGradient id="w215" gradientUnits="userSpaceOnUse" x1="1228.5" y1="230.3" x2="1162.5" y2="224.7"><stop offset="0.00" stop-color="#feffff"/><stop offset="0.04" stop-color="#f2fffc"/><stop offset="0.10" stop-color="#defff7"/><stop offset="0.18" stop-color="#c6fff2"/><stop offset="0.28" stop-color="#a9ffeb"/><stop offset="0.40" stop-color="#88ffe3"/><stop offset="0.55" stop-color="#62ffda"/><stop offset="0.70" stop-color="#3fffd2"/><stop offset="0.85" stop-color="#1effca"/><stop offset="1.00" stop-color="#00ffc3"/></linearGradient><linearGradient id="w216" gradientUnits="userSpaceOnUse" x1="1228.5" y1="230.3" x2="1162.3" y2="223.4"><stop offset="0.00" stop-color="#feffff"/><stop offset="0.04" stop-color="#f2fffc"/><stop offset="0.10" stop-color="#defff7"/><stop offset="0.18" stop-color="#c6fff1"/><stop offset="0.28" stop-color="#a8ffe9"/><stop offset="0.40" stop-color="#87ffe1"/><stop offset="0.55" stop-color="#61ffd7"/><stop offset="0.70" stop-color="#3effce"/><stop offset="0.85" stop-color="#1effc6"/><stop offset="1.00" stop-color="#00ffbf"/></linearGradient><linearGradient id="w217" gradientUnits="userSpaceOnUse" x1="1228.5" y1="230.3" x2="1162.1" y2="222.1"><stop offset="0.00" stop-color="#feffff"/><stop offset="0.04" stop-color="#f2fffb"/><stop offset="0.10" stop-color="#defff6"/><stop offset="0.18" stop-color="#c5ffef"/><stop offset="0.28" stop-color="#a8ffe8"/><stop offset="0.40" stop-color="#87ffdf"/><stop offset="0.55" stop-color="#61ffd4"/><stop offset="0.70" stop-color="#3effcb"/><stop offset="0.85" stop-color="#1effc2"/><stop offset="1.00" stop-color="#00ffba"/></linearGradient><linearGradient id="w218" gradientUnits="userSpaceOnUse" x1="1228.5" y1="230.3" x2="1161.9" y2="220.7"><stop offset="0.00" stop-color="#feffff"/><stop offset="0.04" stop-color="#f1fffb"/><stop offset="0.10" stop-color="#defff6"/><stop offset="0.18" stop-color="#c5ffee"/><stop offset="0.28" stop-color="#a8ffe6"/><stop offset="0.40" stop-color="#87ffdc"/><stop offset="0.55" stop-color="#61ffd2"/><stop offset="0.70" stop-color="#3effc8"/><stop offset="0.85" stop-color="#1effbe"/><stop offset="1.00" stop-color="#00ffb6"/></linearGradient><linearGradient id="w219" gradientUnits="userSpaceOnUse" x1="1228.5" y1="230.3" x2="1161.7" y2="219.4"><stop offset="0.00" stop-color="#feffff"/><stop offset="0.04" stop-color="#f1fffb"/><stop offset="0.10" stop-color="#defff5"/><stop offset="0.18" stop-color="#c5ffed"/><stop offset="0.28" stop-color="#a7ffe4"/><stop offset="0.40" stop-color="#86ffda"/><stop offset="0.55" stop-color="#60ffcf"/><stop offset="0.70" stop-color="#3effc4"/><stop offset="0.85" stop-color="#1effba"/><stop offset="1.00" stop-color="#00ffb1"/></linearGradient><linearGradient id="w220" gradientUnits="userSpaceOnUse" x1="1228.5" y1="230.3" x2="1161.5" y2="218.1"><stop offset="0.00" stop-color="#feffff"/><stop offset="0.04" stop-color="#f1fffb"/><stop offset="0.10" stop-color="#defff4"/><stop offset="0.18" stop-color="#c5ffec"/><stop offset="0.28" stop-color="#a7ffe3"/><stop offset="0.40" stop-color="#86ffd8"/><stop offset="0.55" stop-color="#60ffcc"/><stop offset="0.70" stop-color="#3dffc1"/><stop offset="0.85" stop-color="#1dffb6"/><stop offset="1.00" stop-color="#00ffad"/></linearGradient><linearGradient id="w221" gradientUnits="userSpaceOnUse" x1="1228.5" y1="230.3" x2="1161.2" y2="216.8"><stop offset="0.00" stop-color="#feffff"/><stop offset="0.04" stop-color="#f1fffa"/><stop offset="0.10" stop-color="#defff4"/><stop offset="0.18" stop-color="#c4ffeb"/><stop offset="0.28" stop-color="#a7ffe1"/><stop offset="0.40" stop-color="#86ffd6"/><stop offset="0.55" stop-color="#60ffc9"/><stop offset="0.70" stop-color="#3dffbd"/><stop offset="0.85" stop-color="#1dffb2"/><stop offset="1.00" stop-color="#00ffa9"/></linearGradient><linearGradient id="w222" gradientUnits="userSpaceOnUse" x1="1228.5" y1="230.3" x2="1161.0" y2="215.4"><stop offset="0.00" stop-color="#feffff"/><stop offset="0.04" stop-color="#f1fffa"/><stop offset="0.10" stop-color="#ddfff3"/><stop offset="0.18" stop-color="#c4ffea"/><stop offset="0.28" stop-color="#a7ffe0"/><stop offset="0.40" stop-color="#86ffd4"/><stop offset="0.55" stop-color="#60ffc6"/><stop offset="0.70" stop-color="#3dffba"/><stop offset="0.85" stop-color="#1dffaf"/><stop offset="1.00" stop-color="#00ffa4"/></linearGradient><linearGradient id="w223" gradientUnits="userSpaceOnUse" x1="1228.5" y1="230.3" x2="1160.8" y2="214.1"><stop offset="0.00" stop-color="#feffff"/><stop offset="0.04" stop-color="#f1fffa"/><stop offset="0.10" stop-color="#ddfff2"/><stop offset="0.18" stop-color="#c4ffe9"/><stop offset="0.28" stop-color="#a6ffde"/><stop offset="0.40" stop-color="#85ffd2"/><stop offset="0.55" stop-color="#5fffc3"/><stop offset="0.70" stop-color="#3dffb7"/><stop offset="0.85" stop-color="#1dffab"/><stop offset="1.00" stop-color="#00ffa0"/></linearGradient><linearGradient id="w224" gradientUnits="userSpaceOnUse" x1="1228.5" y1="230.3" x2="1160.6" y2="212.8"><stop offset="0.00" stop-color="#feffff"/><stop offset="0.04" stop-color="#f1fffa"/><stop offset="0.10" stop-color="#ddfff2"/><stop offset="0.18" stop-color="#c4ffe8"/><stop offset="0.28" stop-color="#a6ffdc"/><stop offset="0.40" stop-color="#85ffcf"/><stop offset="0.55" stop-color="#5fffc1"/><stop offset="0.70" stop-color="#3dffb3"/><stop offset="0.85" stop-color="#1dffa7"/><stop offset="1.00" stop-color="#00ff9c"/></linearGradient><linearGradient id="w225" gradientUnits="userSpaceOnUse" x1="1228.5" y1="230.3" x2="1160.4" y2="211.4"><stop offset="0.00" stop-color="#feffff"/><stop offset="0.04" stop-color="#f1fff9"/><stop offset="0.10" stop-color="#ddfff1"/><stop offset="0.18" stop-color="#c4ffe7"/><stop offset="0.28" stop-color="#a6ffdb"/><stop offset="0.40" stop-color="#85ffcd"/><stop offset="0.55" stop-color="#5fffbe"/><stop offset="0.70" stop-color="#3cffb0"/><stop offset="0.85" stop-color="#1dffa3"/><stop offset="1.00" stop-color="#00ff97"/></linearGradient><linearGradient id="w226" gradientUnits="userSpaceOnUse" x1="1228.5" y1="230.3" x2="1160.2" y2="210.1"><stop offset="0.00" stop-color="#feffff"/><stop offset="0.04" stop-color="#f1fff9"/><stop offset="0.10" stop-color="#ddfff1"/><stop offset="0.18" stop-color="#c3ffe6"/><stop offset="0.28" stop-color="#a5ffd9"/><stop offset="0.40" stop-color="#84ffcb"/><stop offset="0.55" stop-color="#5effbb"/><stop offset="0.70" stop-color="#3cffad"/><stop offset="0.85" stop-color="#1dff9f"/><stop offset="1.00" stop-color="#00ff93"/></linearGradient><linearGradient id="w227" gradientUnits="userSpaceOnUse" x1="1228.5" y1="230.3" x2="1159.9" y2="208.8"><stop offset="0.00" stop-color="#feffff"/><stop offset="0.04" stop-color="#f1fff9"/><stop offset="0.10" stop-color="#ddfff0"/><stop offset="0.18" stop-color="#c3ffe5"/><stop offset="0.28" stop-color="#a5ffd8"/><stop offset="0.40" stop-color="#84ffc9"/><stop offset="0.55" stop-color="#5effb8"/><stop offset="0.70" stop-color="#3cffa9"/><stop offset="0.85" stop-color="#1dff9c"/><stop offset="1.00" stop-color="#00ff8f"/></linearGradient><linearGradient id="w228" gradientUnits="userSpaceOnUse" x1="1228.5" y1="230.3" x2="1159.7" y2="207.5"><stop offset="0.00" stop-color="#feffff"/><stop offset="0.04" stop-color="#f1fff9"/><stop offset="0.10" stop-color="#ddffef"/><stop offset="0.18" stop-color="#c3ffe4"/><stop offset="0.28" stop-color="#a5ffd6"/><stop offset="0.40" stop-color="#84ffc7"/><stop offset="0.55" stop-color="#5effb6"/><stop offset="0.70" stop-color="#3cffa6"/><stop offset="0.85" stop-color="#1cff98"/><stop offset="1.00" stop-color="#00ff8b"/></linearGradient><linearGradient id="w229" gradientUnits="userSpaceOnUse" x1="1228.5" y1="230.3" x2="1159.5" y2="206.1"><stop offset="0.00" stop-color="#feffff"/><stop offset="0.04" stop-color="#f1fff8"/><stop offset="0.10" stop-color="#dcffef"/><stop offset="0.18" stop-color="#c3ffe3"/><stop offset="0.28" stop-color="#a5ffd5"/><stop offset="0.40" stop-color="#83ffc5"/><stop offset="0.55" stop-color="#5effb3"/><stop offset="0.70" stop-color="#3bffa3"/><stop offset="0.85" stop-color="#1cff94"/><stop offset="1.00" stop-color="#00ff87"/></linearGradient><linearGradient id="w230" gradientUnits="userSpaceOnUse" x1="1228.5" y1="230.3" x2="1159.2" y2="204.1"><stop offset="0.00" stop-color="#feffff"/><stop offset="0.04" stop-color="#f1fff8"/><stop offset="0.10" stop-color="#dcffee"/><stop offset="0.18" stop-color="#c2ffe1"/><stop offset="0.28" stop-color="#a4ffd2"/><stop offset="0.40" stop-color="#83ffc2"/><stop offset="0.55" stop-color="#5dffaf"/><stop offset="0.70" stop-color="#3bff9e"/><stop offset="0.85" stop-color="#1cff8f"/><stop offset="1.00" stop-color="#00ff81"/></linearGradient><linearGradient id="w231" gradientUnits="userSpaceOnUse" x1="1228.5" y1="230.3" x2="1158.8" y2="201.5"><stop offset="0.00" stop-color="#feffff"/><stop offset="0.04" stop-color="#f1fff7"/><stop offset="0.10" stop-color="#dcffed"/><stop offset="0.18" stop-color="#c2ffdf"/><stop offset="0.28" stop-color="#a4ffcf"/><stop offset="0.40" stop-color="#82ffbe"/><stop offset="0.55" stop-color="#5dffaa"/><stop offset="0.70" stop-color="#3bff98"/><stop offset="0.85" stop-color="#1cff88"/><stop offset="1.00" stop-color="#00ff79"/></linearGradient><linearGradient id="w232" gradientUnits="userSpaceOnUse" x1="1228.5" y1="230.3" x2="1158.3" y2="198.8"><stop offset="0.00" stop-color="#feffff"/><stop offset="0.04" stop-color="#f0fff7"/><stop offset="0.10" stop-color="#dcffeb"/><stop offset="0.18" stop-color="#c1ffdd"/><stop offset="0.28" stop-color="#a3ffcc"/><stop offset="0.40" stop-color="#82ffba"/><stop offset="0.55" stop-color="#5cffa5"/><stop offset="0.70" stop-color="#3aff92"/><stop offset="0.85" stop-color="#1cff81"/><stop offset="1.00" stop-color="#00ff72"/></linearGradient><linearGradient id="w233" gradientUnits="userSpaceOnUse" x1="1228.5" y1="230.3" x2="1157.9" y2="196.2"><stop offset="0.00" stop-color="#feffff"/><stop offset="0.04" stop-color="#f0fff6"/><stop offset="0.10" stop-color="#dbffea"/><stop offset="0.18" stop-color="#c1ffdb"/><stop offset="0.28" stop-color="#a3ffc9"/><stop offset="0.40" stop-color="#81ffb5"/><stop offset="0.55" stop-color="#5cff9f"/><stop offset="0.70" stop-color="#3aff8c"/><stop offset="0.85" stop-color="#1bff7a"/><stop offset="1.00" stop-color="#00ff6a"/></linearGradient><linearGradient id="w234" gradientUnits="userSpaceOnUse" x1="1228.5" y1="230.3" x2="1157.5" y2="193.5"><stop offset="0.00" stop-color="#feffff"/><stop offset="0.04" stop-color="#f0fff6"/><stop offset="0.10" stop-color="#dbffe9"/><stop offset="0.18" stop-color="#c1ffd9"/><stop offset="0.28" stop-color="#a2ffc6"/><stop offset="0.40" stop-color="#81ffb1"/><stop offset="0.55" stop-color="#5bff9a"/><stop offset="0.70" stop-color="#39ff86"/><stop offset="0.85" stop-color="#1bff73"/><stop offset="1.00" stop-color="#00ff63"/></linearGradient><linearGradient id="w235" gradientUnits="userSpaceOnUse" x1="1228.5" y1="230.3" x2="1157.0" y2="190.9"><stop offset="0.00" stop-color="#feffff"/><stop offset="0.04" stop-color="#f0fff5"/><stop offset="0.10" stop-color="#dbffe8"/><stop offset="0.18" stop-color="#c0ffd7"/><stop offset="0.28" stop-color="#a1ffc3"/><stop offset="0.40" stop-color="#80ffad"/><stop offset="0.55" stop-color="#5aff95"/><stop offset="0.70" stop-color="#39ff80"/><stop offset="0.85" stop-color="#1bff6d"/><stop offset="1.00" stop-color="#00ff5b"/></linearGradient><linearGradient id="w236" gradientUnits="userSpaceOnUse" x1="1228.5" y1="230.3" x2="1156.6" y2="188.2"><stop offset="0.00" stop-color="#fefffe"/><stop offset="0.04" stop-color="#f0fff5"/><stop offset="0.10" stop-color="#daffe7"/><stop offset="0.18" stop-color="#c0ffd5"/><stop offset="0.28" stop-color="#a1ffc0"/><stop offset="0.40" stop-color="#7fffaa"/><stop offset="0.55" stop-color="#5aff90"/><stop offset="0.70" stop-color="#39ff7a"/><stop offset="0.85" stop-color="#1bff66"/><stop offset="1.00" stop-color="#00ff54"/></linearGradient><linearGradient id="w237" gradientUnits="userSpaceOnUse" x1="1228.5" y1="230.3" x2="1156.2" y2="185.6"><stop offset="0.00" stop-color="#fefffe"/><stop offset="0.04" stop-color="#f0fff4"/><stop offset="0.10" stop-color="#daffe5"/><stop offset="0.18" stop-color="#bfffd3"/><stop offset="0.28" stop-color="#a0ffbd"/><stop offset="0.40" stop-color="#7fffa6"/><stop offset="0.55" stop-color="#59ff8b"/><stop offset="0.70" stop-color="#38ff74"/><stop offset="0.85" stop-color="#1bff60"/><stop offset="1.00" stop-color="#00ff4d"/></linearGradient><linearGradient id="w238" gradientUnits="userSpaceOnUse" x1="1228.5" y1="230.3" x2="1155.8" y2="182.9"><stop offset="0.00" stop-color="#fefffe"/><stop offset="0.04" stop-color="#f0fff4"/><stop offset="0.10" stop-color="#daffe4"/><stop offset="0.18" stop-color="#bfffd1"/><stop offset="0.28" stop-color="#a0ffba"/><stop offset="0.40" stop-color="#7effa2"/><stop offset="0.55" stop-color="#59ff87"/><stop offset="0.70" stop-color="#38ff6f"/><stop offset="0.85" stop-color="#1aff59"/><stop offset="1.00" stop-color="#00ff46"/></linearGradient><linearGradient id="w239" gradientUnits="userSpaceOnUse" x1="1228.5" y1="230.3" x2="1155.3" y2="180.3"><stop offset="0.00" stop-color="#fefffe"/><stop offset="0.04" stop-color="#f0fff3"/><stop offset="0.10" stop-color="#daffe3"/><stop offset="0.18" stop-color="#beffcf"/><stop offset="0.28" stop-color="#9fffb7"/><stop offset="0.40" stop-color="#7eff9e"/><stop offset="0.55" stop-color="#58ff82"/><stop offset="0.70" stop-color="#37ff69"/><stop offset="0.85" stop-color="#1aff53"/><stop offset="1.00" stop-color="#00ff3f"/></linearGradient><linearGradient id="w240" gradientUnits="userSpaceOnUse" x1="1228.5" y1="230.3" x2="1154.9" y2="177.6"><stop offset="0.00" stop-color="#fefffe"/><stop offset="0.04" stop-color="#effff3"/><stop offset="0.10" stop-color="#d9ffe2"/><stop offset="0.18" stop-color="#beffcd"/><stop offset="0.28" stop-color="#9fffb4"/><stop offset="0.40" stop-color="#7dff9a"/><stop offset="0.55" stop-color="#58ff7d"/><stop offset="0.70" stop-color="#37ff64"/><stop offset="0.85" stop-color="#1aff4d"/><stop offset="1.00" stop-color="#00ff39"/></linearGradient><linearGradient id="w241" gradientUnits="userSpaceOnUse" x1="1228.5" y1="230.3" x2="1154.5" y2="174.9"><stop offset="0.00" stop-color="#fefffe"/><stop offset="0.04" stop-color="#effff2"/><stop offset="0.10" stop-color="#d9ffe1"/><stop offset="0.18" stop-color="#beffcb"/><stop offset="0.28" stop-color="#9effb1"/><stop offset="0.40" stop-color="#7dff96"/><stop offset="0.55" stop-color="#57ff78"/><stop offset="0.70" stop-color="#37ff5e"/><stop offset="0.85" stop-color="#1aff47"/><stop offset="1.00" stop-color="#00ff32"/></linearGradient><linearGradient id="w242" gradientUnits="userSpaceOnUse" x1="1228.5" y1="230.3" x2="1154.0" y2="172.3"><stop offset="0.00" stop-color="#fefffe"/><stop offset="0.04" stop-color="#effff2"/><stop offset="0.10" stop-color="#d9ffdf"/><stop offset="0.18" stop-color="#bdffc9"/><stop offset="0.28" stop-color="#9effaf"/><stop offset="0.40" stop-color="#7cff93"/><stop offset="0.55" stop-color="#57ff74"/><stop offset="0.70" stop-color="#36ff59"/><stop offset="0.85" stop-color="#1aff41"/><stop offset="1.00" stop-color="#00ff2c"/></linearGradient><linearGradient id="w243" gradientUnits="userSpaceOnUse" x1="1228.5" y1="230.3" x2="1153.6" y2="169.6"><stop offset="0.00" stop-color="#fefffe"/><stop offset="0.04" stop-color="#effff1"/><stop offset="0.10" stop-color="#d9ffde"/><stop offset="0.18" stop-color="#bdffc7"/><stop offset="0.28" stop-color="#9dffac"/><stop offset="0.40" stop-color="#7cff8f"/><stop offset="0.55" stop-color="#56ff6f"/><stop offset="0.70" stop-color="#36ff53"/><stop offset="0.85" stop-color="#19ff3b"/><stop offset="1.00" stop-color="#00ff25"/></linearGradient><linearGradient id="w244" gradientUnits="userSpaceOnUse" x1="1228.5" y1="230.3" x2="1153.2" y2="167.0"><stop offset="0.00" stop-color="#fefffe"/><stop offset="0.04" stop-color="#effff1"/><stop offset="0.10" stop-color="#d8ffdd"/><stop offset="0.18" stop-color="#bcffc5"/><stop offset="0.28" stop-color="#9dffa9"/><stop offset="0.40" stop-color="#7bff8b"/><stop offset="0.55" stop-color="#56ff6b"/><stop offset="0.70" stop-color="#36ff4e"/><stop offset="0.85" stop-color="#19ff35"/><stop offset="1.00" stop-color="#00ff1f"/></linearGradient><linearGradient id="w245" gradientUnits="userSpaceOnUse" x1="1228.5" y1="230.3" x2="1152.8" y2="164.3"><stop offset="0.00" stop-color="#fefffe"/><stop offset="0.04" stop-color="#effff0"/><stop offset="0.10" stop-color="#d8ffdc"/><stop offset="0.18" stop-color="#bcffc3"/><stop offset="0.28" stop-color="#9cffa6"/><stop offset="0.40" stop-color="#7aff87"/><stop offset="0.55" stop-color="#55ff66"/><stop offset="0.70" stop-color="#35ff49"/><stop offset="0.85" stop-color="#19ff30"/><stop offset="1.00" stop-color="#00ff19"/></linearGradient><linearGradient id="w246" gradientUnits="userSpaceOnUse" x1="1228.5" y1="230.3" x2="1152.3" y2="161.7"><stop offset="0.00" stop-color="#fefffe"/><stop offset="0.04" stop-color="#effff0"/><stop offset="0.10" stop-color="#d8ffdb"/><stop offset="0.18" stop-color="#bcffc1"/><stop offset="0.28" stop-color="#9cffa3"/><stop offset="0.40" stop-color="#7aff84"/><stop offset="0.55" stop-color="#55ff62"/><stop offset="0.70" stop-color="#35ff44"/><stop offset="0.85" stop-color="#19ff2a"/><stop offset="1.00" stop-color="#00ff13"/></linearGradient><linearGradient id="w247" gradientUnits="userSpaceOnUse" x1="1228.5" y1="230.3" x2="1151.9" y2="159.0"><stop offset="0.00" stop-color="#fefffe"/><stop offset="0.04" stop-color="#efffef"/><stop offset="0.10" stop-color="#d7ffda"/><stop offset="0.18" stop-color="#bbffbf"/><stop offset="0.28" stop-color="#9bffa0"/><stop offset="0.40" stop-color="#79ff80"/><stop offset="0.55" stop-color="#55ff5d"/><stop offset="0.70" stop-color="#35ff3f"/><stop offset="0.85" stop-color="#19ff24"/><stop offset="1.00" stop-color="#00ff0d"/></linearGradient><linearGradient id="w248" gradientUnits="userSpaceOnUse" x1="1228.5" y1="230.3" x2="1151.5" y2="156.4"><stop offset="0.00" stop-color="#fefffe"/><stop offset="0.04" stop-color="#eeffef"/><stop offset="0.10" stop-color="#d7ffd8"/><stop offset="0.18" stop-color="#bbffbd"/><stop offset="0.28" stop-color="#9bff9e"/><stop offset="0.40" stop-color="#79ff7d"/><stop offset="0.55" stop-color="#54ff59"/><stop offset="0.70" stop-color="#34ff3a"/><stop offset="0.85" stop-color="#18ff1f"/><stop offset="1.00" stop-color="#00ff07"/></linearGradient><linearGradient id="w249" gradientUnits="userSpaceOnUse" x1="1228.5" y1="230.3" x2="1151.1" y2="154.0"><stop offset="0.00" stop-color="#fefffe"/><stop offset="0.04" stop-color="#eeffef"/><stop offset="0.10" stop-color="#d7ffd7"/><stop offset="0.18" stop-color="#baffbb"/><stop offset="0.28" stop-color="#9aff9b"/><stop offset="0.40" stop-color="#78ff7a"/><stop offset="0.55" stop-color="#54ff55"/><stop offset="0.70" stop-color="#34ff36"/><stop offset="0.85" stop-color="#18ff1a"/><stop offset="1.00" stop-color="#00ff02"/></linearGradient><linearGradient id="w250" gradientUnits="userSpaceOnUse" x1="1228.5" y1="230.3" x2="1497.8" y2="185.5"><stop offset="0.00" stop-color="#fffcfc"/><stop offset="0.04" stop-color="#ffd1d1"/><stop offset="0.10" stop-color="#ffa1a1"/><stop offset="0.18" stop-color="#ff7776"/><stop offset="0.28" stop-color="#ff5454"/><stop offset="0.40" stop-color="#ff3939"/><stop offset="0.55" stop-color="#ff2222"/><stop offset="0.70" stop-color="#ff1313"/><stop offset="0.85" stop-color="#ff0808"/><stop offset="1.00" stop-color="#ff0000"/></linearGradient><linearGradient id="w251" gradientUnits="userSpaceOnUse" x1="1228.5" y1="230.3" x2="1204.6" y2="484.8"><stop offset="0.00" stop-color="#fdfdff"/><stop offset="0.04" stop-color="#d5d5ff"/><stop offset="0.10" stop-color="#a8a8ff"/><stop offset="0.18" stop-color="#7e7eff"/><stop offset="0.28" stop-color="#5b5bff"/><stop offset="0.40" stop-color="#3e3eff"/><stop offset="0.55" stop-color="#2626ff"/><stop offset="0.70" stop-color="#1515ff"/><stop offset="0.85" stop-color="#0909ff"/><stop offset="1.00" stop-color="#0000ff"/></linearGradient><linearGradient id="w252" gradientUnits="userSpaceOnUse" x1="1228.5" y1="230.3" x2="1150.9" y2="153.0"><stop offset="0.00" stop-color="#fefffe"/><stop offset="0.04" stop-color="#eeffee"/><stop offset="0.10" stop-color="#d7ffd7"/><stop offset="0.18" stop-color="#baffba"/><stop offset="0.28" stop-color="#9aff9a"/><stop offset="0.40" stop-color="#78ff78"/><stop offset="0.55" stop-color="#54ff54"/><stop offset="0.70" stop-color="#34ff34"/><stop offset="0.85" stop-color="#18ff18"/><stop offset="1.00" stop-color="#00ff00"/></linearGradient><radialGradient id="wspot" cx="0.5" cy="0.5" r="0.5"><stop offset="0" stop-color="#fff" stop-opacity="1"/><stop offset="0.5" stop-color="#fff" stop-opacity="0.6"/><stop offset="1" stop-color="#fff" stop-opacity="0"/></radialGradient><clipPath id="tri"><polygon points="1150.9,153.0 1497.8,185.5 1204.6,484.8"/></clipPath></defs><rect x="1017.5" y="123" width="640" height="491" fill="#232323"/><g clip-path="url(#plot)"><g clip-path="url(#hs)"><polygon points="1150.9,153.0 -43.8,41.2 -235.6,-1143.4 959.1,-1031.5" fill="#009900"/><polygon points="1204.6,484.8 1396.4,1669.4 556.7,2526.7 364.9,1342.1" fill="#000099"/><polygon points="1497.8,185.5 2692.6,297.4 3532.3,-559.9 2337.5,-671.7" fill="#990000"/><polygon points="1152.4,149.9 -43.3,26.7 -44.3,55.7 1153.5,156.5" fill="#009901"/><polygon points="1153.1,154.1 -44.0,44.8 -44.5,62.9 1153.7,158.2" fill="#009903"/><polygon points="1153.3,155.7 -44.2,52.0 -44.7,70.2 1154.0,159.8" fill="#009905"/><polygon points="1153.6,157.4 -44.4,59.3 -44.8,77.5 1154.3,161.5" fill="#009908"/><polygon points="1153.9,159.0 -44.6,66.6 -44.9,84.9 1154.5,163.1" fill="#00990a"/><polygon points="1154.1,160.7 -44.7,73.9 -45.0,92.2 1154.8,164.8" fill="#00990c"/><polygon points="1154.4,162.3 -44.9,81.2 -45.1,99.5 1155.1,166.4" fill="#00990e"/><polygon points="1154.7,164.0 -45.0,88.5 -45.1,106.9 1155.3,168.1" fill="#009911"/><polygon points="1154.9,165.6 -45.0,95.9 -45.1,114.3 1155.6,169.7" fill="#009913"/><polygon points="1155.2,167.3 -45.1,103.2 -45.1,121.7 1155.9,171.4" fill="#009915"/><polygon points="1155.5,168.9 -45.1,110.6 -45.0,129.1 1156.1,173.0" fill="#009918"/><polygon points="1155.7,170.6 -45.1,118.0 -45.0,136.5 1156.4,174.7" fill="#00991a"/><polygon points="1156.0,172.2 -45.1,125.4 -44.9,143.9 1156.7,176.3" fill="#00991c"/><polygon points="1156.3,173.9 -45.0,132.8 -44.8,151.3 1157.0,178.0" fill="#00991f"/><polygon points="1156.6,175.5 -44.9,140.2 -44.6,158.8 1157.2,179.6" fill="#009921"/><polygon points="1156.8,177.2 -44.8,147.6 -44.4,166.2 1157.5,181.3" fill="#009924"/><polygon points="1157.1,178.8 -44.7,155.1 -44.2,173.7 1157.8,182.9" fill="#009926"/><polygon points="1157.4,180.5 -44.5,162.5 -44.0,181.2 1158.0,184.6" fill="#009929"/><polygon points="1157.6,182.1 -44.3,170.0 -43.7,188.7 1158.3,186.2" fill="#00992b"/><polygon points="1157.9,183.7 -44.1,177.4 -43.4,196.2 1158.6,187.9" fill="#00992e"/><polygon points="1158.2,185.4 -43.8,184.9 -43.1,203.7 1158.8,189.5" fill="#009931"/><polygon points="1158.4,187.0 -43.6,192.4 -42.7,211.2 1159.1,191.2" fill="#009933"/><polygon points="1158.7,188.7 -43.2,199.9 -42.4,218.7 1159.4,192.8" fill="#009936"/><polygon points="1159.0,190.3 -42.9,207.4 -41.9,226.2 1159.6,194.5" fill="#009939"/><polygon points="1159.2,192.0 -42.5,214.9 -41.5,233.8 1159.9,196.1" fill="#00993b"/><polygon points="1159.5,193.6 -42.1,222.5 -41.0,241.3 1160.2,197.8" fill="#00993e"/><polygon points="1159.8,195.3 -41.7,230.0 -40.5,248.8 1160.4,199.4" fill="#009941"/><polygon points="1160.0,196.9 -41.3,237.5 -40.0,256.4 1160.7,201.1" fill="#009944"/><polygon points="1160.3,198.6 -40.8,245.1 -39.5,264.0 1161.0,202.7" fill="#009947"/><polygon points="1160.6,200.2 -40.3,252.6 -38.9,271.5 1161.2,204.4" fill="#00994a"/><polygon points="1160.8,201.9 -39.7,260.2 -38.3,279.1 1161.5,206.0" fill="#00994d"/><polygon points="1161.1,203.5 -39.2,267.7 -37.6,286.7 1161.8,207.7" fill="#009950"/><polygon points="1161.4,205.2 -38.6,275.3 -36.9,294.2 1162.1,209.3" fill="#009953"/><polygon points="1161.7,206.8 -37.9,282.9 -36.2,301.8 1162.3,211.0" fill="#009956"/><polygon points="1161.9,208.5 -37.3,290.4 -35.5,309.4 1162.6,212.6" fill="#009959"/><polygon points="1162.2,210.1 -36.6,298.0 -34.7,317.0 1162.9,214.3" fill="#00995c"/><polygon points="1162.5,211.8 -35.9,305.6 -34.0,324.6 1163.1,215.9" fill="#00995f"/><polygon points="1162.7,213.4 -35.1,313.2 -33.1,332.1 1163.4,217.6" fill="#009962"/><polygon points="1163.0,215.1 -34.4,320.8 -32.3,339.7 1163.7,219.2" fill="#009965"/><polygon points="1163.3,216.7 -33.6,328.3 -31.4,347.3 1163.9,220.9" fill="#009969"/><polygon points="1163.5,218.4 -32.7,335.9 -30.5,354.9 1164.2,222.5" fill="#00996c"/><polygon points="1163.8,220.0 -31.8,343.5 -29.6,362.5 1164.5,224.2" fill="#00996f"/><polygon points="1164.1,221.7 -31.0,351.1 -28.6,370.1 1164.7,225.8" fill="#009973"/><polygon points="1164.3,223.3 -30.0,358.7 -27.6,377.7 1165.0,227.4" fill="#009976"/><polygon points="1164.6,225.0 -29.1,366.3 -26.6,385.2 1165.3,229.1" fill="#00997a"/><polygon points="1164.9,226.6 -28.1,373.9 -25.5,392.8 1165.5,230.7" fill="#00997d"/><polygon points="1165.1,228.3 -27.1,381.4 -24.4,400.4 1165.8,232.4" fill="#009981"/><polygon points="1165.4,229.9 -26.0,389.0 -23.3,408.0 1166.1,234.0" fill="#009985"/><polygon points="1165.7,231.6 -25.0,396.6 -22.1,415.6 1166.3,235.7" fill="#009988"/><polygon points="1165.9,233.2 -23.8,404.2 -21.0,423.1 1166.6,237.3" fill="#00998c"/><polygon points="1166.2,234.9 -22.7,411.8 -19.8,430.7 1166.9,239.0" fill="#009990"/><polygon points="1166.5,236.5 -21.6,419.3 -18.5,438.2 1167.1,240.6" fill="#009994"/><polygon points="1166.7,238.2 -20.4,426.9 -17.2,445.8 1167.4,242.3" fill="#009997"/><polygon points="1167.0,239.8 -19.1,434.5 -16.0,453.3 1167.7,243.9" fill="#009799"/><polygon points="1167.3,241.5 -17.9,442.0 -14.6,460.9 1167.9,245.6" fill="#009399"/><polygon points="1167.5,243.1 -16.6,449.6 -13.3,468.4 1168.2,247.2" fill="#008f99"/><polygon points="1167.8,244.8 -15.3,457.1 -11.9,476.0 1168.5,248.9" fill="#008c99"/><polygon points="1168.1,246.4 -14.0,464.7 -10.5,483.5 1168.7,250.5" fill="#008899"/><polygon points="1168.3,248.1 -12.6,472.2 -9.0,491.0 1169.0,252.2" fill="#008599"/><polygon points="1168.6,249.7 -11.2,479.7 -7.6,498.5 1169.3,253.8" fill="#008299"/><polygon points="1168.9,251.4 -9.8,487.2 -6.1,506.0 1169.5,255.5" fill="#007f99"/><polygon points="1169.1,253.0 -8.3,494.7 -4.5,513.5 1169.8,257.1" fill="#007c99"/><polygon points="1169.4,254.7 -6.8,502.2 -3.0,521.0 1170.1,258.8" fill="#007999"/><polygon points="1169.7,256.3 -5.3,509.7 -1.4,528.4 1170.3,260.4" fill="#007699"/><polygon points="1169.9,258.0 -3.8,517.2 0.2,535.9 1170.6,262.1" fill="#007499"/><polygon points="1170.2,259.6 -2.2,524.7 1.8,543.3 1170.9,263.7" fill="#007199"/><polygon points="1170.5,261.3 -0.6,532.2 3.5,550.8 1171.1,265.4" fill="#006e99"/><polygon points="1170.7,262.9 1.0,539.6 5.2,558.2 1171.4,267.0" fill="#006c99"/><polygon points="1171.0,264.6 2.7,547.1 6.9,565.6 1171.7,268.7" fill="#006a99"/><polygon points="1171.3,266.2 4.3,554.5 8.7,573.0 1171.9,270.3" fill="#006799"/><polygon points="1171.5,267.9 6.1,561.9 10.4,580.4 1172.2,272.0" fill="#006599"/><polygon points="1171.8,269.5 7.8,569.3 12.2,587.8 1172.5,273.6" fill="#006399"/><polygon points="1172.1,271.2 9.6,576.7 14.1,595.1 1172.7,275.3" fill="#006199"/><polygon points="1172.3,272.8 11.3,584.1 15.9,602.5 1173.0,276.9" fill="#005f99"/><polygon points="1172.6,274.5 13.2,591.5 21.6,624.5 1173.8,281.9" fill="#005c99"/><polygon points="1173.1,277.7 16.9,606.2 25.6,639.0 1174.3,285.2" fill="#005899"/><polygon points="1173.7,281.0 20.7,620.8 29.6,653.5 1174.9,288.5" fill="#005499"/><polygon points="1174.2,284.3 24.6,635.4 33.8,667.9 1175.4,291.8" fill="#005199"/><polygon points="1174.7,287.6 28.6,649.9 38.0,682.3 1175.9,295.1" fill="#004e99"/><polygon points="1175.3,290.9 32.7,664.3 42.3,696.6 1176.4,298.4" fill="#004a99"/><polygon points="1175.8,294.2 36.9,678.7 46.8,710.8 1177.0,301.7" fill="#004799"/><polygon points="1176.3,297.5 41.2,693.0 51.3,724.9 1177.5,305.0" fill="#004599"/><polygon points="1176.8,300.8 45.6,707.3 55.9,739.0 1178.0,308.3" fill="#004299"/><polygon points="1177.4,304.1 50.1,721.4 60.6,753.0 1178.6,311.6" fill="#003f99"/><polygon points="1177.9,307.4 54.7,735.5 65.3,766.9 1179.1,314.9" fill="#003d99"/><polygon points="1178.4,310.7 59.4,749.5 70.2,780.7 1179.6,318.2" fill="#003a99"/><polygon points="1179.0,314.0 64.1,763.4 75.1,794.4 1180.2,321.5" fill="#003899"/><polygon points="1179.5,317.3 69.0,777.2 80.1,808.0 1180.7,324.8" fill="#003699"/><polygon points="1180.0,320.6 73.9,791.0 85.2,821.5 1181.2,328.1" fill="#003499"/><polygon points="1180.6,323.9 78.8,804.6 92.9,841.7 1182.0,333.0" fill="#003199"/><polygon points="1181.4,328.9 86.5,824.9 100.8,861.6 1182.8,338.0" fill="#002e99"/><polygon points="1182.1,333.8 94.2,845.0 108.9,881.3 1183.6,342.9" fill="#002c99"/><polygon points="1182.9,338.8 102.2,864.9 117.1,900.7 1184.4,347.9" fill="#002999"/><polygon points="1183.7,343.8 110.3,884.5 125.4,920.0 1185.2,352.8" fill="#002799"/><polygon points="1184.5,348.7 118.5,904.0 133.8,939.0 1186.0,357.8" fill="#002499"/><polygon points="1185.3,353.7 126.8,923.2 142.4,957.8 1186.8,362.7" fill="#002299"/><polygon points="1186.1,358.6 135.3,942.1 151.0,976.3 1187.6,367.7" fill="#002099"/><polygon points="1186.9,363.6 143.8,960.9 165.7,1006.7 1188.9,375.9" fill="#001e99"/><polygon points="1188.0,370.2 155.4,985.5 177.5,1030.5 1189.9,382.6" fill="#001b99"/><polygon points="1189.0,376.8 167.1,1009.7 189.5,1053.9 1191.0,389.2" fill="#001999"/><polygon points="1190.1,383.4 179.0,1033.4 201.6,1076.8 1192.1,395.8" fill="#001699"/><polygon points="1191.1,390.0 191.0,1056.8 213.8,1099.4 1193.1,402.4" fill="#001499"/><polygon points="1192.2,396.6 203.1,1079.7 229.2,1126.9 1194.4,410.6" fill="#001299"/><polygon points="1193.5,404.9 218.4,1107.7 244.6,1153.8 1195.7,418.9" fill="#001099"/><polygon points="1194.8,413.1 233.8,1135.1 260.1,1180.1 1197.1,427.2" fill="#000e99"/><polygon points="1196.1,421.4 249.2,1161.8 275.6,1205.7 1198.4,435.4" fill="#000b99"/><polygon points="1197.5,429.7 264.7,1187.8 297.3,1240.4 1200.2,447.0" fill="#000999"/><polygon points="1199.0,439.6 283.3,1218.2 315.9,1269.3 1201.8,456.9" fill="#000799"/><polygon points="1200.6,449.5 302.0,1247.7 337.5,1301.9 1203.7,468.5" fill="#000599"/><polygon points="1202.5,461.1 323.6,1281.1 358.9,1333.3 1205.5,480.1" fill="#000399"/><polygon points="1204.3,472.6 345.1,1313.2 371.0,1350.8 1206.6,486.7" fill="#000199"/><polygon points="1147.8,154.7 943.8,-1029.9 974.5,-1033.1 1154.7,155.4" fill="#019900"/><polygon points="1152.1,155.1 963.0,-1031.9 982.3,-1033.8 1156.4,155.5" fill="#049900"/><polygon points="1153.8,155.3 970.7,-1032.7 990.0,-1034.5 1158.1,155.7" fill="#069900"/><polygon points="1155.6,155.4 978.4,-1033.4 997.8,-1035.2 1159.9,155.8" fill="#099900"/><polygon points="1157.3,155.6 986.1,-1034.2 1005.5,-1035.8 1161.6,156.0" fill="#0b9900"/><polygon points="1159.0,155.8 993.9,-1034.8 1013.3,-1036.4 1163.3,156.2" fill="#0e9900"/><polygon points="1160.7,155.9 1001.7,-1035.5 1021.2,-1037.0 1165.0,156.3" fill="#109900"/><polygon points="1162.5,156.1 1009.4,-1036.1 1029.0,-1037.6 1166.8,156.5" fill="#139900"/><polygon points="1164.2,156.3 1017.3,-1036.7 1036.9,-1038.1 1168.5,156.7" fill="#159900"/><polygon points="1165.9,156.4 1025.1,-1037.3 1044.7,-1038.6 1170.2,156.8" fill="#189900"/><polygon points="1167.6,156.6 1032.9,-1037.8 1052.6,-1039.1 1171.9,157.0" fill="#1b9900"/><polygon points="1169.3,156.7 1040.8,-1038.4 1060.5,-1039.5 1173.7,157.2" fill="#1d9900"/><polygon points="1171.1,156.9 1048.7,-1038.8 1068.4,-1039.9 1175.4,157.3" fill="#209900"/><polygon points="1172.8,157.1 1056.6,-1039.3 1076.4,-1040.3 1177.1,157.5" fill="#239900"/><polygon points="1174.5,157.2 1064.5,-1039.7 1084.3,-1040.6 1178.8,157.6" fill="#259900"/><polygon points="1176.2,157.4 1072.4,-1040.1 1092.3,-1040.9 1180.6,157.8" fill="#289900"/><polygon points="1178.0,157.6 1080.3,-1040.5 1100.2,-1041.2 1182.3,158.0" fill="#2b9900"/><polygon points="1179.7,157.7 1088.3,-1040.8 1108.2,-1041.5 1184.0,158.1" fill="#2e9900"/><polygon points="1181.4,157.9 1096.2,-1041.1 1116.2,-1041.7 1185.7,158.3" fill="#319900"/><polygon points="1183.1,158.1 1104.2,-1041.4 1124.2,-1041.9 1187.5,158.5" fill="#349900"/><polygon points="1184.9,158.2 1112.2,-1041.6 1132.3,-1042.0 1189.2,158.6" fill="#379900"/><polygon points="1186.6,158.4 1120.2,-1041.8 1140.3,-1042.2 1190.9,158.8" fill="#3a9900"/><polygon points="1188.3,158.5 1128.2,-1042.0 1148.3,-1042.2 1192.6,158.9" fill="#3d9900"/><polygon points="1190.0,158.7 1136.3,-1042.1 1156.4,-1042.3 1194.3,159.1" fill="#409900"/><polygon points="1191.8,158.9 1144.3,-1042.2 1164.4,-1042.3 1196.1,159.3" fill="#439900"/><polygon points="1193.5,159.0 1152.3,-1042.3 1172.5,-1042.3 1197.8,159.4" fill="#469900"/><polygon points="1195.2,159.2 1160.4,-1042.3 1180.6,-1042.3 1199.5,159.6" fill="#499900"/><polygon points="1196.9,159.4 1168.5,-1042.3 1188.7,-1042.2 1201.2,159.8" fill="#4c9900"/><polygon points="1198.7,159.5 1176.5,-1042.3 1196.8,-1042.1 1203.0,159.9" fill="#4f9900"/><polygon points="1200.4,159.7 1184.6,-1042.2 1204.9,-1041.9 1204.7,160.1" fill="#539900"/><polygon points="1202.1,159.8 1192.7,-1042.1 1213.0,-1041.7 1206.4,160.2" fill="#569900"/><polygon points="1203.8,160.0 1200.8,-1042.0 1221.1,-1041.5 1208.1,160.4" fill="#599900"/><polygon points="1205.6,160.2 1208.9,-1041.8 1229.2,-1041.3 1209.9,160.6" fill="#5d9900"/><polygon points="1207.3,160.3 1217.0,-1041.6 1237.3,-1041.0 1211.6,160.7" fill="#609900"/><polygon points="1209.0,160.5 1225.1,-1041.4 1245.5,-1040.7 1213.3,160.9" fill="#649900"/><polygon points="1210.7,160.7 1233.3,-1041.1 1253.6,-1040.3 1215.0,161.1" fill="#679900"/><polygon points="1212.4,160.8 1241.4,-1040.8 1261.7,-1039.9 1216.8,161.2" fill="#6b9900"/><polygon points="1214.2,161.0 1249.5,-1040.5 1269.9,-1039.5 1218.5,161.4" fill="#6e9900"/><polygon points="1215.9,161.1 1257.7,-1040.1 1278.0,-1039.1 1220.2,161.5" fill="#729900"/><polygon points="1217.6,161.3 1265.8,-1039.7 1286.1,-1038.6 1221.9,161.7" fill="#769900"/><polygon points="1219.3,161.5 1273.9,-1039.3 1294.3,-1038.1 1223.7,161.9" fill="#799900"/><polygon points="1221.1,161.6 1282.1,-1038.8 1302.4,-1037.5 1225.4,162.0" fill="#7d9900"/><polygon points="1222.8,161.8 1290.2,-1038.3 1310.6,-1036.9 1227.1,162.2" fill="#819900"/><polygon points="1224.5,161.9 1298.3,-1037.8 1318.7,-1036.3 1228.8,162.4" fill="#859900"/><polygon points="1226.2,162.1 1306.5,-1037.2 1326.8,-1035.6 1230.5,162.5" fill="#899900"/><polygon points="1228.0,162.3 1314.6,-1036.6 1335.0,-1034.9 1232.3,162.7" fill="#8d9900"/><polygon points="1229.7,162.4 1322.8,-1036.0 1343.1,-1034.2 1234.0,162.8" fill="#919900"/><polygon points="1231.4,162.6 1330.9,-1035.3 1351.2,-1033.4 1235.7,163.0" fill="#959900"/><polygon points="1233.1,162.8 1339.0,-1034.6 1359.4,-1032.6 1237.4,163.2" fill="#999900"/><polygon points="1234.9,162.9 1347.2,-1033.8 1367.5,-1031.8 1239.2,163.3" fill="#999500"/><polygon points="1236.6,163.1 1355.3,-1033.0 1375.6,-1030.9 1240.9,163.5" fill="#999100"/><polygon points="1238.3,163.2 1363.4,-1032.2 1383.7,-1030.0 1242.6,163.6" fill="#998d00"/><polygon points="1240.0,163.4 1371.6,-1031.4 1391.8,-1029.1 1244.3,163.8" fill="#998a00"/><polygon points="1241.8,163.6 1379.7,-1030.5 1399.9,-1028.1 1246.1,164.0" fill="#998600"/><polygon points="1243.5,163.7 1387.8,-1029.6 1408.0,-1027.1 1247.8,164.1" fill="#998300"/><polygon points="1245.2,163.9 1395.9,-1028.6 1416.1,-1026.1 1249.5,164.3" fill="#997f00"/><polygon points="1246.9,164.0 1404.0,-1027.6 1424.2,-1025.0 1251.2,164.4" fill="#997c00"/><polygon points="1248.6,164.2 1412.1,-1026.6 1432.3,-1023.9 1253.0,164.6" fill="#997900"/><polygon points="1250.4,164.4 1420.2,-1025.6 1440.3,-1022.8 1254.7,164.8" fill="#997600"/><polygon points="1252.1,164.5 1428.2,-1024.5 1448.4,-1021.6 1256.4,164.9" fill="#997400"/><polygon points="1253.8,164.7 1436.3,-1023.4 1456.4,-1020.4 1258.1,165.1" fill="#997100"/><polygon points="1255.5,164.9 1444.4,-1022.2 1464.5,-1019.2 1259.9,165.3" fill="#996e00"/><polygon points="1257.3,165.0 1452.4,-1021.0 1472.5,-1017.9 1261.6,165.4" fill="#996c00"/><polygon points="1259.0,165.2 1460.5,-1019.8 1480.5,-1016.6 1263.3,165.6" fill="#996900"/><polygon points="1260.7,165.3 1468.5,-1018.6 1488.5,-1015.3 1265.0,165.7" fill="#996700"/><polygon points="1262.4,165.5 1476.5,-1017.3 1496.5,-1013.9 1266.7,165.9" fill="#996500"/><polygon points="1264.2,165.7 1484.5,-1016.0 1504.5,-1012.6 1268.5,166.1" fill="#996200"/><polygon points="1265.9,165.8 1492.5,-1014.6 1512.4,-1011.1 1270.2,166.2" fill="#996000"/><polygon points="1267.6,166.0 1500.5,-1013.3 1520.4,-1009.7 1271.9,166.4" fill="#995e00"/><polygon points="1269.3,166.1 1508.4,-1011.8 1528.3,-1008.2 1273.6,166.5" fill="#995c00"/><polygon points="1271.1,166.3 1516.4,-1010.4 1552.0,-1003.5 1278.8,167.0" fill="#995900"/><polygon points="1274.5,166.6 1532.3,-1007.4 1567.7,-1000.3 1282.3,167.3" fill="#995500"/><polygon points="1278.0,166.9 1548.1,-1004.3 1583.4,-996.9 1285.7,167.7" fill="#995200"/><polygon points="1281.4,167.3 1563.8,-1001.1 1599.0,-993.4 1289.2,168.0" fill="#994e00"/><polygon points="1284.8,167.6 1579.5,-997.8 1614.5,-989.8 1292.6,168.3" fill="#994b00"/><polygon points="1288.3,167.9 1595.1,-994.3 1629.9,-986.1 1296.1,168.6" fill="#994800"/><polygon points="1291.7,168.2 1610.6,-990.7 1645.2,-982.3 1299.5,168.9" fill="#994500"/><polygon points="1295.2,168.5 1626.0,-987.0 1660.5,-978.3 1303.0,169.3" fill="#994200"/><polygon points="1298.6,168.9 1641.4,-983.2 1675.6,-974.3 1306.4,169.6" fill="#994000"/><polygon points="1302.1,169.2 1656.7,-979.3 1690.7,-970.2 1309.9,169.9" fill="#993d00"/><polygon points="1305.5,169.5 1671.9,-975.3 1705.7,-965.9 1313.3,170.2" fill="#993b00"/><polygon points="1309.0,169.8 1687.0,-971.2 1720.6,-961.6 1316.8,170.5" fill="#993800"/><polygon points="1312.4,170.1 1702.0,-967.0 1735.4,-957.2 1320.2,170.8" fill="#993600"/><polygon points="1315.9,170.4 1716.9,-962.7 1750.1,-952.7 1323.7,171.2" fill="#993400"/><polygon points="1319.3,170.8 1731.7,-958.3 1771.9,-945.7 1328.8,171.6" fill="#993100"/><polygon points="1324.5,171.2 1753.7,-951.5 1793.5,-938.6 1334.0,172.1" fill="#992f00"/><polygon points="1329.7,171.7 1775.5,-944.6 1814.8,-931.3 1339.2,172.6" fill="#992c00"/><polygon points="1334.9,172.2 1797.1,-937.4 1835.9,-923.8 1344.4,173.1" fill="#992900"/><polygon points="1340.0,172.7 1818.4,-930.1 1856.8,-916.2 1349.5,173.5" fill="#992700"/><polygon points="1345.2,173.1 1839.4,-922.6 1877.3,-908.4 1354.7,174.0" fill="#992500"/><polygon points="1350.4,173.6 1860.2,-914.9 1897.7,-900.5 1359.9,174.5" fill="#992200"/><polygon points="1355.6,174.1 1880.7,-907.1 1917.7,-892.5 1365.1,175.0" fill="#992000"/><polygon points="1360.8,174.6 1901.0,-899.2 1950.5,-878.8 1373.7,175.8" fill="#991e00"/><polygon points="1367.7,175.2 1927.6,-888.4 1976.2,-867.7 1380.6,176.4" fill="#991c00"/><polygon points="1374.6,175.8 1953.8,-877.4 2001.5,-856.4 1387.5,177.0" fill="#991900"/><polygon points="1381.5,176.5 1979.4,-866.3 2026.2,-844.9 1394.4,177.7" fill="#991700"/><polygon points="1388.4,177.1 2004.6,-854.9 2056.4,-830.5 1403.1,178.4" fill="#991500"/><polygon points="1397.0,177.9 2035.3,-840.6 2085.9,-815.9 1411.7,179.2" fill="#991200"/><polygon points="1405.6,178.7 2065.4,-826.1 2114.6,-801.2 1420.3,180.0" fill="#991000"/><polygon points="1414.3,179.5 2094.6,-811.5 2142.6,-786.4 1429.0,180.8" fill="#990e00"/><polygon points="1422.9,180.3 2123.1,-796.7 2180.6,-765.6 1441.1,181.9" fill="#990c00"/><polygon points="1433.3,181.2 2156.4,-779.0 2212.1,-747.8 1451.4,182.9" fill="#990a00"/><polygon points="1443.7,182.1 2188.6,-761.2 2247.6,-727.1 1463.5,184.0" fill="#990700"/><polygon points="1455.8,183.3 2224.9,-740.4 2281.7,-706.6 1475.6,185.1" fill="#990500"/><polygon points="1467.9,184.4 2259.9,-719.8 2323.9,-680.4 1491.2,186.5" fill="#990300"/><polygon points="1481.7,185.6 2298.4,-696.3 2346.5,-666.0 1499.9,187.3" fill="#990100"/><polygon points="1201.4,485.8 1381.7,1674.2 1434.0,1656.6 1211.6,475.4" fill="#010099"/><polygon points="1208.0,479.1 1415.1,1663.1 1456.9,1648.5 1216.0,470.9" fill="#040099"/><polygon points="1212.3,474.6 1437.8,1655.3 1480.3,1640.0 1220.3,466.4" fill="#070099"/><polygon points="1216.7,470.1 1460.8,1647.1 1503.9,1631.0 1224.7,461.9" fill="#0a0099"/><polygon points="1221.1,465.7 1484.2,1638.5 1527.9,1621.7 1229.1,457.4" fill="#0c0099"/><polygon points="1225.4,461.2 1507.9,1629.5 1544.1,1615.2 1232.0,454.5" fill="#0f0099"/><polygon points="1228.3,458.2 1523.9,1623.3 1560.4,1608.6 1234.9,451.5" fill="#110099"/><polygon points="1231.2,455.2 1540.0,1616.9 1576.9,1601.7 1237.8,448.5" fill="#130099"/><polygon points="1234.2,452.2 1556.3,1610.2 1593.4,1594.6 1240.7,445.5" fill="#150099"/><polygon points="1237.1,449.2 1572.7,1603.4 1610.1,1587.3 1243.6,442.5" fill="#170099"/><polygon points="1240.0,446.2 1589.3,1596.4 1627.0,1579.7 1246.5,439.5" fill="#1a0099"/><polygon points="1242.9,443.3 1606.0,1589.1 1643.9,1572.0 1249.4,436.5" fill="#1c0099"/><polygon points="1245.8,440.3 1622.8,1581.6 1661.0,1564.0 1252.3,433.6" fill="#1e0099"/><polygon points="1248.7,437.3 1639.7,1573.9 1678.2,1555.7 1255.2,430.6" fill="#210099"/><polygon points="1251.6,434.3 1656.7,1566.0 1695.4,1547.2 1258.1,427.6" fill="#230099"/><polygon points="1254.5,431.3 1673.9,1557.8 1712.8,1538.5 1261.1,424.6" fill="#260099"/><polygon points="1257.4,428.3 1691.1,1549.4 1730.2,1529.5 1264.0,421.6" fill="#280099"/><polygon points="1260.3,425.4 1708.4,1540.7 1747.8,1520.2 1266.9,418.6" fill="#2b0099"/><polygon points="1263.2,422.4 1725.9,1531.8 1765.4,1510.7 1269.8,415.7" fill="#2e0099"/><polygon points="1266.1,419.4 1743.4,1522.6 1783.1,1501.0 1272.7,412.7" fill="#310099"/><polygon points="1269.1,416.4 1761.0,1513.1 1800.8,1490.9 1275.6,409.7" fill="#330099"/><polygon points="1272.0,413.4 1778.6,1503.4 1818.6,1480.6 1278.5,406.7" fill="#360099"/><polygon points="1274.9,410.4 1796.3,1493.4 1836.4,1470.0 1281.4,403.7" fill="#390099"/><polygon points="1277.8,407.5 1814.1,1483.2 1854.2,1459.1 1284.3,400.8" fill="#3c0099"/><polygon points="1280.7,404.5 1831.9,1472.6 1872.1,1447.9 1287.2,397.8" fill="#400099"/><polygon points="1283.6,401.5 1849.7,1461.8 1889.9,1436.5 1290.1,394.8" fill="#430099"/><polygon points="1286.5,398.5 1867.6,1450.7 1907.8,1424.7 1293.0,391.8" fill="#460099"/><polygon points="1289.4,395.5 1885.4,1439.4 1925.6,1412.7 1295.9,388.8" fill="#4a0099"/><polygon points="1292.3,392.6 1903.3,1427.7 1943.4,1400.4 1298.8,385.9" fill="#4d0099"/><polygon points="1295.2,389.6 1921.2,1415.7 1961.2,1387.8 1301.8,382.9" fill="#510099"/><polygon points="1298.1,386.6 1939.0,1403.5 1979.0,1375.0 1304.7,379.9" fill="#550099"/><polygon points="1301.0,383.6 1956.8,1391.0 1996.6,1361.8 1307.6,376.9" fill="#590099"/><polygon points="1303.9,380.7 1974.5,1378.2 1996.6,1361.8 1307.6,376.9" fill="#5c0099"/><polygon points="1305.4,379.2 1983.4,1371.7 2005.4,1355.1 1309.0,375.5" fill="#5e0099"/><polygon points="1306.8,377.7 1992.2,1365.1 2014.2,1348.4 1310.5,374.0" fill="#600099"/><polygon points="1308.3,376.2 2001.0,1358.5 2023.0,1341.6 1311.9,372.5" fill="#620099"/><polygon points="1309.7,374.7 2009.8,1351.8 2031.8,1334.7 1313.4,371.0" fill="#640099"/><polygon points="1311.2,373.2 2018.6,1345.0 2040.5,1327.7 1314.8,369.5" fill="#660099"/><polygon points="1312.7,371.7 2027.4,1338.1 2049.2,1320.7 1316.3,368.0" fill="#680099"/><polygon points="1314.1,370.2 2036.1,1331.2 2057.9,1313.6 1317.7,366.5" fill="#6b0099"/><polygon points="1315.6,368.8 2044.8,1324.2 2066.5,1306.5 1319.2,365.0" fill="#6d0099"/><polygon points="1317.0,367.3 2053.5,1317.2 2075.1,1299.3 1320.6,363.6" fill="#6f0099"/><polygon points="1318.5,365.8 2062.2,1310.1 2083.7,1292.0 1322.1,362.1" fill="#710099"/><polygon points="1319.9,364.3 2070.8,1302.9 2092.3,1284.7 1323.6,360.6" fill="#740099"/><polygon points="1321.4,362.8 2079.4,1295.6 2100.8,1277.2 1325.0,359.1" fill="#760099"/><polygon points="1322.8,361.3 2088.0,1288.3 2109.3,1269.8 1326.5,357.6" fill="#790099"/><polygon points="1324.3,359.8 2096.5,1281.0 2117.7,1262.2 1327.9,356.1" fill="#7b0099"/><polygon points="1325.7,358.3 2105.0,1273.5 2126.1,1254.6 1329.4,354.6" fill="#7e0099"/><polygon points="1327.2,356.9 2113.5,1266.0 2134.5,1247.0 1330.8,353.1" fill="#800099"/><polygon points="1328.6,355.4 2121.9,1258.5 2142.8,1239.3 1332.3,351.7" fill="#830099"/><polygon points="1330.1,353.9 2130.3,1250.8 2151.1,1231.5 1333.7,350.2" fill="#860099"/><polygon points="1331.6,352.4 2138.6,1243.1 2159.3,1223.7 1335.2,348.7" fill="#890099"/><polygon points="1333.0,350.9 2146.9,1235.4 2167.5,1215.8 1336.6,347.2" fill="#8b0099"/><polygon points="1334.5,349.4 2155.2,1227.6 2175.7,1207.9 1338.1,345.7" fill="#8e0099"/><polygon points="1335.9,347.9 2163.4,1219.7 2183.8,1199.9 1339.6,344.2" fill="#910099"/><polygon points="1337.4,346.5 2171.6,1211.8 2191.8,1191.8 1341.0,342.7" fill="#940099"/><polygon points="1338.8,345.0 2179.7,1203.9 2199.8,1183.7 1342.5,341.3" fill="#970099"/><polygon points="1340.3,343.5 2187.8,1195.8 2207.8,1175.6 1343.9,339.8" fill="#990098"/><polygon points="1341.7,342.0 2195.8,1187.8 2215.7,1167.4 1345.4,338.3" fill="#990095"/><polygon points="1343.2,340.5 2203.8,1179.6 2223.5,1159.1 1346.8,336.8" fill="#990092"/><polygon points="1344.6,339.0 2211.7,1171.5 2231.3,1150.8 1348.3,335.3" fill="#99008f"/><polygon points="1346.1,337.5 2219.6,1163.3 2239.1,1142.5 1349.7,333.8" fill="#99008c"/><polygon points="1347.6,336.1 2227.4,1155.0 2246.7,1134.1 1351.2,332.3" fill="#990089"/><polygon points="1349.0,334.6 2235.2,1146.7 2254.4,1125.7 1352.7,330.9" fill="#990087"/><polygon points="1350.5,333.1 2242.9,1138.3 2261.9,1117.2 1354.1,329.4" fill="#990084"/><polygon points="1351.9,331.6 2250.6,1129.9 2269.4,1108.7 1355.6,327.9" fill="#990081"/><polygon points="1353.4,330.1 2258.1,1121.4 2276.9,1100.2 1357.0,326.4" fill="#99007f"/><polygon points="1354.8,328.6 2265.7,1113.0 2284.3,1091.6 1358.5,324.9" fill="#99007c"/><polygon points="1356.3,327.2 2273.2,1104.4 2291.6,1082.9 1359.9,323.4" fill="#99007a"/><polygon points="1357.7,325.7 2280.6,1095.9 2298.8,1074.3 1361.4,322.0" fill="#990077"/><polygon points="1359.2,324.2 2287.9,1087.3 2306.0,1065.6 1362.8,320.5" fill="#990075"/><polygon points="1360.7,322.7 2295.2,1078.6 2313.1,1056.9 1364.3,319.0" fill="#990073"/><polygon points="1362.1,321.2 2302.4,1070.0 2320.2,1048.1 1365.8,317.5" fill="#990070"/><polygon points="1363.6,319.7 2309.6,1061.2 2327.2,1039.4 1367.2,316.0" fill="#99006e"/><polygon points="1365.0,318.2 2316.7,1052.5 2334.1,1030.5 1368.7,314.5" fill="#99006c"/><polygon points="1366.5,316.8 2323.7,1043.7 2341.0,1021.7 1370.1,313.0" fill="#99006a"/><polygon points="1367.9,315.3 2330.7,1035.0 2347.8,1012.9 1371.6,311.6" fill="#990068"/><polygon points="1369.4,313.8 2337.6,1026.1 2354.5,1004.0 1373.0,310.1" fill="#990066"/><polygon points="1370.9,312.3 2344.4,1017.3 2361.2,995.1 1374.5,308.6" fill="#990064"/><polygon points="1372.3,310.8 2351.2,1008.4 2367.8,986.1 1376.0,307.1" fill="#990062"/><polygon points="1373.8,309.3 2357.9,999.5 2387.1,959.3 1380.3,302.7" fill="#99005f"/><polygon points="1376.7,306.4 2371.0,981.7 2399.7,941.3 1383.2,299.7" fill="#99005b"/><polygon points="1379.6,303.4 2384.0,963.8 2412.0,923.3 1386.2,296.7" fill="#990057"/><polygon points="1382.5,300.4 2396.6,945.8 2423.9,905.2 1389.1,293.8" fill="#990053"/><polygon points="1385.4,297.5 2408.9,927.8 2435.6,887.1 1392.0,290.8" fill="#990050"/><polygon points="1388.3,294.5 2421.0,909.7 2447.1,869.0 1394.9,287.8" fill="#99004d"/><polygon points="1391.3,291.5 2432.7,891.6 2458.2,850.9 1397.8,284.9" fill="#990049"/><polygon points="1394.2,288.6 2444.2,873.5 2469.0,832.8 1400.7,281.9" fill="#990046"/><polygon points="1397.1,285.6 2455.4,855.4 2479.6,814.8 1403.7,278.9" fill="#990043"/><polygon points="1400.0,282.6 2466.4,837.3 2489.9,796.7 1406.6,276.0" fill="#990040"/><polygon points="1402.9,279.7 2477.0,819.3 2499.9,778.7 1409.5,273.0" fill="#99003d"/><polygon points="1405.9,276.7 2487.4,801.2 2509.7,760.8 1412.4,270.0" fill="#99003a"/><polygon points="1408.8,273.7 2497.4,783.2 2519.1,742.9 1415.3,267.0" fill="#990038"/><polygon points="1411.7,270.8 2507.3,765.3 2528.3,725.1 1418.3,264.1" fill="#990035"/><polygon points="1414.6,267.8 2516.8,747.4 2537.3,707.4 1421.2,261.1" fill="#990032"/><polygon points="1417.5,264.8 2526.1,729.5 2546.0,689.7 1424.1,258.1" fill="#990030"/><polygon points="1420.5,261.9 2535.1,711.8 2554.4,672.1 1427.0,255.2" fill="#99002d"/><polygon points="1423.4,258.9 2543.8,694.1 2562.6,654.7 1430.0,252.2" fill="#99002b"/><polygon points="1426.3,255.9 2552.3,676.5 2570.5,637.3 1432.9,249.2" fill="#990029"/><polygon points="1429.2,252.9 2560.5,659.0 2578.2,620.1 1435.8,246.3" fill="#990026"/><polygon points="1432.1,250.0 2568.5,641.7 2585.7,602.9 1438.7,243.3" fill="#990024"/><polygon points="1435.1,247.0 2576.3,624.4 2592.9,585.9 1441.7,240.3" fill="#990022"/><polygon points="1438.0,244.0 2583.8,607.2 2599.9,569.1 1444.6,237.4" fill="#990020"/><polygon points="1440.9,241.1 2591.1,590.2 2606.7,552.3 1447.5,234.4" fill="#99001e"/><polygon points="1443.8,238.1 2598.2,573.3 2616.5,527.4 1451.9,229.9" fill="#99001b"/><polygon points="1448.2,233.6 2608.4,548.1 2625.8,502.9 1456.3,225.5" fill="#990018"/><polygon points="1452.6,229.2 2618.1,523.3 2634.7,478.7 1460.7,221.0" fill="#990016"/><polygon points="1457.0,224.7 2627.3,498.8 2643.2,454.8 1465.1,216.6" fill="#990013"/><polygon points="1461.4,220.3 2636.2,474.6 2651.3,431.2 1469.4,212.1" fill="#990010"/><polygon points="1465.8,215.8 2644.6,450.8 2659.0,408.0 1473.8,207.6" fill="#99000e"/><polygon points="1470.2,211.4 2652.6,427.3 2666.4,385.2 1478.2,203.2" fill="#99000b"/><polygon points="1474.6,206.9 2660.3,404.2 2673.4,362.7 1482.6,198.7" fill="#990009"/><polygon points="1479.0,202.4 2667.6,381.4 2680.1,340.6 1487.0,194.3" fill="#990007"/><polygon points="1483.4,198.0 2674.5,359.0 2686.5,318.8 1491.4,189.8" fill="#990005"/><polygon points="1487.8,193.5 2681.2,336.9 2692.6,297.4 1495.8,185.3" fill="#990002"/><polygon points="1492.1,189.1 2687.5,315.2 2696.5,283.3 1498.7,182.4" fill="#990001"/><g clip-path="url(#tri)"><polygon points="1228.5,230.3 1148.8,152.9 1155.8,153.5" fill="url(#w0)" stroke="url(#w0)" stroke-width="1"/><polygon points="1228.5,230.3 1151.6,153.1 1158.6,153.8" fill="url(#w1)" stroke="url(#w1)" stroke-width="1"/><polygon points="1228.5,230.3 1154.4,153.4 1161.3,154.0" fill="url(#w2)" stroke="url(#w2)" stroke-width="1"/><polygon points="1228.5,230.3 1157.2,153.6 1164.1,154.3" fill="url(#w3)" stroke="url(#w3)" stroke-width="1"/><polygon points="1228.5,230.3 1159.9,153.9 1166.9,154.5" fill="url(#w4)" stroke="url(#w4)" stroke-width="1"/><polygon points="1228.5,230.3 1162.7,154.2 1169.7,154.8" fill="url(#w5)" stroke="url(#w5)" stroke-width="1"/><polygon points="1228.5,230.3 1165.5,154.4 1172.4,155.1" fill="url(#w6)" stroke="url(#w6)" stroke-width="1"/><polygon points="1228.5,230.3 1168.3,154.7 1175.2,155.3" fill="url(#w7)" stroke="url(#w7)" stroke-width="1"/><polygon points="1228.5,230.3 1171.0,154.9 1178.0,155.6" fill="url(#w8)" stroke="url(#w8)" stroke-width="1"/><polygon points="1228.5,230.3 1173.8,155.2 1180.8,155.8" fill="url(#w9)" stroke="url(#w9)" stroke-width="1"/><polygon points="1228.5,230.3 1176.6,155.5 1183.5,156.1" fill="url(#w10)" stroke="url(#w10)" stroke-width="1"/><polygon points="1228.5,230.3 1179.4,155.7 1186.3,156.4" fill="url(#w11)" stroke="url(#w11)" stroke-width="1"/><polygon points="1228.5,230.3 1182.1,156.0 1189.1,156.6" fill="url(#w12)" stroke="url(#w12)" stroke-width="1"/><polygon points="1228.5,230.3 1185.6,156.3 1189.8,156.7" fill="url(#w13)" stroke="url(#w13)" stroke-width="1"/><polygon points="1228.5,230.3 1187.0,156.4 1191.2,156.8" fill="url(#w14)" stroke="url(#w14)" stroke-width="1"/><polygon points="1228.5,230.3 1188.4,156.6 1192.5,156.9" fill="url(#w15)" stroke="url(#w15)" stroke-width="1"/><polygon points="1228.5,230.3 1189.8,156.7 1193.9,157.1" fill="url(#w16)" stroke="url(#w16)" stroke-width="1"/><polygon points="1228.5,230.3 1191.2,156.8 1195.3,157.2" fill="url(#w17)" stroke="url(#w17)" stroke-width="1"/><polygon points="1228.5,230.3 1192.5,156.9 1196.7,157.3" fill="url(#w18)" stroke="url(#w18)" stroke-width="1"/><polygon points="1228.5,230.3 1193.9,157.1 1198.1,157.5" fill="url(#w19)" stroke="url(#w19)" stroke-width="1"/><polygon points="1228.5,230.3 1195.3,157.2 1199.5,157.6" fill="url(#w20)" stroke="url(#w20)" stroke-width="1"/><polygon points="1228.5,230.3 1196.7,157.3 1200.9,157.7" fill="url(#w21)" stroke="url(#w21)" stroke-width="1"/><polygon points="1228.5,230.3 1198.1,157.5 1202.3,157.9" fill="url(#w22)" stroke="url(#w22)" stroke-width="1"/><polygon points="1228.5,230.3 1199.5,157.6 1203.6,158.0" fill="url(#w23)" stroke="url(#w23)" stroke-width="1"/><polygon points="1228.5,230.3 1200.9,157.7 1205.0,158.1" fill="url(#w24)" stroke="url(#w24)" stroke-width="1"/><polygon points="1228.5,230.3 1202.3,157.9 1206.4,158.2" fill="url(#w25)" stroke="url(#w25)" stroke-width="1"/><polygon points="1228.5,230.3 1203.6,158.0 1207.8,158.4" fill="url(#w26)" stroke="url(#w26)" stroke-width="1"/><polygon points="1228.5,230.3 1205.0,158.1 1209.2,158.5" fill="url(#w27)" stroke="url(#w27)" stroke-width="1"/><polygon points="1228.5,230.3 1206.4,158.2 1210.6,158.6" fill="url(#w28)" stroke="url(#w28)" stroke-width="1"/><polygon points="1228.5,230.3 1207.8,158.4 1212.0,158.8" fill="url(#w29)" stroke="url(#w29)" stroke-width="1"/><polygon points="1228.5,230.3 1209.2,158.5 1213.4,158.9" fill="url(#w30)" stroke="url(#w30)" stroke-width="1"/><polygon points="1228.5,230.3 1210.6,158.6 1214.8,159.0" fill="url(#w31)" stroke="url(#w31)" stroke-width="1"/><polygon points="1228.5,230.3 1212.0,158.8 1216.1,159.2" fill="url(#w32)" stroke="url(#w32)" stroke-width="1"/><polygon points="1228.5,230.3 1213.4,158.9 1217.5,159.3" fill="url(#w33)" stroke="url(#w33)" stroke-width="1"/><polygon points="1228.5,230.3 1214.8,159.0 1218.9,159.4" fill="url(#w34)" stroke="url(#w34)" stroke-width="1"/><polygon points="1228.5,230.3 1216.1,159.2 1220.3,159.5" fill="url(#w35)" stroke="url(#w35)" stroke-width="1"/><polygon points="1228.5,230.3 1217.5,159.3 1221.7,159.7" fill="url(#w36)" stroke="url(#w36)" stroke-width="1"/><polygon points="1228.5,230.3 1218.9,159.4 1223.1,159.8" fill="url(#w37)" stroke="url(#w37)" stroke-width="1"/><polygon points="1228.5,230.3 1220.3,159.5 1224.5,159.9" fill="url(#w38)" stroke="url(#w38)" stroke-width="1"/><polygon points="1228.5,230.3 1221.7,159.7 1225.8,160.1" fill="url(#w39)" stroke="url(#w39)" stroke-width="1"/><polygon points="1228.5,230.3 1223.1,159.8 1227.2,160.2" fill="url(#w40)" stroke="url(#w40)" stroke-width="1"/><polygon points="1228.5,230.3 1224.5,159.9 1228.6,160.3" fill="url(#w41)" stroke="url(#w41)" stroke-width="1"/><polygon points="1228.5,230.3 1225.8,160.1 1230.0,160.5" fill="url(#w42)" stroke="url(#w42)" stroke-width="1"/><polygon points="1228.5,230.3 1227.2,160.2 1231.4,160.6" fill="url(#w43)" stroke="url(#w43)" stroke-width="1"/><polygon points="1228.5,230.3 1228.6,160.3 1232.8,160.7" fill="url(#w44)" stroke="url(#w44)" stroke-width="1"/><polygon points="1228.5,230.3 1230.0,160.5 1234.2,160.8" fill="url(#w45)" stroke="url(#w45)" stroke-width="1"/><polygon points="1228.5,230.3 1231.4,160.6 1235.6,161.0" fill="url(#w46)" stroke="url(#w46)" stroke-width="1"/><polygon points="1228.5,230.3 1232.8,160.7 1237.0,161.1" fill="url(#w47)" stroke="url(#w47)" stroke-width="1"/><polygon points="1228.5,230.3 1234.2,160.8 1238.3,161.2" fill="url(#w48)" stroke="url(#w48)" stroke-width="1"/><polygon points="1228.5,230.3 1235.6,161.0 1239.7,161.4" fill="url(#w49)" stroke="url(#w49)" stroke-width="1"/><polygon points="1228.5,230.3 1237.0,161.1 1241.1,161.5" fill="url(#w50)" stroke="url(#w50)" stroke-width="1"/><polygon points="1228.5,230.3 1238.3,161.2 1242.5,161.6" fill="url(#w51)" stroke="url(#w51)" stroke-width="1"/><polygon points="1228.5,230.3 1239.7,161.4 1243.9,161.8" fill="url(#w52)" stroke="url(#w52)" stroke-width="1"/><polygon points="1228.5,230.3 1241.1,161.5 1245.3,161.9" fill="url(#w53)" stroke="url(#w53)" stroke-width="1"/><polygon points="1228.5,230.3 1242.5,161.6 1246.7,162.0" fill="url(#w54)" stroke="url(#w54)" stroke-width="1"/><polygon points="1228.5,230.3 1243.9,161.8 1248.0,162.1" fill="url(#w55)" stroke="url(#w55)" stroke-width="1"/><polygon points="1228.5,230.3 1245.3,161.9 1249.4,162.3" fill="url(#w56)" stroke="url(#w56)" stroke-width="1"/><polygon points="1228.5,230.3 1246.7,162.0 1250.8,162.4" fill="url(#w57)" stroke="url(#w57)" stroke-width="1"/><polygon points="1228.5,230.3 1247.4,162.1 1254.3,162.7" fill="url(#w58)" stroke="url(#w58)" stroke-width="1"/><polygon points="1228.5,230.3 1250.1,162.3 1257.1,163.0" fill="url(#w59)" stroke="url(#w59)" stroke-width="1"/><polygon points="1228.5,230.3 1252.9,162.6 1259.8,163.2" fill="url(#w60)" stroke="url(#w60)" stroke-width="1"/><polygon points="1228.5,230.3 1255.7,162.9 1262.6,163.5" fill="url(#w61)" stroke="url(#w61)" stroke-width="1"/><polygon points="1228.5,230.3 1258.5,163.1 1265.4,163.8" fill="url(#w62)" stroke="url(#w62)" stroke-width="1"/><polygon points="1228.5,230.3 1261.2,163.4 1268.2,164.0" fill="url(#w63)" stroke="url(#w63)" stroke-width="1"/><polygon points="1228.5,230.3 1264.0,163.6 1270.9,164.3" fill="url(#w64)" stroke="url(#w64)" stroke-width="1"/><polygon points="1228.5,230.3 1266.8,163.9 1273.7,164.5" fill="url(#w65)" stroke="url(#w65)" stroke-width="1"/><polygon points="1228.5,230.3 1268.9,164.1 1278.6,165.0" fill="url(#w66)" stroke="url(#w66)" stroke-width="1"/><polygon points="1228.5,230.3 1273.0,164.5 1282.7,165.4" fill="url(#w67)" stroke="url(#w67)" stroke-width="1"/><polygon points="1228.5,230.3 1277.2,164.9 1286.9,165.8" fill="url(#w68)" stroke="url(#w68)" stroke-width="1"/><polygon points="1228.5,230.3 1281.3,165.3 1291.1,166.2" fill="url(#w69)" stroke="url(#w69)" stroke-width="1"/><polygon points="1228.5,230.3 1285.2,165.6 1296.3,166.7" fill="url(#w70)" stroke="url(#w70)" stroke-width="1"/><polygon points="1228.5,230.3 1289.7,166.0 1302.2,167.2" fill="url(#w71)" stroke="url(#w71)" stroke-width="1"/><polygon points="1228.5,230.3 1295.2,166.6 1307.7,167.7" fill="url(#w72)" stroke="url(#w72)" stroke-width="1"/><polygon points="1228.5,230.3 1300.4,167.0 1314.3,168.3" fill="url(#w73)" stroke="url(#w73)" stroke-width="1"/><polygon points="1228.5,230.3 1306.3,167.6 1321.6,169.0" fill="url(#w74)" stroke="url(#w74)" stroke-width="1"/><polygon points="1228.5,230.3 1312.9,168.2 1329.6,169.8" fill="url(#w75)" stroke="url(#w75)" stroke-width="1"/><polygon points="1228.5,230.3 1320.2,168.9 1338.2,170.6" fill="url(#w76)" stroke="url(#w76)" stroke-width="1"/><polygon points="1228.5,230.3 1328.2,169.6 1347.6,171.5" fill="url(#w77)" stroke="url(#w77)" stroke-width="1"/><polygon points="1228.5,230.3 1336.8,170.5 1357.7,172.4" fill="url(#w78)" stroke="url(#w78)" stroke-width="1"/><polygon points="1228.5,230.3 1345.9,171.3 1369.5,173.5" fill="url(#w79)" stroke="url(#w79)" stroke-width="1"/><polygon points="1228.5,230.3 1356.6,172.3 1381.6,174.7" fill="url(#w80)" stroke="url(#w80)" stroke-width="1"/><polygon points="1228.5,230.3 1367.7,173.4 1395.5,176.0" fill="url(#w81)" stroke="url(#w81)" stroke-width="1"/><polygon points="1228.5,230.3 1380.2,174.5 1410.7,177.4" fill="url(#w82)" stroke="url(#w82)" stroke-width="1"/><polygon points="1228.5,230.3 1393.7,175.8 1428.4,179.0" fill="url(#w83)" stroke="url(#w83)" stroke-width="1"/><polygon points="1228.5,230.3 1409.7,177.3 1447.2,180.8" fill="url(#w84)" stroke="url(#w84)" stroke-width="1"/><polygon points="1228.5,230.3 1427.0,178.9 1467.3,182.7" fill="url(#w85)" stroke="url(#w85)" stroke-width="1"/><polygon points="1228.5,230.3 1445.4,180.6 1489.8,184.8" fill="url(#w86)" stroke="url(#w86)" stroke-width="1"/><polygon points="1228.5,230.3 1468.0,182.7 1508.2,186.5" fill="url(#w87)" stroke="url(#w87)" stroke-width="1"/><polygon points="1228.5,230.3 1503.1,180.1 1483.1,200.5" fill="url(#w88)" stroke="url(#w88)" stroke-width="1"/><polygon points="1228.5,230.3 1493.1,190.3 1475.5,208.3" fill="url(#w89)" stroke="url(#w89)" stroke-width="1"/><polygon points="1228.5,230.3 1484.9,198.7 1467.3,216.7" fill="url(#w90)" stroke="url(#w90)" stroke-width="1"/><polygon points="1228.5,230.3 1476.4,207.4 1460.0,224.1" fill="url(#w91)" stroke="url(#w91)" stroke-width="1"/><polygon points="1228.5,230.3 1468.5,215.5 1453.2,231.0" fill="url(#w92)" stroke="url(#w92)" stroke-width="1"/><polygon points="1228.5,230.3 1461.4,222.6 1446.2,238.2" fill="url(#w93)" stroke="url(#w93)" stroke-width="1"/><polygon points="1228.5,230.3 1453.8,230.4 1440.9,243.6" fill="url(#w94)" stroke="url(#w94)" stroke-width="1"/><polygon points="1228.5,230.3 1448.0,236.4 1435.1,249.6" fill="url(#w95)" stroke="url(#w95)" stroke-width="1"/><polygon points="1228.5,230.3 1442.1,242.4 1429.2,255.6" fill="url(#w96)" stroke="url(#w96)" stroke-width="1"/><polygon points="1228.5,230.3 1436.2,248.4 1423.3,261.6" fill="url(#w97)" stroke="url(#w97)" stroke-width="1"/><polygon points="1228.5,230.3 1429.8,255.0 1419.2,265.7" fill="url(#w98)" stroke="url(#w98)" stroke-width="1"/><polygon points="1228.5,230.3 1425.1,259.8 1414.5,270.5" fill="url(#w99)" stroke="url(#w99)" stroke-width="1"/><polygon points="1228.5,230.3 1420.4,264.5 1409.9,275.3" fill="url(#w100)" stroke="url(#w100)" stroke-width="1"/><polygon points="1228.5,230.3 1415.7,269.3 1405.2,280.1" fill="url(#w101)" stroke="url(#w101)" stroke-width="1"/><polygon points="1228.5,230.3 1411.0,274.1 1400.5,284.9" fill="url(#w102)" stroke="url(#w102)" stroke-width="1"/><polygon points="1228.5,230.3 1405.7,279.5 1397.5,287.9" fill="url(#w103)" stroke="url(#w103)" stroke-width="1"/><polygon points="1228.5,230.3 1402.2,283.1 1394.0,291.5" fill="url(#w104)" stroke="url(#w104)" stroke-width="1"/><polygon points="1228.5,230.3 1398.7,286.7 1390.5,295.1" fill="url(#w105)" stroke="url(#w105)" stroke-width="1"/><polygon points="1228.5,230.3 1395.2,290.3 1387.0,298.7" fill="url(#w106)" stroke="url(#w106)" stroke-width="1"/><polygon points="1228.5,230.3 1391.7,293.9 1383.5,302.3" fill="url(#w107)" stroke="url(#w107)" stroke-width="1"/><polygon points="1228.5,230.3 1388.2,297.5 1380.0,305.8" fill="url(#w108)" stroke="url(#w108)" stroke-width="1"/><polygon points="1228.5,230.3 1384.6,301.1 1376.4,309.4" fill="url(#w109)" stroke="url(#w109)" stroke-width="1"/><polygon points="1228.5,230.3 1381.1,304.7 1372.9,313.0" fill="url(#w110)" stroke="url(#w110)" stroke-width="1"/><polygon points="1228.5,230.3 1377.0,308.8 1371.2,314.8" fill="url(#w111)" stroke="url(#w111)" stroke-width="1"/><polygon points="1228.5,230.3 1374.7,311.2 1368.8,317.2" fill="url(#w112)" stroke="url(#w112)" stroke-width="1"/><polygon points="1228.5,230.3 1372.3,313.6 1366.5,319.6" fill="url(#w113)" stroke="url(#w113)" stroke-width="1"/><polygon points="1228.5,230.3 1370.0,316.0 1364.1,322.0" fill="url(#w114)" stroke="url(#w114)" stroke-width="1"/><polygon points="1228.5,230.3 1367.6,318.4 1361.8,324.4" fill="url(#w115)" stroke="url(#w115)" stroke-width="1"/><polygon points="1228.5,230.3 1365.3,320.8 1359.4,326.8" fill="url(#w116)" stroke="url(#w116)" stroke-width="1"/><polygon points="1228.5,230.3 1362.9,323.2 1357.1,329.2" fill="url(#w117)" stroke="url(#w117)" stroke-width="1"/><polygon points="1228.5,230.3 1360.6,325.6 1354.7,331.6" fill="url(#w118)" stroke="url(#w118)" stroke-width="1"/><polygon points="1228.5,230.3 1358.3,328.0 1352.4,334.0" fill="url(#w119)" stroke="url(#w119)" stroke-width="1"/><polygon points="1228.5,230.3 1355.9,330.4 1350.0,336.4" fill="url(#w120)" stroke="url(#w120)" stroke-width="1"/><polygon points="1228.5,230.3 1353.6,332.8 1347.7,338.8" fill="url(#w121)" stroke="url(#w121)" stroke-width="1"/><polygon points="1228.5,230.3 1351.2,335.2 1345.4,341.2" fill="url(#w122)" stroke="url(#w122)" stroke-width="1"/><polygon points="1228.5,230.3 1348.9,337.6 1343.0,343.6" fill="url(#w123)" stroke="url(#w123)" stroke-width="1"/><polygon points="1228.5,230.3 1345.9,340.6 1342.4,344.2" fill="url(#w124)" stroke="url(#w124)" stroke-width="1"/><polygon points="1228.5,230.3 1345.1,341.5 1340.4,346.3" fill="url(#w125)" stroke="url(#w125)" stroke-width="1"/><polygon points="1228.5,230.3 1343.3,343.3 1338.6,348.0" fill="url(#w126)" stroke="url(#w126)" stroke-width="1"/><polygon points="1228.5,230.3 1341.8,344.8 1336.0,350.7" fill="url(#w127)" stroke="url(#w127)" stroke-width="1"/><polygon points="1228.5,230.3 1339.5,347.2 1333.6,353.1" fill="url(#w128)" stroke="url(#w128)" stroke-width="1"/><polygon points="1228.5,230.3 1337.1,349.5 1331.3,355.5" fill="url(#w129)" stroke="url(#w129)" stroke-width="1"/><polygon points="1228.5,230.3 1334.8,351.9 1328.9,357.9" fill="url(#w130)" stroke="url(#w130)" stroke-width="1"/><polygon points="1228.5,230.3 1332.5,354.3 1326.6,360.3" fill="url(#w131)" stroke="url(#w131)" stroke-width="1"/><polygon points="1228.5,230.3 1330.1,356.7 1324.3,362.7" fill="url(#w132)" stroke="url(#w132)" stroke-width="1"/><polygon points="1228.5,230.3 1327.8,359.1 1321.9,365.1" fill="url(#w133)" stroke="url(#w133)" stroke-width="1"/><polygon points="1228.5,230.3 1325.4,361.5 1319.6,367.5" fill="url(#w134)" stroke="url(#w134)" stroke-width="1"/><polygon points="1228.5,230.3 1323.1,363.9 1317.2,369.9" fill="url(#w135)" stroke="url(#w135)" stroke-width="1"/><polygon points="1228.5,230.3 1320.7,366.3 1314.9,372.3" fill="url(#w136)" stroke="url(#w136)" stroke-width="1"/><polygon points="1228.5,230.3 1318.4,368.7 1312.5,374.7" fill="url(#w137)" stroke="url(#w137)" stroke-width="1"/><polygon points="1228.5,230.3 1316.0,371.1 1310.2,377.1" fill="url(#w138)" stroke="url(#w138)" stroke-width="1"/><polygon points="1228.5,230.3 1313.7,373.5 1307.8,379.5" fill="url(#w139)" stroke="url(#w139)" stroke-width="1"/><polygon points="1228.5,230.3 1311.4,375.9 1305.5,381.9" fill="url(#w140)" stroke="url(#w140)" stroke-width="1"/><polygon points="1228.5,230.3 1309.3,378.0 1302.3,385.2" fill="url(#w141)" stroke="url(#w141)" stroke-width="1"/><polygon points="1228.5,230.3 1306.7,380.7 1298.5,389.1" fill="url(#w142)" stroke="url(#w142)" stroke-width="1"/><polygon points="1228.5,230.3 1303.1,384.3 1294.9,392.6" fill="url(#w143)" stroke="url(#w143)" stroke-width="1"/><polygon points="1228.5,230.3 1299.6,387.9 1291.4,396.2" fill="url(#w144)" stroke="url(#w144)" stroke-width="1"/><polygon points="1228.5,230.3 1296.1,391.4 1287.9,399.8" fill="url(#w145)" stroke="url(#w145)" stroke-width="1"/><polygon points="1228.5,230.3 1292.6,395.0 1284.4,403.4" fill="url(#w146)" stroke="url(#w146)" stroke-width="1"/><polygon points="1228.5,230.3 1289.1,398.6 1280.9,407.0" fill="url(#w147)" stroke="url(#w147)" stroke-width="1"/><polygon points="1228.5,230.3 1285.6,402.2 1277.3,410.6" fill="url(#w148)" stroke="url(#w148)" stroke-width="1"/><polygon points="1228.5,230.3 1282.0,405.8 1273.8,414.2" fill="url(#w149)" stroke="url(#w149)" stroke-width="1"/><polygon points="1228.5,230.3 1279.1,408.8 1268.6,419.6" fill="url(#w150)" stroke="url(#w150)" stroke-width="1"/><polygon points="1228.5,230.3 1274.4,413.6 1263.9,424.4" fill="url(#w151)" stroke="url(#w151)" stroke-width="1"/><polygon points="1228.5,230.3 1269.7,418.4 1259.2,429.2" fill="url(#w152)" stroke="url(#w152)" stroke-width="1"/><polygon points="1228.5,230.3 1265.0,423.2 1254.5,433.9" fill="url(#w153)" stroke="url(#w153)" stroke-width="1"/><polygon points="1228.5,230.3 1260.3,428.0 1249.8,438.7" fill="url(#w154)" stroke="url(#w154)" stroke-width="1"/><polygon points="1228.5,230.3 1255.9,432.4 1244.2,444.4" fill="url(#w155)" stroke="url(#w155)" stroke-width="1"/><polygon points="1228.5,230.3 1251.0,437.5 1238.1,450.7" fill="url(#w156)" stroke="url(#w156)" stroke-width="1"/><polygon points="1228.5,230.3 1245.1,443.5 1232.2,456.7" fill="url(#w157)" stroke="url(#w157)" stroke-width="1"/><polygon points="1228.5,230.3 1239.2,449.5 1226.3,462.7" fill="url(#w158)" stroke="url(#w158)" stroke-width="1"/><polygon points="1228.5,230.3 1233.7,455.2 1219.6,469.6" fill="url(#w159)" stroke="url(#w159)" stroke-width="1"/><polygon points="1228.5,230.3 1227.5,461.5 1212.3,477.0" fill="url(#w160)" stroke="url(#w160)" stroke-width="1"/><polygon points="1228.5,230.3 1220.5,468.7 1205.2,484.2" fill="url(#w161)" stroke="url(#w161)" stroke-width="1"/><polygon points="1228.5,230.3 1212.3,477.0 1201.7,487.8" fill="url(#w162)" stroke="url(#w162)" stroke-width="1"/><polygon points="1228.5,230.3 1206.4,495.4 1199.7,454.3" fill="url(#w163)" stroke="url(#w163)" stroke-width="1"/><polygon points="1228.5,230.3 1203.0,474.9 1196.8,436.4" fill="url(#w164)" stroke="url(#w164)" stroke-width="1"/><polygon points="1228.5,230.3 1199.9,455.6 1194.1,419.8" fill="url(#w165)" stroke="url(#w165)" stroke-width="1"/><polygon points="1228.5,230.3 1197.0,437.7 1191.6,404.5" fill="url(#w166)" stroke="url(#w166)" stroke-width="1"/><polygon points="1228.5,230.3 1194.3,421.1 1189.4,390.6" fill="url(#w167)" stroke="url(#w167)" stroke-width="1"/><polygon points="1228.5,230.3 1191.9,405.9 1187.3,378.0" fill="url(#w168)" stroke="url(#w168)" stroke-width="1"/><polygon points="1228.5,230.3 1189.6,391.9 1185.5,366.7" fill="url(#w169)" stroke="url(#w169)" stroke-width="1"/><polygon points="1228.5,230.3 1187.6,379.3 1183.9,356.8" fill="url(#w170)" stroke="url(#w170)" stroke-width="1"/><polygon points="1228.5,230.3 1185.8,368.4 1182.3,347.1" fill="url(#w171)" stroke="url(#w171)" stroke-width="1"/><polygon points="1228.5,230.3 1184.1,358.1 1180.9,338.2" fill="url(#w172)" stroke="url(#w172)" stroke-width="1"/><polygon points="1228.5,230.3 1182.5,348.1 1179.7,330.9" fill="url(#w173)" stroke="url(#w173)" stroke-width="1"/><polygon points="1228.5,230.3 1181.2,340.2 1178.4,322.9" fill="url(#w174)" stroke="url(#w174)" stroke-width="1"/><polygon points="1228.5,230.3 1179.8,331.5 1177.5,316.9" fill="url(#w175)" stroke="url(#w175)" stroke-width="1"/><polygon points="1228.5,230.3 1178.8,324.9 1176.4,310.3" fill="url(#w176)" stroke="url(#w176)" stroke-width="1"/><polygon points="1228.5,230.3 1177.6,317.6 1175.6,305.7" fill="url(#w177)" stroke="url(#w177)" stroke-width="1"/><polygon points="1228.5,230.3 1176.7,312.3 1174.8,300.4" fill="url(#w178)" stroke="url(#w178)" stroke-width="1"/><polygon points="1228.5,230.3 1175.8,307.0 1173.9,295.1" fill="url(#w179)" stroke="url(#w179)" stroke-width="1"/><polygon points="1228.5,230.3 1174.9,301.0 1173.4,291.7" fill="url(#w180)" stroke="url(#w180)" stroke-width="1"/><polygon points="1228.5,230.3 1174.2,297.0 1172.7,287.8" fill="url(#w181)" stroke="url(#w181)" stroke-width="1"/><polygon points="1228.5,230.3 1173.6,293.1 1172.1,283.8" fill="url(#w182)" stroke="url(#w182)" stroke-width="1"/><polygon points="1228.5,230.3 1172.9,289.1 1171.4,279.8" fill="url(#w183)" stroke="url(#w183)" stroke-width="1"/><polygon points="1228.5,230.3 1172.3,285.1 1170.8,275.8" fill="url(#w184)" stroke="url(#w184)" stroke-width="1"/><polygon points="1228.5,230.3 1171.6,280.8 1170.3,272.8" fill="url(#w185)" stroke="url(#w185)" stroke-width="1"/><polygon points="1228.5,230.3 1171.0,277.1 1169.9,270.5" fill="url(#w186)" stroke="url(#w186)" stroke-width="1"/><polygon points="1228.5,230.3 1170.6,274.5 1169.5,267.8" fill="url(#w187)" stroke="url(#w187)" stroke-width="1"/><polygon points="1228.5,230.3 1170.2,271.8 1169.1,265.2" fill="url(#w188)" stroke="url(#w188)" stroke-width="1"/><polygon points="1228.5,230.3 1169.7,269.2 1168.7,262.5" fill="url(#w189)" stroke="url(#w189)" stroke-width="1"/><polygon points="1228.5,230.3 1169.3,266.5 1168.2,259.9" fill="url(#w190)" stroke="url(#w190)" stroke-width="1"/><polygon points="1228.5,230.3 1168.9,263.9 1167.8,257.2" fill="url(#w191)" stroke="url(#w191)" stroke-width="1"/><polygon points="1228.5,230.3 1168.4,261.2 1167.4,254.6" fill="url(#w192)" stroke="url(#w192)" stroke-width="1"/><polygon points="1228.5,230.3 1168.0,258.6 1166.9,251.9" fill="url(#w193)" stroke="url(#w193)" stroke-width="1"/><polygon points="1228.5,230.3 1167.5,255.2 1166.8,251.3" fill="url(#w194)" stroke="url(#w194)" stroke-width="1"/><polygon points="1228.5,230.3 1167.3,253.9 1166.6,249.9" fill="url(#w195)" stroke="url(#w195)" stroke-width="1"/><polygon points="1228.5,230.3 1167.0,252.6 1166.4,248.6" fill="url(#w196)" stroke="url(#w196)" stroke-width="1"/><polygon points="1228.5,230.3 1166.8,251.3 1166.2,247.3" fill="url(#w197)" stroke="url(#w197)" stroke-width="1"/><polygon points="1228.5,230.3 1166.6,249.9 1166.0,245.9" fill="url(#w198)" stroke="url(#w198)" stroke-width="1"/><polygon points="1228.5,230.3 1166.4,248.6 1165.8,244.6" fill="url(#w199)" stroke="url(#w199)" stroke-width="1"/><polygon points="1228.5,230.3 1166.2,247.3 1165.5,243.3" fill="url(#w200)" stroke="url(#w200)" stroke-width="1"/><polygon points="1228.5,230.3 1166.0,245.9 1165.3,242.0" fill="url(#w201)" stroke="url(#w201)" stroke-width="1"/><polygon points="1228.5,230.3 1165.8,244.6 1165.1,240.6" fill="url(#w202)" stroke="url(#w202)" stroke-width="1"/><polygon points="1228.5,230.3 1165.6,243.6 1164.7,238.3" fill="url(#w203)" stroke="url(#w203)" stroke-width="1"/><polygon points="1228.5,230.3 1165.2,241.3 1164.6,237.3" fill="url(#w204)" stroke="url(#w204)" stroke-width="1"/><polygon points="1228.5,230.3 1165.0,240.0 1164.4,236.0" fill="url(#w205)" stroke="url(#w205)" stroke-width="1"/><polygon points="1228.5,230.3 1164.8,238.6 1164.1,234.7" fill="url(#w206)" stroke="url(#w206)" stroke-width="1"/><polygon points="1228.5,230.3 1164.6,237.3 1163.9,233.3" fill="url(#w207)" stroke="url(#w207)" stroke-width="1"/><polygon points="1228.5,230.3 1164.4,236.0 1163.7,232.0" fill="url(#w208)" stroke="url(#w208)" stroke-width="1"/><polygon points="1228.5,230.3 1164.1,234.7 1163.5,230.7" fill="url(#w209)" stroke="url(#w209)" stroke-width="1"/><polygon points="1228.5,230.3 1163.9,233.3 1163.3,229.4" fill="url(#w210)" stroke="url(#w210)" stroke-width="1"/><polygon points="1228.5,230.3 1163.7,232.0 1163.1,228.0" fill="url(#w211)" stroke="url(#w211)" stroke-width="1"/><polygon points="1228.5,230.3 1163.5,230.7 1162.9,226.7" fill="url(#w212)" stroke="url(#w212)" stroke-width="1"/><polygon points="1228.5,230.3 1163.3,229.4 1162.6,225.4" fill="url(#w213)" stroke="url(#w213)" stroke-width="1"/><polygon points="1228.5,230.3 1163.1,228.0 1162.4,224.1" fill="url(#w214)" stroke="url(#w214)" stroke-width="1"/><polygon points="1228.5,230.3 1162.9,226.7 1162.2,222.7" fill="url(#w215)" stroke="url(#w215)" stroke-width="1"/><polygon points="1228.5,230.3 1162.6,225.4 1162.0,221.4" fill="url(#w216)" stroke="url(#w216)" stroke-width="1"/><polygon points="1228.5,230.3 1162.4,224.1 1161.8,220.1" fill="url(#w217)" stroke="url(#w217)" stroke-width="1"/><polygon points="1228.5,230.3 1162.2,222.7 1161.6,218.7" fill="url(#w218)" stroke="url(#w218)" stroke-width="1"/><polygon points="1228.5,230.3 1162.0,221.4 1161.3,217.4" fill="url(#w219)" stroke="url(#w219)" stroke-width="1"/><polygon points="1228.5,230.3 1161.8,220.1 1161.1,216.1" fill="url(#w220)" stroke="url(#w220)" stroke-width="1"/><polygon points="1228.5,230.3 1161.6,218.7 1160.9,214.8" fill="url(#w221)" stroke="url(#w221)" stroke-width="1"/><polygon points="1228.5,230.3 1161.3,217.4 1160.7,213.4" fill="url(#w222)" stroke="url(#w222)" stroke-width="1"/><polygon points="1228.5,230.3 1161.1,216.1 1160.5,212.1" fill="url(#w223)" stroke="url(#w223)" stroke-width="1"/><polygon points="1228.5,230.3 1160.9,214.8 1160.3,210.8" fill="url(#w224)" stroke="url(#w224)" stroke-width="1"/><polygon points="1228.5,230.3 1160.7,213.4 1160.1,209.5" fill="url(#w225)" stroke="url(#w225)" stroke-width="1"/><polygon points="1228.5,230.3 1160.5,212.1 1159.8,208.1" fill="url(#w226)" stroke="url(#w226)" stroke-width="1"/><polygon points="1228.5,230.3 1160.3,210.8 1159.6,206.8" fill="url(#w227)" stroke="url(#w227)" stroke-width="1"/><polygon points="1228.5,230.3 1160.1,209.5 1159.4,205.5" fill="url(#w228)" stroke="url(#w228)" stroke-width="1"/><polygon points="1228.5,230.3 1159.8,208.1 1159.2,204.1" fill="url(#w229)" stroke="url(#w229)" stroke-width="1"/><polygon points="1228.5,230.3 1159.7,207.5 1158.7,200.8" fill="url(#w230)" stroke="url(#w230)" stroke-width="1"/><polygon points="1228.5,230.3 1159.3,204.8 1158.2,198.2" fill="url(#w231)" stroke="url(#w231)" stroke-width="1"/><polygon points="1228.5,230.3 1158.9,202.2 1157.8,195.5" fill="url(#w232)" stroke="url(#w232)" stroke-width="1"/><polygon points="1228.5,230.3 1158.4,199.5 1157.4,192.9" fill="url(#w233)" stroke="url(#w233)" stroke-width="1"/><polygon points="1228.5,230.3 1158.0,196.8 1156.9,190.2" fill="url(#w234)" stroke="url(#w234)" stroke-width="1"/><polygon points="1228.5,230.3 1157.6,194.2 1156.5,187.6" fill="url(#w235)" stroke="url(#w235)" stroke-width="1"/><polygon points="1228.5,230.3 1157.2,191.5 1156.1,184.9" fill="url(#w236)" stroke="url(#w236)" stroke-width="1"/><polygon points="1228.5,230.3 1156.7,188.9 1155.7,182.2" fill="url(#w237)" stroke="url(#w237)" stroke-width="1"/><polygon points="1228.5,230.3 1156.3,186.2 1155.2,179.6" fill="url(#w238)" stroke="url(#w238)" stroke-width="1"/><polygon points="1228.5,230.3 1155.9,183.6 1154.8,176.9" fill="url(#w239)" stroke="url(#w239)" stroke-width="1"/><polygon points="1228.5,230.3 1155.4,180.9 1154.4,174.3" fill="url(#w240)" stroke="url(#w240)" stroke-width="1"/><polygon points="1228.5,230.3 1155.0,178.3 1153.9,171.6" fill="url(#w241)" stroke="url(#w241)" stroke-width="1"/><polygon points="1228.5,230.3 1154.6,175.6 1153.5,169.0" fill="url(#w242)" stroke="url(#w242)" stroke-width="1"/><polygon points="1228.5,230.3 1154.1,173.0 1153.1,166.3" fill="url(#w243)" stroke="url(#w243)" stroke-width="1"/><polygon points="1228.5,230.3 1153.7,170.3 1152.6,163.7" fill="url(#w244)" stroke="url(#w244)" stroke-width="1"/><polygon points="1228.5,230.3 1153.3,167.6 1152.2,161.0" fill="url(#w245)" stroke="url(#w245)" stroke-width="1"/><polygon points="1228.5,230.3 1152.9,165.0 1151.8,158.4" fill="url(#w246)" stroke="url(#w246)" stroke-width="1"/><polygon points="1228.5,230.3 1152.4,162.3 1151.4,155.7" fill="url(#w247)" stroke="url(#w247)" stroke-width="1"/><polygon points="1228.5,230.3 1152.0,159.7 1150.9,153.0" fill="url(#w248)" stroke="url(#w248)" stroke-width="1"/><polygon points="1228.5,230.3 1151.5,156.7 1150.7,151.4" fill="url(#w249)" stroke="url(#w249)" stroke-width="1"/><polygon points="1228.5,230.3 1493.6,185.1 1511.3,183.3 1494.3,189.1" fill="url(#w250)" stroke="url(#w250)" stroke-width="1"/><polygon points="1228.5,230.3 1208.2,481.2 1203.4,497.6 1204.0,480.8" fill="url(#w251)" stroke="url(#w251)" stroke-width="1"/><polygon points="1228.5,230.3 1151.6,157.0 1147.0,149.2 1155.1,153.4" fill="url(#w252)" stroke="url(#w252)" stroke-width="1"/><circle cx="1228.5" cy="230.3" r="9" fill="url(#wspot)"/></g></g></g><line x1="1017.5" y1="123" x2="1656" y2="123" stroke="#a4a4a4" stroke-width="1.5"/><line x1="1017.8" y1="123" x2="1017.8" y2="614.3" stroke="#a4a4a4" stroke-width="2"/><line x1="1017" y1="614.3" x2="1656" y2="614.3" stroke="#a4a4a4" stroke-width="1.6"/><line x1="1012" y1="614.3" x2="1017.8" y2="614.3" stroke="#a4a4a4" stroke-width="1.5"/><line x1="1012" y1="573.4" x2="1017.8" y2="573.4" stroke="#a4a4a4" stroke-width="1.5"/><line x1="1012" y1="532.5" x2="1017.8" y2="532.5" stroke="#a4a4a4" stroke-width="1.5"/><line x1="1012" y1="491.6" x2="1017.8" y2="491.6" stroke="#a4a4a4" stroke-width="1.5"/><line x1="1012" y1="450.7" x2="1017.8" y2="450.7" stroke="#a4a4a4" stroke-width="1.5"/><line x1="1012" y1="409.8" x2="1017.8" y2="409.8" stroke="#a4a4a4" stroke-width="1.5"/><line x1="1012" y1="368.9" x2="1017.8" y2="368.9" stroke="#a4a4a4" stroke-width="1.5"/><line x1="1012" y1="328.0" x2="1017.8" y2="328.0" stroke="#a4a4a4" stroke-width="1.5"/><line x1="1012" y1="287.1" x2="1017.8" y2="287.1" stroke="#a4a4a4" stroke-width="1.5"/><line x1="1012" y1="246.2" x2="1017.8" y2="246.2" stroke="#a4a4a4" stroke-width="1.5"/><line x1="1012" y1="205.3" x2="1017.8" y2="205.3" stroke="#a4a4a4" stroke-width="1.5"/><line x1="1012" y1="164.4" x2="1017.8" y2="164.4" stroke="#a4a4a4" stroke-width="1.5"/><line x1="1017.8" y1="614.3" x2="1017.8" y2="620" stroke="#a4a4a4" stroke-width="2"/><line x1="1071.0" y1="614.3" x2="1071.0" y2="620" stroke="#a4a4a4" stroke-width="1.3"/><line x1="1124.3" y1="614.3" x2="1124.3" y2="620" stroke="#a4a4a4" stroke-width="1.3"/><line x1="1177.5" y1="614.3" x2="1177.5" y2="620" stroke="#a4a4a4" stroke-width="1.3"/><line x1="1230.8" y1="614.3" x2="1230.8" y2="620" stroke="#a4a4a4" stroke-width="1.3"/><line x1="1284.0" y1="614.3" x2="1284.0" y2="620" stroke="#a4a4a4" stroke-width="1.3"/><line x1="1337.3" y1="614.3" x2="1337.3" y2="620" stroke="#a4a4a4" stroke-width="1.3"/><line x1="1390.5" y1="614.3" x2="1390.5" y2="620" stroke="#a4a4a4" stroke-width="1.3"/><line x1="1443.8" y1="614.3" x2="1443.8" y2="620" stroke="#a4a4a4" stroke-width="1.3"/><line x1="1497.0" y1="614.3" x2="1497.0" y2="620" stroke="#a4a4a4" stroke-width="1.3"/><line x1="1550.3" y1="614.3" x2="1550.3" y2="620" stroke="#a4a4a4" stroke-width="1.3"/><line x1="1603.5" y1="614.3" x2="1603.5" y2="620" stroke="#a4a4a4" stroke-width="1.3"/></svg>
<div class="t" style="left:960px;top:607.3px;width:52px;text-align:right;font-size:14px;color:#d8d8d8">0</div>
<div class="t" style="left:960px;top:566.4px;width:52px;text-align:right;font-size:14px;color:#d8d8d8">0,05</div>
<div class="t" style="left:960px;top:525.5px;width:52px;text-align:right;font-size:14px;color:#d8d8d8">0,1</div>
<div class="t" style="left:960px;top:484.6px;width:52px;text-align:right;font-size:14px;color:#d8d8d8">0,15</div>
<div class="t" style="left:960px;top:443.7px;width:52px;text-align:right;font-size:14px;color:#d8d8d8">0,2</div>
<div class="t" style="left:960px;top:402.8px;width:52px;text-align:right;font-size:14px;color:#d8d8d8">0,25</div>
<div class="t" style="left:960px;top:361.9px;width:52px;text-align:right;font-size:14px;color:#d8d8d8">0,3</div>
<div class="t" style="left:960px;top:321.0px;width:52px;text-align:right;font-size:14px;color:#d8d8d8">0,35</div>
<div class="t" style="left:960px;top:280.1px;width:52px;text-align:right;font-size:14px;color:#d8d8d8">0,4</div>
<div class="t" style="left:960px;top:239.2px;width:52px;text-align:right;font-size:14px;color:#d8d8d8">0,45</div>
<div class="t" style="left:960px;top:198.3px;width:52px;text-align:right;font-size:14px;color:#d8d8d8">0,5</div>
<div class="t" style="left:960px;top:157.4px;width:52px;text-align:right;font-size:14px;color:#d8d8d8">0,55</div>
<div class="t" style="left:987.8px;top:624px;width:60px;text-align:center;font-size:14px;color:#d8d8d8">0</div>
<div class="t" style="left:1041.0px;top:624px;width:60px;text-align:center;font-size:14px;color:#d8d8d8">0,05</div>
<div class="t" style="left:1094.3px;top:624px;width:60px;text-align:center;font-size:14px;color:#d8d8d8">0,1</div>
<div class="t" style="left:1147.5px;top:624px;width:60px;text-align:center;font-size:14px;color:#d8d8d8">0,15</div>
<div class="t" style="left:1200.8px;top:624px;width:60px;text-align:center;font-size:14px;color:#d8d8d8">0,2</div>
<div class="t" style="left:1254.0px;top:624px;width:60px;text-align:center;font-size:14px;color:#d8d8d8">0,25</div>
<div class="t" style="left:1307.3px;top:624px;width:60px;text-align:center;font-size:14px;color:#d8d8d8">0,3</div>
<div class="t" style="left:1360.5px;top:624px;width:60px;text-align:center;font-size:14px;color:#d8d8d8">0,35</div>
<div class="t" style="left:1413.8px;top:624px;width:60px;text-align:center;font-size:14px;color:#d8d8d8">0,4</div>
<div class="t" style="left:1467.0px;top:624px;width:60px;text-align:center;font-size:14px;color:#d8d8d8">0,45</div>
<div class="t" style="left:1520.3px;top:624px;width:60px;text-align:center;font-size:14px;color:#d8d8d8">0,5</div>
<div class="t" style="left:1573.5px;top:624px;width:60px;text-align:center;font-size:14px;color:#d8d8d8">0,55</div>
<svg class="a" style="left:980px;top:99px" width="676" height="545" viewBox="980 99 676 545"><rect x="1144.1" y="146.2" width="12.6" height="12.6" fill="rgba(255,255,255,0.14)" stroke="rgba(255,255,255,0.88)" stroke-width="1.7"/><rect x="1168.2" y="170.1" width="12.6" height="12.6" fill="rgba(255,255,255,0.14)" stroke="rgba(255,255,255,0.88)" stroke-width="1.7"/><rect x="1208.0" y="161.9" width="12.6" height="12.6" fill="rgba(255,255,255,0.14)" stroke="rgba(255,255,255,0.88)" stroke-width="1.7"/><rect x="1228.1" y="154.0" width="12.6" height="12.6" fill="rgba(255,255,255,0.14)" stroke="rgba(255,255,255,0.88)" stroke-width="1.7"/><rect x="1255.1" y="158.0" width="12.6" height="12.6" fill="rgba(255,255,255,0.14)" stroke="rgba(255,255,255,0.88)" stroke-width="1.7"/><rect x="1287.2" y="165.0" width="12.6" height="12.6" fill="rgba(255,255,255,0.14)" stroke="rgba(255,255,255,0.88)" stroke-width="1.7"/><rect x="1205.2" y="183.7" width="12.6" height="12.6" fill="rgba(255,255,255,0.14)" stroke="rgba(255,255,255,0.88)" stroke-width="1.7"/><rect x="1269.9" y="198.0" width="12.6" height="12.6" fill="rgba(255,255,255,0.14)" stroke="rgba(255,255,255,0.88)" stroke-width="1.7"/><rect x="1259.3" y="204.1" width="12.6" height="12.6" fill="rgba(255,255,255,0.14)" stroke="rgba(255,255,255,0.88)" stroke-width="1.7"/><rect x="1175.2" y="215.1" width="12.6" height="12.6" fill="rgba(255,255,255,0.14)" stroke="rgba(255,255,255,0.88)" stroke-width="1.7"/><rect x="1159.1" y="234.1" width="12.6" height="12.6" fill="rgba(255,255,255,0.14)" stroke="rgba(255,255,255,0.88)" stroke-width="1.7"/><rect x="1164.2" y="266.0" width="12.6" height="12.6" fill="rgba(255,255,255,0.14)" stroke="rgba(255,255,255,0.88)" stroke-width="1.7"/><rect x="1197.9" y="263.1" width="12.6" height="12.6" fill="rgba(255,255,255,0.14)" stroke="rgba(255,255,255,0.88)" stroke-width="1.7"/><rect x="1218.8" y="268.3" width="12.6" height="12.6" fill="rgba(255,255,255,0.14)" stroke="rgba(255,255,255,0.88)" stroke-width="1.7"/><rect x="1254.1" y="286.1" width="12.6" height="12.6" fill="rgba(255,255,255,0.14)" stroke="rgba(255,255,255,0.88)" stroke-width="1.7"/><rect x="1316.9" y="257.3" width="12.6" height="12.6" fill="rgba(255,255,255,0.14)" stroke="rgba(255,255,255,0.88)" stroke-width="1.7"/><rect x="1329.9" y="168.8" width="12.6" height="12.6" fill="rgba(255,255,255,0.14)" stroke="rgba(255,255,255,0.88)" stroke-width="1.7"/><rect x="1349.1" y="211.1" width="12.6" height="12.6" fill="rgba(255,255,255,0.14)" stroke="rgba(255,255,255,0.88)" stroke-width="1.7"/><rect x="1410.1" y="199.2" width="12.6" height="12.6" fill="rgba(255,255,255,0.14)" stroke="rgba(255,255,255,0.88)" stroke-width="1.7"/><rect x="1491.1" y="178.3" width="12.6" height="12.6" fill="rgba(255,255,255,0.14)" stroke="rgba(255,255,255,0.88)" stroke-width="1.7"/><rect x="1336.2" y="336.0" width="12.6" height="12.6" fill="rgba(255,255,255,0.14)" stroke="rgba(255,255,255,0.88)" stroke-width="1.7"/><rect x="1201.2" y="316.0" width="12.6" height="12.6" fill="rgba(255,255,255,0.14)" stroke="rgba(255,255,255,0.88)" stroke-width="1.7"/><rect x="1201.2" y="365.9" width="12.6" height="12.6" fill="rgba(255,255,255,0.14)" stroke="rgba(255,255,255,0.88)" stroke-width="1.7"/><rect x="1198.2" y="478.2" width="12.6" height="12.6" fill="rgba(255,255,255,0.14)" stroke="rgba(255,255,255,0.88)" stroke-width="1.7"/><rect x="1221.4" y="223.2" width="12" height="12" fill="none" stroke="#000" stroke-width="2.5"/><ellipse cx="1150.1" cy="152.5" rx="4.8" ry="4.4" fill="#10f010" stroke="#141414" stroke-width="1.15"/><ellipse cx="1173.6" cy="173.7" rx="4.8" ry="4.4" fill="#4e7a50" stroke="#141414" stroke-width="1.15"/><ellipse cx="1211.2" cy="167.5" rx="4.8" ry="4.4" fill="#a0a050" stroke="#141414" stroke-width="1.15"/><ellipse cx="1235.8" cy="160.3" rx="4.8" ry="4.4" fill="#f8f000" stroke="#141414" stroke-width="1.15"/><ellipse cx="1260.5" cy="164.3" rx="4.8" ry="4.4" fill="#d8b038" stroke="#141414" stroke-width="1.15"/><ellipse cx="1292.8" cy="169.9" rx="4.8" ry="4.4" fill="#d89a40" stroke="#141414" stroke-width="1.15"/><ellipse cx="1209.9" cy="187.4" rx="4.8" ry="4.4" fill="#5c6646" stroke="#141414" stroke-width="1.15"/><ellipse cx="1281.1" cy="202.4" rx="4.8" ry="4.4" fill="#6a5248" stroke="#141414" stroke-width="1.15"/><ellipse cx="1265.8" cy="209.5" rx="4.8" ry="4.4" fill="#b89080" stroke="#141414" stroke-width="1.15"/><ellipse cx="1181.5" cy="221.7" rx="4.8" ry="4.4" fill="#78b0a0" stroke="#141414" stroke-width="1.15"/><ellipse cx="1164.0" cy="240.9" rx="4.8" ry="4.4" fill="#10f0f0" stroke="#141414" stroke-width="1.15"/><ellipse cx="1168.7" cy="272.0" rx="4.8" ry="4.4" fill="#18809a" stroke="#141414" stroke-width="1.15"/><ellipse cx="1201.9" cy="269.4" rx="4.8" ry="4.4" fill="#5a7494" stroke="#141414" stroke-width="1.15"/><ellipse cx="1224.8" cy="275.1" rx="4.8" ry="4.4" fill="#8484b0" stroke="#141414" stroke-width="1.15"/><ellipse cx="1263.0" cy="297.8" rx="4.8" ry="4.4" fill="#5e3c70" stroke="#141414" stroke-width="1.15"/><ellipse cx="1325.1" cy="265.0" rx="4.8" ry="4.4" fill="#b85a98" stroke="#141414" stroke-width="1.15"/><ellipse cx="1336.6" cy="174.1" rx="4.8" ry="4.4" fill="#d08a38" stroke="#141414" stroke-width="1.15"/><ellipse cx="1359.8" cy="216.6" rx="4.8" ry="4.4" fill="#b86070" stroke="#141414" stroke-width="1.15"/><ellipse cx="1426.4" cy="202.4" rx="4.8" ry="4.4" fill="#a84850" stroke="#141414" stroke-width="1.15"/><ellipse cx="1496.0" cy="183.5" rx="4.8" ry="4.4" fill="#f01010" stroke="#141414" stroke-width="1.15"/><ellipse cx="1340.4" cy="345.2" rx="4.8" ry="4.4" fill="#f010f0" stroke="#141414" stroke-width="1.15"/><ellipse cx="1202.9" cy="326.3" rx="4.8" ry="4.4" fill="#5a6aa0" stroke="#141414" stroke-width="1.15"/><ellipse cx="1204.5" cy="384.2" rx="4.8" ry="4.4" fill="#5a6094" stroke="#141414" stroke-width="1.15"/><ellipse cx="1201.9" cy="490.0" rx="4.8" ry="4.4" fill="#1010f0" stroke="#141414" stroke-width="1.15"/><ellipse cx="1229.1" cy="230.1" rx="4.6" ry="4.1" fill="#a0a0a0" stroke="#000" stroke-width="1.1"/><path d="M1018,609 l5,4 l-5,1 z" fill="#000"/><defs><linearGradient id="insB" x1="0" y1="0" x2="1" y2="1"><stop offset="0" stop-color="#a8ff00"/><stop offset="0.5" stop-color="#ffff10"/><stop offset="1" stop-color="#ffb400"/></linearGradient><linearGradient id="insD" x1="0" y1="0" x2="1" y2="0.8"><stop offset="0" stop-color="#5a9000"/><stop offset="0.5" stop-color="#909600"/><stop offset="1" stop-color="#8a6400"/></linearGradient></defs><rect x="1453" y="442.5" width="198" height="130" fill="url(#insB)"/><polygon points="1453,442.5 1651,442.5 1651,558.8 1453,456.5" fill="url(#insD)"/><rect x="1453" y="442.5" width="198" height="130" fill="none" stroke="#7a7a7a" stroke-width="2"/><rect x="1545" y="500" width="13.5" height="13.5" fill="none" stroke="#f4f4f4" stroke-width="1.8"/><ellipse cx="1559.4" cy="503.9" rx="4.5" ry="4.3" fill="#f8f000" stroke="#000" stroke-width="1.2"/></svg>
<div class="a" style="left:1402px;top:582px;width:252px;height:27px;background:#2c2c2c"></div>
<div class="t" style="left:1400.5px;top:586px;font-size:20px;color:#e8e8e8">RGB Triplet: 255, 255, 0</div>
<div class="a" style="left:320px;top:664px;width:1340px;height:227px;background:#000"></div>
<div class="a" style="left:322px;top:665.5px;width:1340px;height:12.5px;background:#2e2e2e"></div>
<div class="a" style="left:322px;top:678px;width:1340px;height:11.5px;background:#171717"></div>
<div class="a" style="left:322px;top:689.50px;width:1340px;height:23.55px;background:#404040"></div>
<div class="a" style="left:322px;top:712.75px;width:1340px;height:23.55px;background:#808080"></div>
<div class="a" style="left:322px;top:736.00px;width:1340px;height:23.55px;background:#404040"></div>
<div class="a" style="left:322px;top:759.25px;width:1340px;height:23.55px;background:#808080"></div>
<div class="a" style="left:322px;top:782.50px;width:1340px;height:23.55px;background:#404040"></div>
<div class="a" style="left:322px;top:805.75px;width:1340px;height:23.55px;background:#808080"></div>
<div class="a" style="left:322px;top:829.00px;width:1340px;height:23.55px;background:#404040"></div>
<div class="a" style="left:322px;top:852.25px;width:1340px;height:23.55px;background:#808080"></div>
<div class="a" style="left:322px;top:875.5px;width:1340px;height:15px;background:#646464"></div>
<div class="a" style="left:323px;top:876.5px;width:16px;height:13px;background:#7c7c7c;border-radius:3px"></div>
<div class="a" style="left:327px;top:878.0px;width:0;height:0;border-top:5px solid transparent;border-bottom:5px solid transparent;border-right:6px solid #3c3c3c"></div>
<div class="a" style="left:343px;top:877.0px;width:642px;height:12px;background:#434343;border-radius:6px"></div>
<div class="a" style="left:1648px;top:876.5px;width:14px;height:13px;background:#7c7c7c;border-radius:3px"></div>
<div class="t" style="left:493.00px;top:671.50px;font-size:13.6px;font-weight:bold;color:#f2f2f2;transform:scaleX(1.2784);transform-origin:0 0;">White</div>
<div class="t" style="left:487.8px;top:694.1px;font-size:15px;color:#f2f2f2;transform:scaleX(1.2);transform-origin:0 0">0,31</div>
<div class="t" style="left:487.8px;top:717.4px;font-size:15px;color:#f2f2f2;transform:scaleX(1.2);transform-origin:0 0">0,33</div>
<div class="t" style="left:487.8px;top:740.6px;font-size:15px;color:#f2f2f2;transform:scaleX(1.2);transform-origin:0 0">775,63</div>
<div class="t" style="left:487.8px;top:763.9px;font-size:15px;color:#f2f2f2;transform:scaleX(1.2);transform-origin:0 0">0,31</div>
<div class="t" style="left:487.8px;top:787.1px;font-size:15px;color:#f2f2f2;transform:scaleX(1.2);transform-origin:0 0">0,33</div>
<div class="t" style="left:487.8px;top:810.4px;font-size:15px;color:#f2f2f2;transform:scaleX(1.2);transform-origin:0 0">775,63</div>
<div class="t" style="left:487.8px;top:833.6px;font-size:15px;color:#f2f2f2;transform:scaleX(1.2);transform-origin:0 0">0,87</div>
<div class="t" style="left:487.8px;top:856.9px;font-size:15px;color:#f2f2f2;transform:scaleX(1.2);transform-origin:0 0">0,86</div>
<div class="t" style="left:554.50px;top:671.50px;font-size:13.6px;font-weight:bold;color:#f2f2f2;transform:scaleX(1.2388);transform-origin:0 0;">Gray 80</div>
<div class="t" style="left:554.5px;top:694.1px;font-size:15px;color:#f2f2f2;transform:scaleX(1.2);transform-origin:0 0">0,31</div>
<div class="t" style="left:554.5px;top:717.4px;font-size:15px;color:#f2f2f2;transform:scaleX(1.2);transform-origin:0 0">0,33</div>
<div class="t" style="left:554.5px;top:740.6px;font-size:15px;color:#f2f2f2;transform:scaleX(1.2);transform-origin:0 0">606,17</div>
<div class="t" style="left:554.5px;top:763.9px;font-size:15px;color:#f2f2f2;transform:scaleX(1.2);transform-origin:0 0">0,31</div>
<div class="t" style="left:554.5px;top:787.1px;font-size:15px;color:#f2f2f2;transform:scaleX(1.2);transform-origin:0 0">0,33</div>
<div class="t" style="left:554.5px;top:810.4px;font-size:15px;color:#f2f2f2;transform:scaleX(1.2);transform-origin:0 0">613,76</div>
<div class="t" style="left:554.5px;top:833.6px;font-size:15px;color:#f2f2f2;transform:scaleX(1.2);transform-origin:0 0">1,07</div>
<div class="t" style="left:554.5px;top:856.9px;font-size:15px;color:#f2f2f2;transform:scaleX(1.2);transform-origin:0 0">1,33</div>
<div class="t" style="left:625.30px;top:671.50px;font-size:13.6px;font-weight:bold;color:#f2f2f2;transform:scaleX(1.2060);transform-origin:0 0;">Gray 65</div>
<div class="t" style="left:625.3px;top:694.1px;font-size:15px;color:#f2f2f2;transform:scaleX(1.2);transform-origin:0 0">0,31</div>
<div class="t" style="left:625.3px;top:717.4px;font-size:15px;color:#f2f2f2;transform:scaleX(1.2);transform-origin:0 0">0,33</div>
<div class="t" style="left:625.3px;top:740.6px;font-size:15px;color:#f2f2f2;transform:scaleX(1.2);transform-origin:0 0">485,13</div>
<div class="t" style="left:625.3px;top:763.9px;font-size:15px;color:#f2f2f2;transform:scaleX(1.2);transform-origin:0 0">0,31</div>
<div class="t" style="left:625.3px;top:787.1px;font-size:15px;color:#f2f2f2;transform:scaleX(1.2);transform-origin:0 0">0,33</div>
<div class="t" style="left:625.3px;top:810.4px;font-size:15px;color:#f2f2f2;transform:scaleX(1.2);transform-origin:0 0">494,54</div>
<div class="t" style="left:625.3px;top:833.6px;font-size:15px;color:#f2f2f2;transform:scaleX(1.2);transform-origin:0 0">1,00</div>
<div class="t" style="left:625.3px;top:856.9px;font-size:15px;color:#f2f2f2;transform:scaleX(1.2);transform-origin:0 0">1,68</div>
<div class="t" style="left:696.10px;top:671.50px;font-size:13.6px;font-weight:bold;color:#f2f2f2;transform:scaleX(1.2388);transform-origin:0 0;">Gray 50</div>
<div class="t" style="left:696.1px;top:694.1px;font-size:15px;color:#f2f2f2;transform:scaleX(1.2);transform-origin:0 0">0,31</div>
<div class="t" style="left:696.1px;top:717.4px;font-size:15px;color:#f2f2f2;transform:scaleX(1.2);transform-origin:0 0">0,33</div>
<div class="t" style="left:696.1px;top:740.6px;font-size:15px;color:#f2f2f2;transform:scaleX(1.2);transform-origin:0 0">372,79</div>
<div class="t" style="left:696.1px;top:763.9px;font-size:15px;color:#f2f2f2;transform:scaleX(1.2);transform-origin:0 0">0,31</div>
<div class="t" style="left:696.1px;top:787.1px;font-size:15px;color:#f2f2f2;transform:scaleX(1.2);transform-origin:0 0">0,33</div>
<div class="t" style="left:696.1px;top:810.4px;font-size:15px;color:#f2f2f2;transform:scaleX(1.2);transform-origin:0 0">380,85</div>
<div class="t" style="left:696.1px;top:833.6px;font-size:15px;color:#f2f2f2;transform:scaleX(1.2);transform-origin:0 0">0,72</div>
<div class="t" style="left:696.1px;top:856.9px;font-size:15px;color:#f2f2f2;transform:scaleX(1.2);transform-origin:0 0">1,78</div>
<div class="t" style="left:767.00px;top:671.50px;font-size:13.6px;font-weight:bold;color:#f2f2f2;transform:scaleX(1.2040);transform-origin:0 0;">Gray 35</div>
<div class="t" style="left:766.9px;top:694.1px;font-size:15px;color:#f2f2f2;transform:scaleX(1.2);transform-origin:0 0">0,31</div>
<div class="t" style="left:766.9px;top:717.4px;font-size:15px;color:#f2f2f2;transform:scaleX(1.2);transform-origin:0 0">0,33</div>
<div class="t" style="left:766.9px;top:740.6px;font-size:15px;color:#f2f2f2;transform:scaleX(1.2);transform-origin:0 0">256,70</div>
<div class="t" style="left:766.9px;top:763.9px;font-size:15px;color:#f2f2f2;transform:scaleX(1.2);transform-origin:0 0">0,31</div>
<div class="t" style="left:766.9px;top:787.1px;font-size:15px;color:#f2f2f2;transform:scaleX(1.2);transform-origin:0 0">0,33</div>
<div class="t" style="left:766.9px;top:810.4px;font-size:15px;color:#f2f2f2;transform:scaleX(1.2);transform-origin:0 0">265,20</div>
<div class="t" style="left:766.9px;top:833.6px;font-size:15px;color:#f2f2f2;transform:scaleX(1.2);transform-origin:0 0">1,05</div>
<div class="t" style="left:766.9px;top:856.9px;font-size:15px;color:#f2f2f2;transform:scaleX(1.2);transform-origin:0 0">2,59</div>
<div class="t" style="left:839.02px;top:671.50px;font-size:13.6px;font-weight:bold;color:#f2f2f2;transform:scaleX(1.1771);transform-origin:0 0;">Black</div>
<div class="t" style="left:837.7px;top:694.1px;font-size:15px;color:#f2f2f2;transform:scaleX(1.2);transform-origin:0 0">0,00</div>
<div class="t" style="left:837.7px;top:717.4px;font-size:15px;color:#f2f2f2;transform:scaleX(1.2);transform-origin:0 0">0,00</div>
<div class="t" style="left:837.7px;top:740.6px;font-size:15px;color:#f2f2f2;transform:scaleX(1.2);transform-origin:0 0">0,00</div>
<div class="t" style="left:837.7px;top:763.9px;font-size:15px;color:#f2f2f2;transform:scaleX(1.2);transform-origin:0 0">0,31</div>
<div class="t" style="left:837.7px;top:787.1px;font-size:15px;color:#f2f2f2;transform:scaleX(1.2);transform-origin:0 0">0,33</div>
<div class="t" style="left:837.7px;top:810.4px;font-size:15px;color:#f2f2f2;transform:scaleX(1.2);transform-origin:0 0">0,00</div>
<div class="t" style="left:837.7px;top:833.6px;font-size:15px;color:#f2f2f2;transform:scaleX(1.2);transform-origin:0 0">0,03</div>
<div class="t" style="left:837.7px;top:856.9px;font-size:15px;color:#f2f2f2;transform:scaleX(1.2);transform-origin:0 0">42,37</div>
<div class="t" style="left:893.21px;top:671.50px;font-size:13.6px;font-weight:bold;color:#f2f2f2;transform:scaleX(1.1934);transform-origin:0 0;">Dark Skin</div>
<div class="t" style="left:894.4px;top:694.1px;font-size:15px;color:#f2f2f2;transform:scaleX(1.2);transform-origin:0 0">0,41</div>
<div class="t" style="left:894.4px;top:717.4px;font-size:15px;color:#f2f2f2;transform:scaleX(1.2);transform-origin:0 0">0,37</div>
<div class="t" style="left:894.4px;top:740.6px;font-size:15px;color:#f2f2f2;transform:scaleX(1.2);transform-origin:0 0">75,33</div>
<div class="t" style="left:894.4px;top:763.9px;font-size:15px;color:#f2f2f2;transform:scaleX(1.2);transform-origin:0 0">0,40</div>
<div class="t" style="left:894.4px;top:787.1px;font-size:15px;color:#f2f2f2;transform:scaleX(1.2);transform-origin:0 0">0,36</div>
<div class="t" style="left:894.4px;top:810.4px;font-size:15px;color:#f2f2f2;transform:scaleX(1.2);transform-origin:0 0">78,13</div>
<div class="t" style="left:894.4px;top:833.6px;font-size:15px;color:#f2f2f2;transform:scaleX(1.2);transform-origin:0 0">0,94</div>
<div class="t" style="left:894.4px;top:856.9px;font-size:15px;color:#f2f2f2;transform:scaleX(1.2);transform-origin:0 0">4,44</div>
<div class="t" style="left:978.85px;top:671.50px;font-size:13.6px;font-weight:bold;color:#f2f2f2;transform:scaleX(1.1484);transform-origin:0 0;">Light Skin</div>
<div class="t" style="left:978.0px;top:694.1px;font-size:15px;color:#f2f2f2;transform:scaleX(1.2);transform-origin:0 0">0,38</div>
<div class="t" style="left:978.0px;top:717.4px;font-size:15px;color:#f2f2f2;transform:scaleX(1.2);transform-origin:0 0">0,36</div>
<div class="t" style="left:978.0px;top:740.6px;font-size:15px;color:#f2f2f2;transform:scaleX(1.2);transform-origin:0 0">274,21</div>
<div class="t" style="left:978.0px;top:763.9px;font-size:15px;color:#f2f2f2;transform:scaleX(1.2);transform-origin:0 0">0,38</div>
<div class="t" style="left:978.0px;top:787.1px;font-size:15px;color:#f2f2f2;transform:scaleX(1.2);transform-origin:0 0">0,36</div>
<div class="t" style="left:978.0px;top:810.4px;font-size:15px;color:#f2f2f2;transform:scaleX(1.2);transform-origin:0 0">270,66</div>
<div class="t" style="left:978.0px;top:833.6px;font-size:15px;color:#f2f2f2;transform:scaleX(1.2);transform-origin:0 0">0,37</div>
<div class="t" style="left:978.0px;top:856.9px;font-size:15px;color:#f2f2f2;transform:scaleX(1.2);transform-origin:0 0">1,11</div>
<div class="t" style="left:1063.33px;top:671.50px;font-size:13.6px;font-weight:bold;color:#f2f2f2;transform:scaleX(1.1732);transform-origin:0 0;">Blue Sky</div>
<div class="t" style="left:1063.7px;top:694.1px;font-size:15px;color:#f2f2f2;transform:scaleX(1.2);transform-origin:0 0">0,25</div>
<div class="t" style="left:1063.7px;top:717.4px;font-size:15px;color:#f2f2f2;transform:scaleX(1.2);transform-origin:0 0">0,27</div>
<div class="t" style="left:1063.7px;top:740.6px;font-size:15px;color:#f2f2f2;transform:scaleX(1.2);transform-origin:0 0">144,96</div>
<div class="t" style="left:1063.7px;top:763.9px;font-size:15px;color:#f2f2f2;transform:scaleX(1.2);transform-origin:0 0">0,25</div>
<div class="t" style="left:1063.7px;top:787.1px;font-size:15px;color:#f2f2f2;transform:scaleX(1.2);transform-origin:0 0">0,27</div>
<div class="t" style="left:1063.7px;top:810.4px;font-size:15px;color:#f2f2f2;transform:scaleX(1.2);transform-origin:0 0">145,03</div>
<div class="t" style="left:1063.7px;top:833.6px;font-size:15px;color:#f2f2f2;transform:scaleX(1.2);transform-origin:0 0">1,13</div>
<div class="t" style="left:1063.7px;top:856.9px;font-size:15px;color:#f2f2f2;transform:scaleX(1.2);transform-origin:0 0">2,52</div>
<div class="t" style="left:1139.59px;top:671.50px;font-size:13.6px;font-weight:bold;color:#f2f2f2;transform:scaleX(1.2087);transform-origin:0 0;">Foliage</div>
<div class="t" style="left:1140.0px;top:694.1px;font-size:15px;color:#f2f2f2;transform:scaleX(1.2);transform-origin:0 0">0,34</div>
<div class="t" style="left:1140.0px;top:717.4px;font-size:15px;color:#f2f2f2;transform:scaleX(1.2);transform-origin:0 0">0,43</div>
<div class="t" style="left:1140.0px;top:740.6px;font-size:15px;color:#f2f2f2;transform:scaleX(1.2);transform-origin:0 0">98,97</div>
<div class="t" style="left:1140.0px;top:763.9px;font-size:15px;color:#f2f2f2;transform:scaleX(1.2);transform-origin:0 0">0,34</div>
<div class="t" style="left:1140.0px;top:787.1px;font-size:15px;color:#f2f2f2;transform:scaleX(1.2);transform-origin:0 0">0,43</div>
<div class="t" style="left:1140.0px;top:810.4px;font-size:15px;color:#f2f2f2;transform:scaleX(1.2);transform-origin:0 0">101,08</div>
<div class="t" style="left:1140.0px;top:833.6px;font-size:15px;color:#f2f2f2;transform:scaleX(1.2);transform-origin:0 0">0,84</div>
<div class="t" style="left:1140.0px;top:856.9px;font-size:15px;color:#f2f2f2;transform:scaleX(1.2);transform-origin:0 0">3,35</div>
<div class="t" style="left:1206.18px;top:671.50px;font-size:13.6px;font-weight:bold;color:#f2f2f2;transform:scaleX(1.2237);transform-origin:0 0;">Blue Flower</div>
<div class="t" style="left:1207.4px;top:694.1px;font-size:15px;color:#f2f2f2;transform:scaleX(1.2);transform-origin:0 0">0,27</div>
<div class="t" style="left:1207.4px;top:717.4px;font-size:15px;color:#f2f2f2;transform:scaleX(1.2);transform-origin:0 0">0,25</div>
<div class="t" style="left:1207.4px;top:740.6px;font-size:15px;color:#f2f2f2;transform:scaleX(1.2);transform-origin:0 0">181,57</div>
<div class="t" style="left:1207.4px;top:763.9px;font-size:15px;color:#f2f2f2;transform:scaleX(1.2);transform-origin:0 0">0,27</div>
<div class="t" style="left:1207.4px;top:787.1px;font-size:15px;color:#f2f2f2;transform:scaleX(1.2);transform-origin:0 0">0,25</div>
<div class="t" style="left:1207.4px;top:810.4px;font-size:15px;color:#f2f2f2;transform:scaleX(1.2);transform-origin:0 0">180,87</div>
<div class="t" style="left:1207.4px;top:833.6px;font-size:15px;color:#f2f2f2;transform:scaleX(1.2);transform-origin:0 0">0,46</div>
<div class="t" style="left:1207.4px;top:856.9px;font-size:15px;color:#f2f2f2;transform:scaleX(1.2);transform-origin:0 0">1,12</div>
<div class="t" style="left:1309.38px;top:671.50px;font-size:13.6px;font-weight:bold;color:#f2f2f2;transform:scaleX(1.2157);transform-origin:0 0;">Bluish Green</div>
<div class="t" style="left:1310.6px;top:694.1px;font-size:15px;color:#f2f2f2;transform:scaleX(1.2);transform-origin:0 0">0,26</div>
<div class="t" style="left:1310.6px;top:717.4px;font-size:15px;color:#f2f2f2;transform:scaleX(1.2);transform-origin:0 0">0,36</div>
<div class="t" style="left:1310.6px;top:740.6px;font-size:15px;color:#f2f2f2;transform:scaleX(1.2);transform-origin:0 0">328,70</div>
<div class="t" style="left:1310.6px;top:763.9px;font-size:15px;color:#f2f2f2;transform:scaleX(1.2);transform-origin:0 0">0,26</div>
<div class="t" style="left:1310.6px;top:787.1px;font-size:15px;color:#f2f2f2;transform:scaleX(1.2);transform-origin:0 0">0,36</div>
<div class="t" style="left:1310.6px;top:810.4px;font-size:15px;color:#f2f2f2;transform:scaleX(1.2);transform-origin:0 0">324,78</div>
<div class="t" style="left:1310.6px;top:833.6px;font-size:15px;color:#f2f2f2;transform:scaleX(1.2);transform-origin:0 0">0,42</div>
<div class="t" style="left:1310.6px;top:856.9px;font-size:15px;color:#f2f2f2;transform:scaleX(1.2);transform-origin:0 0">1,24</div>
<div class="t" style="left:1421.70px;top:671.50px;font-size:13.6px;font-weight:bold;color:#f2f2f2;transform:scaleX(1.2149);transform-origin:0 0;">Orange</div>
<div class="t" style="left:1421.7px;top:694.1px;font-size:15px;color:#f2f2f2;transform:scaleX(1.2);transform-origin:0 0">0,52</div>
<div class="t" style="left:1421.7px;top:717.4px;font-size:15px;color:#f2f2f2;transform:scaleX(1.2);transform-origin:0 0">0,41</div>
<div class="t" style="left:1421.7px;top:740.6px;font-size:15px;color:#f2f2f2;transform:scaleX(1.2);transform-origin:0 0">223,18</div>
<div class="t" style="left:1421.7px;top:763.9px;font-size:15px;color:#f2f2f2;transform:scaleX(1.2);transform-origin:0 0">0,51</div>
<div class="t" style="left:1421.7px;top:787.1px;font-size:15px;color:#f2f2f2;transform:scaleX(1.2);transform-origin:0 0">0,41</div>
<div class="t" style="left:1421.7px;top:810.4px;font-size:15px;color:#f2f2f2;transform:scaleX(1.2);transform-origin:0 0">219,88</div>
<div class="t" style="left:1421.7px;top:833.6px;font-size:15px;color:#f2f2f2;transform:scaleX(1.2);transform-origin:0 0">1,64</div>
<div class="t" style="left:1421.7px;top:856.9px;font-size:15px;color:#f2f2f2;transform:scaleX(1.2);transform-origin:0 0">5,75</div>
<div class="t" style="left:1488.30px;top:671.50px;font-size:13.6px;font-weight:bold;color:#f2f2f2;transform:scaleX(1.1953);transform-origin:0 0;">Purplish Blue</div>
<div class="t" style="left:1489.5px;top:694.1px;font-size:15px;color:#f2f2f2;transform:scaleX(1.2);transform-origin:0 0">0,21</div>
<div class="t" style="left:1489.5px;top:717.4px;font-size:15px;color:#f2f2f2;transform:scaleX(1.2);transform-origin:0 0">0,19</div>
<div class="t" style="left:1489.5px;top:740.6px;font-size:15px;color:#f2f2f2;transform:scaleX(1.2);transform-origin:0 0">88,26</div>
<div class="t" style="left:1489.5px;top:763.9px;font-size:15px;color:#f2f2f2;transform:scaleX(1.2);transform-origin:0 0">0,22</div>
<div class="t" style="left:1489.5px;top:787.1px;font-size:15px;color:#f2f2f2;transform:scaleX(1.2);transform-origin:0 0">0,19</div>
<div class="t" style="left:1489.5px;top:810.4px;font-size:15px;color:#f2f2f2;transform:scaleX(1.2);transform-origin:0 0">91,17</div>
<div class="t" style="left:1489.5px;top:833.6px;font-size:15px;color:#f2f2f2;transform:scaleX(1.2);transform-origin:0 0">1,08</div>
<div class="t" style="left:1489.5px;top:856.9px;font-size:15px;color:#f2f2f2;transform:scaleX(1.2);transform-origin:0 0">5,02</div>
<div class="t" style="left:1602.12px;top:671.50px;font-size:13.6px;font-weight:bold;color:#f2f2f2;transform:scaleX(1.1818);transform-origin:0 0;">Moderate Red</div>
<div class="t" style="left:1603.3px;top:694.1px;font-size:15px;color:#f2f2f2;transform:scaleX(1.2);transform-origin:0 0">0,47</div>
<div class="t" style="left:1603.3px;top:717.4px;font-size:15px;color:#f2f2f2;transform:scaleX(1.2);transform-origin:0 0">0,31</div>
<div class="t" style="left:1603.3px;top:740.6px;font-size:15px;color:#f2f2f2;transform:scaleX(1.2);transform-origin:0 0">144,96</div>
<div class="t" style="left:1603.3px;top:763.9px;font-size:15px;color:#f2f2f2;transform:scaleX(1.2);transform-origin:0 0">0,46</div>
<div class="t" style="left:1603.3px;top:787.1px;font-size:15px;color:#f2f2f2;transform:scaleX(1.2);transform-origin:0 0">0,31</div>
<div class="t" style="left:1603.3px;top:810.4px;font-size:15px;color:#f2f2f2;transform:scaleX(1.2);transform-origin:0 0">144,85</div>
<div class="t" style="left:1603.3px;top:833.6px;font-size:15px;color:#f2f2f2;transform:scaleX(1.2);transform-origin:0 0">0,54</div>
<div class="t" style="left:1603.3px;top:856.9px;font-size:15px;color:#f2f2f2;transform:scaleX(1.2);transform-origin:0 0">3,40</div>
<div class="t" style="left:336.80px;top:695.40px;font-size:14.6px;font-weight:bold;color:#f2f2f2;transform:scaleX(1.2456);transform-origin:0 0;">x: CIE31</div>
<div class="t" style="left:336.80px;top:718.65px;font-size:14.6px;font-weight:bold;color:#f2f2f2;transform:scaleX(1.2632);transform-origin:0 0;">y: CIE31</div>
<div class="t" style="left:336.80px;top:741.90px;font-size:14.6px;font-weight:bold;color:#f2f2f2;transform:scaleX(1.3111);transform-origin:0 0;">Y</div>
<div class="t" style="left:336.80px;top:765.15px;font-size:14.6px;font-weight:bold;color:#f2f2f2;transform:scaleX(1.2792);transform-origin:0 0;">Target x:CIE31</div>
<div class="t" style="left:336.80px;top:788.40px;font-size:14.6px;font-weight:bold;color:#f2f2f2;transform:scaleX(1.2792);transform-origin:0 0;">Target y:CIE31</div>
<div class="t" style="left:336.80px;top:811.65px;font-size:14.6px;font-weight:bold;color:#f2f2f2;transform:scaleX(1.3123);transform-origin:0 0;">Target Y</div>
<div class="t" style="left:336.80px;top:834.90px;font-size:14.6px;font-weight:bold;color:#f2f2f2;transform:scaleX(1.3211);transform-origin:0 0;">&#916;E 2000</div>
<div class="t" style="left:336.80px;top:858.15px;font-size:14.6px;font-weight:bold;color:#f2f2f2;transform:scaleX(1.2766);transform-origin:0 0;">&#916;E ITP</div>
<div class="a" style="left:-33.4px;top:932.5px;width:62.5px;height:60.5px;border-radius:5px;background:linear-gradient(#b2b2b2,#8a8a8a 55%,#6c6c6c)"></div>
<div class="a" style="left:-26.6px;top:938.8px;width:49.5px;height:15px;border-radius:5px;background:#8480c0;box-shadow:inset 0 0 2px rgba(0,0,0,0.55)"></div>
<div class="t" style="left:-33.4px;top:962.3px;width:62.5px;text-align:center;font-size:12.5px;font-weight:bold;line-height:15px;color:#262626"><span style="display:inline-block;text-align:left">Blue<br>Flower</span></div>
<div class="a" style="left:31.6px;top:932.5px;width:62.5px;height:60.5px;border-radius:5px;background:linear-gradient(#b2b2b2,#8a8a8a 55%,#6c6c6c)"></div>
<div class="a" style="left:38.4px;top:938.8px;width:49.5px;height:15px;border-radius:5px;background:#62c2aa;box-shadow:inset 0 0 2px rgba(0,0,0,0.55)"></div>
<div class="t" style="left:31.6px;top:962.3px;width:62.5px;text-align:center;font-size:12.5px;font-weight:bold;line-height:15px;color:#262626"><span style="display:inline-block;text-align:left">Bluish<br>Green</span></div>
<div class="a" style="left:96.6px;top:932.5px;width:62.5px;height:60.5px;border-radius:5px;background:linear-gradient(#b2b2b2,#8a8a8a 55%,#6c6c6c)"></div>
<div class="a" style="left:103.4px;top:938.8px;width:49.5px;height:30px;border-radius:5px;background:#e07a2a;box-shadow:inset 0 0 2px rgba(0,0,0,0.55)"></div>
<div class="t" style="left:96.6px;top:977.5px;width:62.5px;text-align:center;font-size:12.5px;font-weight:bold;color:#262626">Orange</div>
<div class="a" style="left:161.6px;top:932.5px;width:62.5px;height:60.5px;border-radius:5px;background:linear-gradient(#b2b2b2,#8a8a8a 55%,#6c6c6c)"></div>
<div class="a" style="left:168.4px;top:938.8px;width:49.5px;height:15px;border-radius:5px;background:#4a5cb0;box-shadow:inset 0 0 2px rgba(0,0,0,0.55)"></div>
<div class="t" style="left:161.6px;top:962.3px;width:62.5px;text-align:center;font-size:12.5px;font-weight:bold;line-height:15px;color:#262626"><span style="display:inline-block;text-align:left">Purplish<br>Blue</span></div>
<div class="a" style="left:226.6px;top:932.5px;width:62.5px;height:60.5px;border-radius:5px;background:linear-gradient(#b2b2b2,#8a8a8a 55%,#6c6c6c)"></div>
<div class="a" style="left:233.4px;top:938.8px;width:49.5px;height:15px;border-radius:5px;background:#d05a68;box-shadow:inset 0 0 2px rgba(0,0,0,0.55)"></div>
<div class="t" style="left:226.6px;top:962.3px;width:62.5px;text-align:center;font-size:12.5px;font-weight:bold;line-height:15px;color:#262626"><span style="display:inline-block;text-align:left">Moderate<br>Red</span></div>
<div class="a" style="left:291.6px;top:932.5px;width:62.5px;height:60.5px;border-radius:5px;background:linear-gradient(#b2b2b2,#8a8a8a 55%,#6c6c6c)"></div>
<div class="a" style="left:298.4px;top:938.8px;width:49.5px;height:30px;border-radius:5px;background:#5e3c78;box-shadow:inset 0 0 2px rgba(0,0,0,0.55)"></div>
<div class="t" style="left:291.6px;top:977.5px;width:62.5px;text-align:center;font-size:12.5px;font-weight:bold;color:#262626">Purple</div>
<div class="a" style="left:356.6px;top:932.5px;width:62.5px;height:60.5px;border-radius:5px;background:linear-gradient(#b2b2b2,#8a8a8a 55%,#6c6c6c)"></div>
<div class="a" style="left:363.4px;top:938.8px;width:49.5px;height:15px;border-radius:5px;background:#a2c244;box-shadow:inset 0 0 2px rgba(0,0,0,0.55)"></div>
<div class="t" style="left:356.6px;top:962.3px;width:62.5px;text-align:center;font-size:12.5px;font-weight:bold;line-height:15px;color:#262626"><span style="display:inline-block;text-align:left">Yellow<br>Green</span></div>
<div class="a" style="left:421.6px;top:932.5px;width:62.5px;height:60.5px;border-radius:5px;background:linear-gradient(#b2b2b2,#8a8a8a 55%,#6c6c6c)"></div>
<div class="a" style="left:428.4px;top:938.8px;width:49.5px;height:15px;border-radius:5px;background:#eaa232;box-shadow:inset 0 0 2px rgba(0,0,0,0.55)"></div>
<div class="t" style="left:421.6px;top:962.3px;width:62.5px;text-align:center;font-size:12.5px;font-weight:bold;line-height:15px;color:#262626"><span style="display:inline-block;text-align:left">Orange<br>Yellow</span></div>
<div class="a" style="left:486.6px;top:932.5px;width:62.5px;height:60.5px;border-radius:5px;background:linear-gradient(#b2b2b2,#8a8a8a 55%,#6c6c6c)"></div>
<div class="a" style="left:493.4px;top:938.8px;width:49.5px;height:30px;border-radius:5px;background:#3040a8;box-shadow:inset 0 0 2px rgba(0,0,0,0.55)"></div>
<div class="t" style="left:486.6px;top:977.5px;width:62.5px;text-align:center;font-size:12.5px;font-weight:bold;color:#262626">Blue</div>
<div class="a" style="left:551.6px;top:932.5px;width:62.5px;height:60.5px;border-radius:5px;background:linear-gradient(#b2b2b2,#8a8a8a 55%,#6c6c6c)"></div>
<div class="a" style="left:558.4px;top:938.8px;width:49.5px;height:30px;border-radius:5px;background:#44a048;box-shadow:inset 0 0 2px rgba(0,0,0,0.55)"></div>
<div class="t" style="left:551.6px;top:977.5px;width:62.5px;text-align:center;font-size:12.5px;font-weight:bold;color:#262626">Green</div>
<div class="a" style="left:616.6px;top:932.5px;width:62.5px;height:60.5px;border-radius:5px;background:linear-gradient(#b2b2b2,#8a8a8a 55%,#6c6c6c)"></div>
<div class="a" style="left:623.4px;top:938.8px;width:49.5px;height:30px;border-radius:5px;background:#c0363c;box-shadow:inset 0 0 2px rgba(0,0,0,0.55)"></div>
<div class="t" style="left:616.6px;top:977.5px;width:62.5px;text-align:center;font-size:12.5px;font-weight:bold;color:#262626">Red</div>
<div class="a" style="left:681.6px;top:932.5px;width:62.5px;height:60.5px;border-radius:5px;background:linear-gradient(#b2b2b2,#8a8a8a 55%,#6c6c6c)"></div>
<div class="a" style="left:688.4px;top:938.8px;width:49.5px;height:30px;border-radius:5px;background:#f0c828;box-shadow:inset 0 0 2px rgba(0,0,0,0.55)"></div>
<div class="t" style="left:681.6px;top:977.5px;width:62.5px;text-align:center;font-size:12.5px;font-weight:bold;color:#262626">Yellow</div>
<div class="a" style="left:746.6px;top:932.5px;width:62.5px;height:60.5px;border-radius:5px;background:linear-gradient(#b2b2b2,#8a8a8a 55%,#6c6c6c)"></div>
<div class="a" style="left:753.4px;top:938.8px;width:49.5px;height:30px;border-radius:5px;background:#c056a0;box-shadow:inset 0 0 2px rgba(0,0,0,0.55)"></div>
<div class="t" style="left:746.6px;top:977.5px;width:62.5px;text-align:center;font-size:12.5px;font-weight:bold;color:#262626">Magenta</div>
<div class="a" style="left:811.6px;top:932.5px;width:62.5px;height:60.5px;border-radius:5px;background:linear-gradient(#b2b2b2,#8a8a8a 55%,#6c6c6c)"></div>
<div class="a" style="left:818.4px;top:938.8px;width:49.5px;height:30px;border-radius:5px;background:#0890b0;box-shadow:inset 0 0 2px rgba(0,0,0,0.55)"></div>
<div class="t" style="left:811.6px;top:977.5px;width:62.5px;text-align:center;font-size:12.5px;font-weight:bold;color:#262626">Cyan</div>
<div class="a" style="left:876.6px;top:932.5px;width:62.5px;height:60.5px;border-radius:5px;background:linear-gradient(#b2b2b2,#8a8a8a 55%,#6c6c6c)"></div>
<div class="a" style="left:883.4px;top:938.8px;width:49.5px;height:30px;border-radius:5px;background:#ff0000;box-shadow:inset 0 0 2px rgba(0,0,0,0.55)"></div>
<div class="t" style="left:876.6px;top:977.5px;width:62.5px;text-align:center;font-size:12.5px;font-weight:bold;color:#262626">100% Red</div>
<div class="a" style="left:941.6px;top:932.5px;width:62.5px;height:60.5px;border-radius:5px;background:linear-gradient(#b2b2b2,#8a8a8a 55%,#6c6c6c)"></div>
<div class="a" style="left:948.4px;top:938.8px;width:49.5px;height:15px;border-radius:5px;background:#00ff00;box-shadow:inset 0 0 2px rgba(0,0,0,0.55)"></div>
<div class="t" style="left:941.6px;top:962.3px;width:62.5px;text-align:center;font-size:12.5px;font-weight:bold;line-height:15px;color:#262626"><span style="display:inline-block;text-align:left">100%<br>Green</span></div>
<div class="a" style="left:1006.6px;top:932.5px;width:62.5px;height:60.5px;border-radius:5px;background:linear-gradient(#b2b2b2,#8a8a8a 55%,#6c6c6c)"></div>
<div class="a" style="left:1013.4px;top:938.8px;width:49.5px;height:15px;border-radius:5px;background:#0000ff;box-shadow:inset 0 0 2px rgba(0,0,0,0.55)"></div>
<div class="t" style="left:1006.6px;top:962.3px;width:62.5px;text-align:center;font-size:12.5px;font-weight:bold;line-height:15px;color:#262626"><span style="display:inline-block;text-align:left">100%<br>Blue</span></div>
<div class="a" style="left:1071.6px;top:932.5px;width:62.5px;height:60.5px;border-radius:5px;background:linear-gradient(#b2b2b2,#8a8a8a 55%,#6c6c6c)"></div>
<div class="a" style="left:1078.4px;top:938.8px;width:49.5px;height:15px;border-radius:5px;background:#00ffff;box-shadow:inset 0 0 2px rgba(0,0,0,0.55)"></div>
<div class="t" style="left:1071.6px;top:962.3px;width:62.5px;text-align:center;font-size:12.5px;font-weight:bold;line-height:15px;color:#262626"><span style="display:inline-block;text-align:left">100%<br>Cyan</span></div>
<div class="a" style="left:1136.6px;top:932.5px;width:62.5px;height:60.5px;border-radius:5px;background:linear-gradient(#b2b2b2,#8a8a8a 55%,#6c6c6c)"></div>
<div class="a" style="left:1143.4px;top:938.8px;width:49.5px;height:15px;border-radius:5px;background:#ff00ff;box-shadow:inset 0 0 2px rgba(0,0,0,0.55)"></div>
<div class="t" style="left:1136.6px;top:962.3px;width:62.5px;text-align:center;font-size:12.5px;font-weight:bold;line-height:15px;color:#262626"><span style="display:inline-block;text-align:left">100%<br>Magenta</span></div>
<div class="a" style="left:1201.6px;top:932.5px;width:62.5px;height:60.5px;border-radius:5px;background:#262626"></div>
<div class="a" style="left:1208.4px;top:938.8px;width:49.5px;height:15px;border-radius:5px;background:#ffff00;box-shadow:inset 0 0 2px rgba(0,0,0,0.55)"></div>
<div class="t" style="left:1201.6px;top:962.3px;width:62.5px;text-align:center;font-size:12.5px;font-weight:bold;line-height:15px;color:#ffffff"><span style="display:inline-block;text-align:left">100%<br>Yellow</span></div>
<div class="a" style="left:0;top:994.5px;width:1264px;height:9px;background:#5a5a5a"></div>
<div class="a" style="left:2px;top:996px;width:12px;height:10px;background:#7a7a7a;border-radius:3px"></div>
<div class="a" style="left:450px;top:995.5px;width:796px;height:10px;background:#434343;border-radius:5px"></div>
<div class="a" style="left:1250px;top:996px;width:13px;height:10px;background:#7a7a7a;border-radius:3px"></div>
<div class="a" style="left:1265px;top:932px;width:60px;height:22.5px;border-radius:5px 5px 0 0;background:linear-gradient(#b0b0b0,#808080)"></div>
<div class="a" style="left:1283px;top:935px;width:24px;height:19px;border-radius:12px 12px 0 0;background:linear-gradient(#888,#a0a0a0)"></div>
<div class="a" style="left:1289px;top:941px;width:0;height:0;border-left:6px solid transparent;border-right:6px solid transparent;border-bottom:6px solid #3a3a3a"></div>
<div class="a" style="left:1265px;top:955.5px;width:60px;height:48px;background:linear-gradient(#a8a8a8,#6a6a6a)"></div>
<div class="a" style="left:1276px;top:963px;width:38px;height:38px;border-radius:6px;background:#2a2a2a"></div>
<div class="a" style="left:1279px;top:966px;width:32px;height:32px;border-radius:4px;background:linear-gradient(#a8a8a8 0%,#a0a0a0 50%,#8a8a8a 50%,#8a8a8a 100%)"></div>
<div class="a" style="left:1287px;top:974px;width:17px;height:17px;background:linear-gradient(#1a1a1a 50%,#000 50%)"></div>
<div class="a" style="left:1325.7px;top:931.8px;width:58.8px;height:38px;background:linear-gradient(#b4b4b4,#8c8c8c 50%,#6e6e6e);border-right:1px solid #3a3a3a"></div>
<div class="a" style="left:1342.6px;top:938.3px;width:25px;height:25px;border-radius:50%;background:linear-gradient(#8c8c8c,#b0b0b0)"></div>
<div class="a" style="left:1384.5px;top:931.8px;width:55.8px;height:38px;background:linear-gradient(#b4b4b4,#8c8c8c 50%,#6e6e6e);border-right:1px solid #3a3a3a"></div>
<div class="a" style="left:1399.9px;top:938.3px;width:25px;height:25px;border-radius:50%;background:linear-gradient(#8c8c8c,#b0b0b0)"></div>
<div class="a" style="left:1440.3px;top:931.8px;width:56.8px;height:38px;background:linear-gradient(#808080,#606060 50%,#4a4a4a);border-right:1px solid #3a3a3a"></div>
<div class="a" style="left:1456.2px;top:938.3px;width:25px;height:25px;border-radius:50%;background:linear-gradient(#5a5a5a,#7a7a7a)"></div>
<div class="a" style="left:1497.1px;top:931.8px;width:55.8px;height:38px;background:linear-gradient(#b4b4b4,#8c8c8c 50%,#6e6e6e);border-right:1px solid #3a3a3a"></div>
<div class="a" style="left:1512.5px;top:938.3px;width:25px;height:25px;border-radius:50%;background:linear-gradient(#8c8c8c,#b0b0b0)"></div>
<div class="a" style="left:1552.9px;top:931.8px;width:56.8px;height:38px;background:linear-gradient(#404040,#2c2c2c 50%,#242424);border-right:1px solid #3a3a3a"></div>
<div class="a" style="left:1568.8px;top:938.3px;width:25px;height:25px;border-radius:50%;background:linear-gradient(#2a2a2a,#3a3a3a)"></div>
<div class="a" style="left:1609.7px;top:931.8px;width:50.3px;height:38px;background:linear-gradient(#b4b4b4,#8c8c8c 50%,#6e6e6e);border-right:1px solid #3a3a3a"></div>
<div class="a" style="left:1626.0px;top:938.3px;width:25px;height:25px;border-radius:50%;background:linear-gradient(#8c8c8c,#b0b0b0)"></div>
<div class="a" style="left:1350px;top:946px;width:10px;height:10px;background:#2e2e2e"></div>
<div class="a" style="left:1408px;top:945px;width:0;height:0;border-top:6px solid transparent;border-bottom:6px solid transparent;border-left:10px solid #2e2e2e"></div>
<div class="t" style="left:1458px;top:942px;font-size:14px;font-weight:bold;color:#222;letter-spacing:-1px">[&#183;&#183;]</div>
<div class="t" style="left:1517.5px;top:939.5px;font-size:22px;font-weight:bold;color:#383838">&#8734;</div>
<svg class="a" style="left:1571px;top:940px" width="22" height="22" viewBox="0 0 22 22"><path d="M5,11 a6,6 0 0 1 10.5,-4 M17,11 a6,6 0 0 1 -10.5,4" fill="none" stroke="#1e1e1e" stroke-width="2.6"/><path d="M13,4 l5,1 l-1.5,4 z M9,18 l-5,-1 l1.5,-4 z" fill="#1e1e1e"/></svg>
<div class="a" style="left:1325.7px;top:970.7px;width:171px;height:33px;border-radius:5px 0 0 0;background:linear-gradient(#b8b8b8,#8c8c8c);border-right:1px solid #3a3a3a"></div>
<div class="a" style="left:1497px;top:970.7px;width:170px;height:33px;background:linear-gradient(#b8b8b8,#8c8c8c)"></div>
<div class="a" style="left:1353px;top:978px;width:25px;height:25px;border-radius:50%;background:linear-gradient(#8c8c8c,#b0b0b0)"></div>
<div class="a" style="left:1619px;top:978px;width:25px;height:25px;border-radius:50%;background:linear-gradient(#8c8c8c,#b0b0b0)"></div>
<div class="t" style="left:1356px;top:979px;font-size:22px;font-weight:bold;color:#3a3a3a">&#171;</div>
<div class="t" style="left:1622px;top:979px;font-size:22px;font-weight:bold;color:#3a3a3a">&#187;</div>
<div class="t" style="left:1396.36px;top:976.00px;font-size:33px;font-weight:bold;color:#3a3a3a;transform:scaleX(0.8182);transform-origin:0 0;">Back</div>
<div class="t" style="left:1530.12px;top:975.00px;font-size:33px;font-weight:bold;color:#3a3a3a;transform:scaleX(0.9420);transform-origin:0 0;">Next</div>
<div class="a" style="left:1260px;top:931.8px;width:6px;height:72px;background:#3a3a3a"></div>
</body></html>
